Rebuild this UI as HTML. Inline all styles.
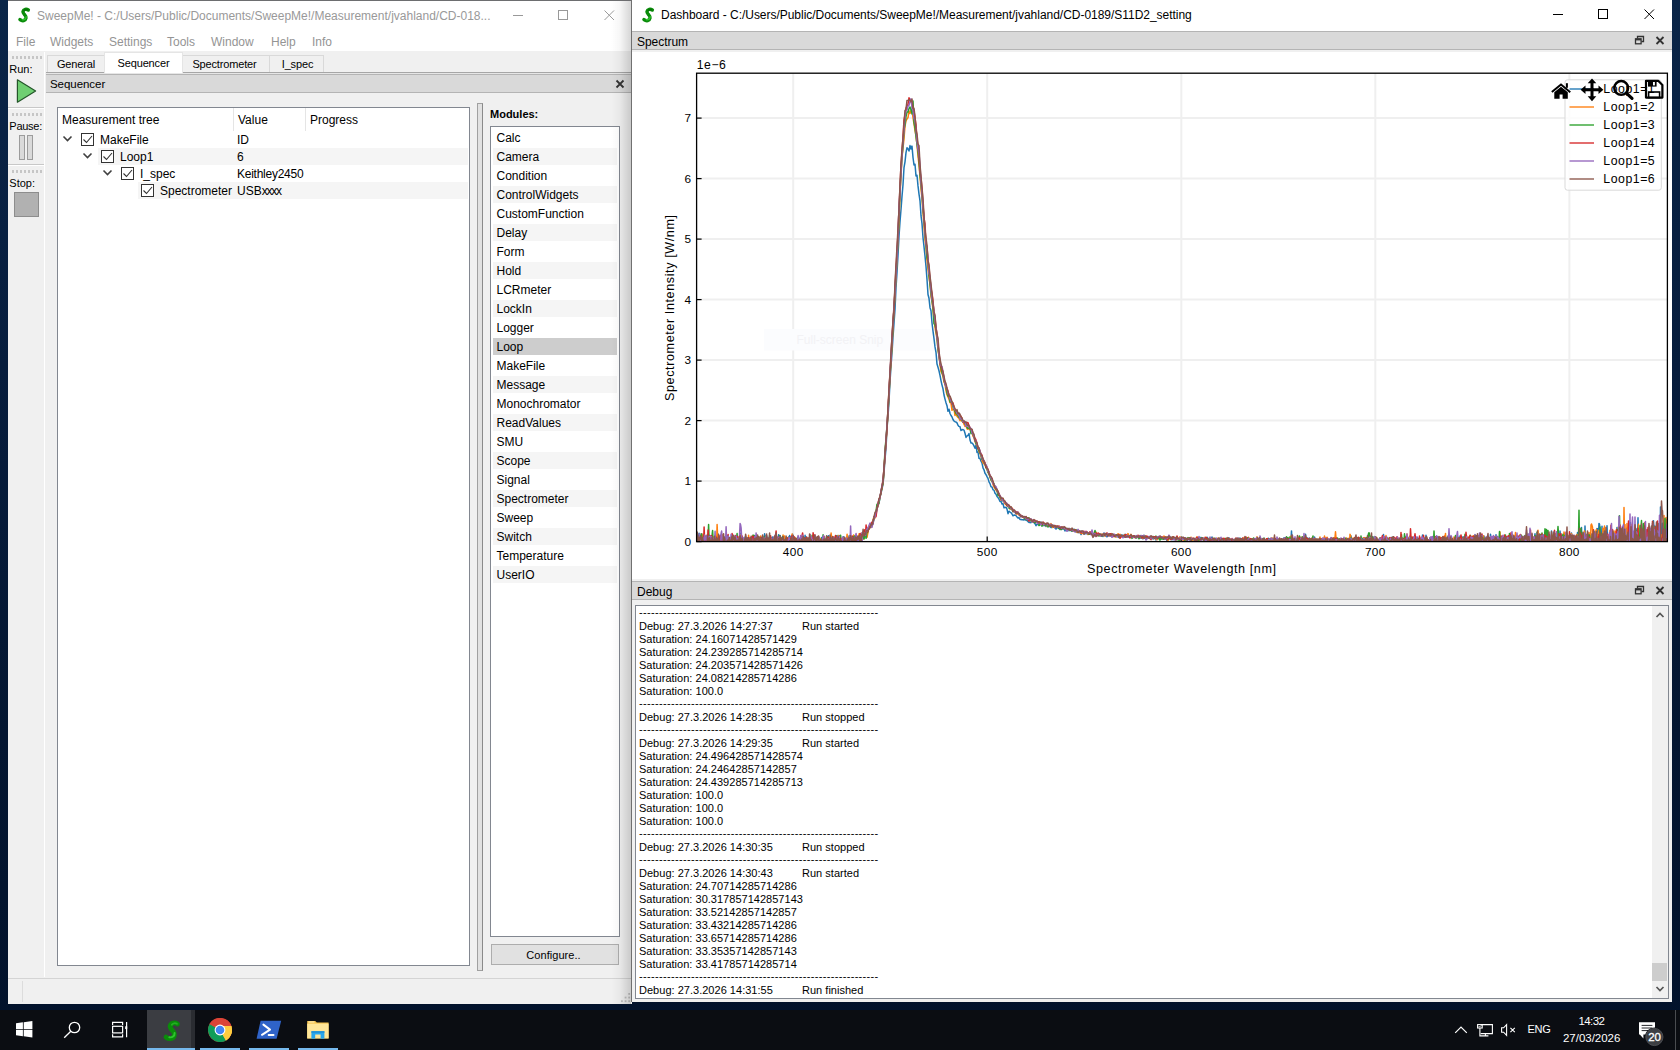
<!DOCTYPE html>
<html><head><meta charset="utf-8"><title>SweepMe!</title>
<style>
*{box-sizing:border-box;margin:0;padding:0}
html,body{width:1680px;height:1050px;overflow:hidden}
body{font-family:"Liberation Sans",sans-serif;font-size:12px;color:#000;position:relative;
 background:linear-gradient(180deg,#0a2548 0%,#071d3d 35%,#041631 70%,#02122b 100%)}
.abs{position:absolute}
.t{position:absolute;white-space:pre;line-height:1}
/* ---------- left window ---------- */
#lw{position:absolute;left:8px;top:0;width:624px;height:1004px;background:#f0f0f0;overflow:hidden}
#lw .title{position:absolute;left:0;top:0;width:100%;height:31px;background:#fff}
#lw .menu{position:absolute;left:0;top:31px;width:100%;height:20px;background:#fff}
#lw .menu span{position:absolute;top:4px;color:#949494;font-size:12px;line-height:14px;white-space:pre}
.dockhdr{position:absolute;background:#d9d9d9;border-top:1px solid #b4b4b4;border-bottom:1px solid #b4b4b4}
.tab{position:absolute;top:55px;height:17px;background:#f0f0f0;border:1px solid #d9d9d9;border-bottom:none;font-size:11px;line-height:14px;text-align:center;padding-top:1px;white-space:pre;letter-spacing:-0.15px}
.tab.sel{top:52px;height:21px;background:#fff;padding-top:3px;border-color:#e5e5e5}
.tb{position:absolute;font-size:11px;line-height:13px;white-space:pre}
.grip{position:absolute;left:4px;width:30px;height:3px;background:repeating-linear-gradient(90deg,#c6c6c6 0 2px,transparent 2px 4px)}
.tree{position:absolute;left:49px;top:107px;width:413px;height:859px;background:#fff;border:1px solid #828790}
.tree .r{position:absolute;left:1px;height:17px;background:#f5f5f5}
.tree .tx{position:absolute;font-size:12px;line-height:14px;white-space:pre}
.cb{position:absolute;width:13px;height:13px;border:1px solid #333;background:#fff}
.mods{position:absolute;left:482px;top:126px;width:130px;height:811px;background:#fff;border:1px solid #828790}
.mods div{position:absolute;left:2px;width:124px;height:17px;font-size:12px;line-height:17.6px;padding-left:3.5px;padding-top:0.9px;white-space:pre}
.mods div.a{background:#f5f5f5}
.mods div.s{background:#cdcdcd}
/* ---------- dashboard ---------- */
#dw{position:absolute;left:632px;top:0;width:1040px;height:1002px;background:#f0f0f0;overflow:hidden;box-shadow:-1px 0 0 #707070}
#dw .title{position:absolute;left:0;top:0;width:100%;height:31px;background:#fff}
.dbg{position:absolute;left:3px;top:605px;width:1034px;height:394px;background:#fff;border:1px solid #828790;overflow:hidden}
.dbg .lines{position:absolute;left:3px;top:0.5px}
.dbg .ln{position:absolute;left:0;font-size:11px;line-height:13px;height:13px;white-space:pre;letter-spacing:0.02px}
/* ---------- taskbar ---------- */
#tbar{position:absolute;left:0;top:1010px;width:1680px;height:40px;background:#0b0d12}
#tbar .ul{position:absolute;top:38px;height:2px;background:#76b9ed}
#tbar .w{color:#fff;position:absolute;white-space:pre;line-height:1}
.dbg .ln.d{letter-spacing:0.33px;margin-top:-1px}
</style></head><body>
<div id="lw">
 <div class="title">
  <svg class="abs" style="left:9px;top:6px" width="16" height="19" viewBox="0 0 16 19"><path d="M11.3 4 C9.5 2.8 6.5 3 6 5.5 C5.6 8 9.6 9.5 9 12 C8.5 14.8 5.5 15.4 3 13.6" fill="none" stroke="#0a8c0a" stroke-width="3.5" stroke-linecap="round"/><path d="M9.2 10.6 C9.3 13 7.5 14 5.4 13.7" fill="none" stroke="#2fc42f" stroke-width="1.4" stroke-linecap="round"/><path d="M10.9 3.9 C9.6 3.2 7.8 3.4 7.2 4.6" fill="none" stroke="#067406" stroke-width="1.4" stroke-linecap="round"/></svg>
  <span class="t" style="left:29px;top:9.5px;font-size:12px;color:#999">SweepMe! - C:/Users/Public/Documents/SweepMe!/Measurement/jvahland/CD-018...</span>
  <svg class="abs" style="left:500px;top:5px" width="115" height="22" viewBox="0 0 115 22" fill="none" stroke="#999" stroke-width="1"><path d="M5 10.5H15"/><rect x="50.5" y="5.5" width="9" height="9"/><path d="M96.5 5.5l9.5 9.5M106 5.5l-9.5 9.5"/></svg>
 </div>
 <div class="menu">
  <span style="left:8px">File</span><span style="left:42px">Widgets</span><span style="left:101px">Settings</span><span style="left:159px">Tools</span><span style="left:203px">Window</span><span style="left:263px">Help</span><span style="left:304px">Info</span>
 </div>
 <!-- toolbar column -->
 <div class="abs" style="left:36px;top:52px;width:1px;height:925px;background:#fff"></div>
 <div class="grip" style="top:56px"></div>
 <span class="tb" style="left:1.3px;top:63px">Run:</span>
 <svg class="abs" style="left:7px;top:77px" width="24" height="28" viewBox="0 0 24 28"><path d="M2.4 2.8 L20.6 14 L2.4 25.2 Z" fill="#6fcf72" stroke="#24562a" stroke-width="1.2" stroke-linejoin="round"/></svg>
 <div class="abs" style="left:0;top:107px;width:36px;height:1px;background:#c8c8c8"></div><div class="abs" style="left:0;top:108px;width:36px;height:1px;background:#fff"></div>
 <div class="grip" style="top:113px"></div>
 <span class="tb" style="left:1.3px;top:120px;letter-spacing:-0.25px">Pause:</span>
 <div class="abs" style="left:11px;top:135px;width:6px;height:25px;background:#dadada;border:1px solid #9c9c9c"></div>
 <div class="abs" style="left:19px;top:135px;width:6px;height:25px;background:#dadada;border:1px solid #9c9c9c"></div>
 <div class="abs" style="left:0;top:164px;width:36px;height:1px;background:#c8c8c8"></div><div class="abs" style="left:0;top:165px;width:36px;height:1px;background:#fff"></div>
 <div class="grip" style="top:170px"></div>
 <span class="tb" style="left:1.3px;top:177px">Stop:</span>
 <div class="abs" style="left:5.5px;top:192px;width:25px;height:25px;background:#b1b1b1;border:1px solid #8d8d8d"></div>
 <!-- tabs -->
 <div class="abs" style="left:38px;top:72px;width:600px;height:1px;background:#a6a6a6"></div><div class="abs" style="left:38px;top:73px;width:600px;height:1px;background:#e6e6e6"></div>
 <div class="tab" style="left:39px;width:58px">General</div>
 <div class="tab" style="left:174px;width:88px;padding-right:3px">Spectrometer</div>
 <div class="tab" style="left:261px;width:55px;padding-left:2px">I_spec</div>
 <div class="tab sel" style="left:96px;width:79px">Sequencer</div>
 <!-- Sequencer dock -->
 <div class="dockhdr" style="left:38px;top:74px;width:600px;height:19px"></div>
 <span class="tb" style="left:42px;top:78.3px;font-size:11.5px;letter-spacing:-0.05px">Sequencer</span>
 <svg class="abs" style="left:607px;top:79px" width="10" height="10" viewBox="0 0 10 10"><path d="M1.5 1.5l7 7M8.5 1.5l-7 7" stroke="#333" stroke-width="1.8"/></svg>
 <!-- tree -->
 <div class="tree">
  <div class="abs" style="left:175px;top:0;width:1px;height:23px;background:#e5e5e5"></div>
  <div class="abs" style="left:247px;top:0;width:1px;height:23px;background:#e5e5e5"></div>
  <span class="tx" style="left:4px;top:5px">Measurement tree</span><span class="tx" style="left:180px;top:5px">Value</span><span class="tx" style="left:252px;top:5px">Progress</span>
  <div class="r" style="left:40px;top:40px;width:370px"></div>
  <div class="r" style="left:80px;top:74px;width:330px"></div>
  <svg class="abs" style="left:4.2px;top:26.2px" width="60" height="50" viewBox="0 0 60 50" fill="none" stroke="#404040" stroke-width="1.6"><path d="M1.5 2.5l4 4l4-4"/><path d="M21.5 19.5l4 4l4-4"/><path d="M41.5 36.5l4 4l4-4"/></svg>
  <div class="cb" style="left:23px;top:25px"></div><div class="cb" style="left:43px;top:42px"></div><div class="cb" style="left:63px;top:59px"></div><div class="cb" style="left:83px;top:76px"></div>
  <svg class="abs" style="left:23px;top:25px" width="80" height="70" viewBox="0 0 80 70" fill="none" stroke="#333" stroke-width="1.1"><path d="M2.5 6.5l3 3l5.5-6.5"/><path d="M22.5 23.5l3 3l5.5-6.5"/><path d="M42.5 40.5l3 3l5.5-6.5"/><path d="M62.5 57.5l3 3l5.5-6.5"/></svg>
  <span class="tx" style="left:42px;top:24.5px">MakeFile</span><span class="tx" style="left:179px;top:24.5px">ID</span>
  <span class="tx" style="left:62px;top:41.5px">Loop1</span><span class="tx" style="left:179px;top:41.5px">6</span>
  <span class="tx" style="left:82px;top:58.5px">I_spec</span><span class="tx" style="left:179px;top:58.5px;letter-spacing:-0.25px">Keithley2450</span>
  <span class="tx" style="left:102px;top:75.5px">Spectrometer</span><span class="tx" style="left:179px;top:75.5px">USB<span style="letter-spacing:-1.2px">xxxx</span></span>
 </div>
 <!-- splitter handle -->
 <div class="abs" style="left:469px;top:103px;width:6px;height:868px;background:#e1e1e1;border:1px solid #a0a0a0;border-right-color:#8a8a8a"></div>
 <!-- modules -->
 <span class="t" style="left:482px;top:108.7px;font-size:11px;font-weight:700">Modules:</span>
 <div class="mods">
  <div class="" style="top:2px">Calc</div>
  <div class="a" style="top:21px">Camera</div>
  <div class="" style="top:40px">Condition</div>
  <div class="a" style="top:59px">ControlWidgets</div>
  <div class="" style="top:78px">CustomFunction</div>
  <div class="a" style="top:97px">Delay</div>
  <div class="" style="top:116px">Form</div>
  <div class="a" style="top:135px">Hold</div>
  <div class="" style="top:154px">LCRmeter</div>
  <div class="a" style="top:173px">LockIn</div>
  <div class="" style="top:192px">Logger</div>
  <div class="s" style="top:211px">Loop</div>
  <div class="" style="top:230px">MakeFile</div>
  <div class="a" style="top:249px">Message</div>
  <div class="" style="top:268px">Monochromator</div>
  <div class="a" style="top:287px">ReadValues</div>
  <div class="" style="top:306px">SMU</div>
  <div class="a" style="top:325px">Scope</div>
  <div class="" style="top:344px">Signal</div>
  <div class="a" style="top:363px">Spectrometer</div>
  <div class="" style="top:382px">Sweep</div>
  <div class="a" style="top:401px">Switch</div>
  <div class="" style="top:420px">Temperature</div>
  <div class="a" style="top:439px">UserIO</div>
 </div>
 <div class="abs" style="left:483px;top:944px;width:128px;height:21px;background:#e1e1e1;border:1px solid #adadad;font-size:11px;line-height:20.6px;text-align:center;padding-right:3px;letter-spacing:0.05px">Configure..</div>
 <!-- status bar -->
 <div class="abs" style="left:0;top:978px;width:638px;height:1px;background:#d4d4d4"></div>
 <div class="abs" style="left:14px;top:981px;width:1px;height:21px;background:#dcdcdc"></div>
 <svg class="abs" style="left:612.5px;top:992.5px" width="10" height="10" viewBox="0 0 11 11" fill="#bfbfbf"><rect x="8" y="0" width="2" height="2"/><rect x="4" y="4" width="2" height="2"/><rect x="8" y="4" width="2" height="2"/><rect x="0" y="8" width="2" height="2"/><rect x="4" y="8" width="2" height="2"/><rect x="8" y="8" width="2" height="2"/></svg>
 <!-- shadow from dashboard window -->
 <div class="abs" style="left:603px;top:0;width:20px;height:1004px;background:linear-gradient(90deg,rgba(0,0,0,0),rgba(0,0,0,0.035) 45%,rgba(0,0,0,0.16))"></div>
 <div class="abs" style="left:0;top:0;width:630px;height:1px;background:#6d6e70"></div>
</div>
<div id="dw">
 <div class="title">
  <svg class="abs" style="left:9px;top:6px" width="16" height="19" viewBox="0 0 16 19"><path d="M11.3 4 C9.5 2.8 6.5 3 6 5.5 C5.6 8 9.6 9.5 9 12 C8.5 14.8 5.5 15.4 3 13.6" fill="none" stroke="#0a8c0a" stroke-width="3.5" stroke-linecap="round"/><path d="M9.2 10.6 C9.3 13 7.5 14 5.4 13.7" fill="none" stroke="#2fc42f" stroke-width="1.4" stroke-linecap="round"/><path d="M10.9 3.9 C9.6 3.2 7.8 3.4 7.2 4.6" fill="none" stroke="#067406" stroke-width="1.4" stroke-linecap="round"/></svg>
  <span class="t" style="left:29px;top:8.8px;font-size:12px;color:#000;letter-spacing:-0.03px">Dashboard - C:/Users/Public/Documents/SweepMe!/Measurement/jvahland/CD-0189/S11D2_setting</span>
  <svg class="abs" style="left:915px;top:5px" width="115" height="22" viewBox="0 0 115 22" fill="none" stroke="#000" stroke-width="1"><path d="M6 9.5H16"/><rect x="51.5" y="4.5" width="9" height="9"/><path d="M97.5 4.5l9.5 9.5M107 4.5l-9.5 9.5"/></svg>
 </div>
 <div class="dockhdr" style="left:0;top:31px;width:1040px;height:19px"></div>
 <span class="tb" style="left:5px;top:35.6px;font-size:12px;letter-spacing:-0.05px">Spectrum</span>
 <svg class="abs" style="left:1002px;top:35px" width="32" height="11" viewBox="0 0 32 11" fill="none" stroke="#333"><path d="M3.5 3.5V1.5H9.5V6.5H7.5" stroke-width="1.3"/><rect x="1.5" y="3.8" width="5.6" height="5" stroke-width="1.3"/><path d="M1.5 4.6H7" stroke-width="1.6"/><path d="M22.5 2l7 7M29.5 2l-7 7" stroke-width="1.8"/></svg>
<svg id="chart" width="1040" height="527" viewBox="632 52 1040 527" style="position:absolute;left:0;top:52px">
<defs><clipPath id="ax"><rect x="696.6" y="73.2" width="970.8" height="468.4"/></clipPath></defs>
<rect x="632" y="52" width="1040" height="527" fill="#fff"/>
<g stroke="#efefef" stroke-width="2"><line x1="793.2" y1="73.2" x2="793.2" y2="541.6"/><line x1="987.2" y1="73.2" x2="987.2" y2="541.6"/><line x1="1181.3" y1="73.2" x2="1181.3" y2="541.6"/><line x1="1375.3" y1="73.2" x2="1375.3" y2="541.6"/><line x1="1569.4" y1="73.2" x2="1569.4" y2="541.6"/><line x1="696.6" y1="481.1" x2="1667.4" y2="481.1"/><line x1="696.6" y1="420.6" x2="1667.4" y2="420.6"/><line x1="696.6" y1="360.1" x2="1667.4" y2="360.1"/><line x1="696.6" y1="299.6" x2="1667.4" y2="299.6"/><line x1="696.6" y1="239.1" x2="1667.4" y2="239.1"/><line x1="696.6" y1="178.6" x2="1667.4" y2="178.6"/><line x1="696.6" y1="118.1" x2="1667.4" y2="118.1"/></g>
<rect x="764" y="329" width="172" height="21.5" fill="#fbfcfe"/><text x="796.5" y="344.3" font-size="12" fill="#f2f2f5" font-family="Liberation Sans, sans-serif">Full-screen Snip</text>
<g stroke="#000" stroke-width="1.2"><line x1="793.2" y1="541.6" x2="793.2" y2="536.6"/><line x1="987.2" y1="541.6" x2="987.2" y2="536.6"/><line x1="1181.3" y1="541.6" x2="1181.3" y2="536.6"/><line x1="1375.3" y1="541.6" x2="1375.3" y2="536.6"/><line x1="1569.4" y1="541.6" x2="1569.4" y2="536.6"/><line x1="696.6" y1="541.6" x2="701.6" y2="541.6"/><line x1="696.6" y1="481.1" x2="701.6" y2="481.1"/><line x1="696.6" y1="420.6" x2="701.6" y2="420.6"/><line x1="696.6" y1="360.1" x2="701.6" y2="360.1"/><line x1="696.6" y1="299.6" x2="701.6" y2="299.6"/><line x1="696.6" y1="239.1" x2="701.6" y2="239.1"/><line x1="696.6" y1="178.6" x2="701.6" y2="178.6"/><line x1="696.6" y1="118.1" x2="701.6" y2="118.1"/></g>
<g clip-path="url(#ax)"><polyline points="696.6,544.5 697.1,539.9 697.6,535.3 698.1,539.1 698.6,543.8 699.1,533.3 699.6,538.6 700.1,538.6 700.6,538.4 701.1,537.3 701.6,533.7 702.1,542.7 702.6,540.6 703.1,535.3 703.6,545.0 704.1,539.8 704.6,542.9 705.1,540.8 705.6,539.3 706.1,546.8 706.6,543.9 707.1,545.1 707.6,541.5 708.1,545.5 708.6,536.1 709.1,542.6 709.6,535.5 710.1,542.0 710.6,539.9 711.1,540.5 711.6,540.7 712.1,544.2 712.6,539.7 713.1,539.6 713.6,539.2 714.1,538.9 714.6,543.3 715.1,541.7 715.6,542.8 716.1,545.9 716.6,539.7 717.1,542.7 717.6,541.0 718.1,534.0 718.6,540.1 719.1,540.4 719.6,537.5 720.1,537.0 720.6,535.3 721.1,542.3 721.6,535.4 722.1,541.1 722.6,544.2 723.1,543.5 723.6,537.5 724.1,538.5 724.6,537.0 725.1,543.5 725.6,541.8 726.1,548.0 726.6,546.6 727.1,540.8 727.6,536.1 728.1,537.5 728.6,543.0 729.1,537.3 729.6,542.4 730.1,539.8 730.6,538.3 731.1,543.3 731.6,543.3 732.1,538.9 732.6,541.3 733.1,542.3 733.6,536.7 734.1,541.4 734.6,539.6 735.1,543.5 735.6,538.7 736.1,546.7 736.6,541.8 737.1,546.1 737.6,537.4 738.1,540.5 738.6,539.4 739.1,545.6 739.6,540.3 740.1,541.8 740.6,533.3 741.1,545.2 741.6,539.7 742.1,537.8 742.6,544.1 743.1,540.4 743.6,543.8 744.1,540.5 744.6,539.8 745.1,537.1 745.6,540.3 746.1,542.6 746.6,539.1 747.1,540.7 747.6,537.7 748.1,542.4 748.6,537.0 749.1,540.3 749.6,540.1 750.1,538.0 750.6,542.2 751.1,542.1 751.6,539.3 752.1,540.9 752.6,540.6 753.1,541.8 753.6,541.5 754.1,538.4 754.6,535.4 755.1,544.4 755.6,536.6 756.1,538.7 756.6,537.5 757.1,540.2 757.6,542.7 758.1,541.2 758.6,543.2 759.1,545.2 759.6,540.9 760.1,540.0 760.6,541.5 761.1,540.2 761.6,544.8 762.1,537.9 762.6,541.1 763.1,540.6 763.6,538.8 764.1,542.2 764.6,533.8 765.1,537.4 765.6,537.4 766.1,540.3 766.6,542.6 767.1,539.4 767.6,542.6 768.1,540.1 768.6,540.1 769.1,537.4 769.6,539.5 770.1,539.8 770.6,537.1 771.1,541.0 771.6,542.1 772.1,542.0 772.6,536.9 773.1,540.6 773.6,542.2 774.1,545.8 774.6,543.4 775.1,539.9 775.6,539.2 776.1,536.4 776.6,542.5 777.1,539.4 777.6,537.3 778.1,546.6 778.6,534.7 779.1,543.6 779.6,543.6 780.1,535.4 780.6,539.6 781.1,537.6 781.6,539.0 782.1,539.9 782.6,541.0 783.1,542.7 783.6,539.2 784.1,545.6 784.6,541.1 785.1,538.7 785.6,543.6 786.1,538.5 786.6,538.2 787.1,540.5 787.6,541.1 788.1,539.3 788.6,537.1 789.1,541.3 789.6,535.5 790.1,536.8 790.6,538.1 791.1,537.1 791.6,537.4 792.1,548.0 792.6,534.3 793.1,544.3 793.6,540.1 794.1,543.4 794.6,539.1 795.1,539.6 795.6,540.0 796.1,547.8 796.6,538.6 797.1,540.0 797.6,545.8 798.1,536.9 798.6,541.0 799.1,542.5 799.6,538.3 800.1,542.0 800.6,539.7 801.1,541.5 801.6,542.9 802.1,543.5 802.6,536.2 803.1,540.4 803.6,542.5 804.1,542.1 804.6,542.8 805.1,535.3 805.6,539.7 806.1,540.2 806.6,536.9 807.1,542.2 807.6,543.3 808.1,541.9 808.6,540.2 809.1,541.1 809.6,541.5 810.1,540.3 810.6,541.7 811.1,543.4 811.6,538.8 812.1,541.3 812.6,541.4 813.1,539.4 813.6,539.7 814.1,543.4 814.6,544.7 815.1,544.1 815.6,543.7 816.1,540.0 816.6,541.9 817.1,543.0 817.6,544.0 818.1,537.6 818.6,541.7 819.1,540.1 819.6,540.9 820.1,543.0 820.6,539.7 821.1,540.4 821.6,537.5 822.1,539.3 822.6,543.8 823.1,541.0 823.6,541.0 824.1,540.9 824.6,543.8 825.1,544.8 825.6,541.1 826.1,539.9 826.6,543.6 827.1,536.2 827.6,539.2 828.1,541.9 828.6,535.8 829.1,544.4 829.6,543.2 830.1,543.3 830.6,537.9 831.1,542.5 831.6,539.0 832.1,540.1 832.6,542.1 833.1,540.4 833.6,543.6 834.1,538.7 834.6,543.1 835.1,542.8 835.6,539.1 836.1,541.9 836.6,536.2 837.1,537.4 837.6,544.6 838.1,540.3 838.6,541.0 839.1,535.6 839.6,542.0 840.1,542.2 840.6,541.1 841.1,541.1 841.6,542.7 842.1,539.9 842.6,543.3 843.1,542.4 843.6,536.7 844.1,539.6 844.6,542.7 845.1,547.5 845.6,540.9 846.1,543.1 846.6,543.1 847.1,537.4 847.6,540.3 848.1,542.9 848.6,539.4 849.1,541.2 849.6,539.6 850.1,535.5 850.6,539.7 851.1,541.1 851.6,545.6 852.1,538.0 852.6,539.9 853.1,538.5 853.6,543.2 854.1,540.2 854.6,539.1 855.1,538.0 855.6,538.4 856.1,539.5 856.6,535.6 857.1,538.5 857.6,543.1 858.1,541.0 858.6,538.0 859.1,537.1 859.6,540.6 860.1,540.1 860.6,535.3 861.1,536.3 861.6,535.8 862.1,534.8 862.6,535.9 863.1,537.4 863.6,532.2 864.1,532.3 864.6,530.2 865.1,532.7 865.6,532.8 866.1,531.9 866.6,531.1 867.1,535.5 867.6,530.9 868.0,530.9 869.0,528.1 870.0,526.7 871.0,526.5 872.0,525.2 873.0,524.0 874.0,518.5 875.0,517.0 876.0,514.0 877.0,508.9 878.0,505.3 879.0,503.1 880.0,497.2 881.0,493.2 882.0,488.9 883.0,484.7 884.0,472.7 885.0,458.9 886.0,448.5 887.0,428.4 888.0,416.5 889.0,401.1 890.0,381.6 891.0,366.1 892.0,352.8 893.0,337.0 894.0,323.2 895.0,309.1 896.0,287.7 897.0,272.5 898.0,255.3 899.0,236.1 900.0,221.7 901.0,209.5 902.0,196.4 903.0,184.7 904.0,167.7 905.0,161.8 906.0,152.7 907.0,147.7 908.0,148.9 909.0,151.0 910.0,145.6 911.0,149.0 912.0,146.1 913.0,157.5 914.0,164.9 915.0,164.2 916.0,175.9 917.0,175.2 918.0,185.9 919.0,194.1 920.0,200.8 921.0,215.7 922.0,223.6 923.0,237.5 924.0,246.7 925.0,256.0 926.0,266.4 927.0,279.5 928.0,294.5 929.0,298.3 930.0,307.7 931.0,310.8 932.0,323.0 933.0,331.2 934.0,338.6 935.0,346.9 936.0,352.3 937.0,364.1 938.0,367.2 939.0,370.8 940.0,375.3 941.0,380.6 942.0,385.1 943.0,388.8 944.0,395.0 945.0,399.1 946.0,402.7 947.0,405.7 948.0,411.3 949.0,409.2 950.0,413.5 951.0,415.5 952.0,416.9 953.0,419.5 954.0,421.0 955.0,421.7 956.0,422.0 957.0,422.9 958.0,425.3 959.0,426.4 960.0,426.8 961.0,430.5 962.0,429.8 963.0,429.6 964.0,430.1 965.0,433.3 966.0,437.4 967.0,436.0 968.0,435.3 969.0,433.5 970.0,440.0 971.0,443.1 972.0,443.0 973.0,444.1 974.0,445.9 975.0,448.3 976.0,445.1 977.0,452.4 978.0,452.0 979.0,458.3 980.0,458.4 981.0,461.2 982.0,463.0 983.0,467.9 984.0,469.8 985.0,473.2 986.0,474.6 987.0,476.6 988.0,478.4 989.0,481.9 990.0,483.6 991.0,486.8 992.0,486.9 993.0,489.8 994.0,490.1 995.0,493.3 996.0,494.2 997.0,496.4 998.0,497.6 999.0,499.2 1000.0,501.4 1001.0,501.3 1002.0,504.0 1003.0,503.6 1004.0,507.8 1005.0,507.6 1006.0,507.2 1007.0,509.2 1008.0,513.7 1009.0,511.2 1010.0,512.0 1011.0,512.7 1012.0,514.0 1013.0,515.8 1014.0,515.0 1015.0,515.3 1016.0,515.6 1017.0,516.9 1018.0,518.0 1019.0,517.5 1020.0,519.5 1021.0,519.5 1022.0,519.8 1023.0,519.7 1024.0,519.9 1025.0,519.0 1026.0,520.3 1027.0,520.4 1028.0,521.6 1029.0,522.4 1030.0,522.3 1031.0,522.7 1032.0,521.2 1033.0,522.0 1034.0,522.7 1035.0,523.6 1036.0,525.7 1037.0,524.2 1038.0,524.6 1039.0,525.0 1040.0,524.3 1041.0,522.1 1042.0,523.6 1043.0,525.4 1044.0,525.4 1045.0,525.5 1046.0,526.4 1047.0,525.2 1048.0,525.5 1049.0,526.5 1050.0,526.4 1051.0,527.4 1052.0,527.4 1053.0,526.6 1054.0,527.0 1055.0,527.8 1056.0,529.1 1057.0,526.5 1058.0,528.2 1059.0,528.0 1060.0,529.5 1061.0,528.6 1062.0,528.1 1063.0,529.1 1064.0,528.7 1065.0,531.0 1066.0,529.0 1067.0,530.3 1068.0,530.6 1069.0,530.4 1070.0,530.2 1071.0,530.6 1072.0,531.2 1073.0,530.6 1074.0,529.2 1075.0,530.9 1076.0,531.9 1077.0,530.9 1078.0,531.3 1079.0,532.7 1080.0,531.4 1081.0,534.6 1082.0,532.2 1083.0,531.3 1084.0,533.8 1085.0,533.4 1086.0,533.8 1087.0,532.3 1088.0,534.0 1089.0,533.7 1090.0,533.5 1091.0,533.2 1092.0,533.5 1093.0,535.0 1094.0,535.9 1095.0,533.8 1096.0,534.7 1097.0,534.4 1098.0,535.5 1099.0,535.1 1100.0,534.0 1101.0,536.3 1102.0,535.4 1103.0,536.5 1104.0,533.0 1105.0,535.2 1106.0,536.2 1107.0,536.8 1108.0,535.5 1109.0,535.5 1110.0,535.8 1111.0,534.6 1112.0,536.5 1113.0,535.2 1114.0,534.6 1115.0,536.4 1116.0,535.2 1117.0,534.8 1118.0,537.1 1119.0,537.2 1120.0,537.2 1121.0,535.8 1122.0,534.7 1123.0,537.5 1124.0,536.3 1125.0,534.2 1126.0,537.0 1127.0,536.0 1128.0,536.1 1129.0,537.0 1130.0,535.9 1131.0,536.4 1132.0,536.9 1133.0,537.1 1134.0,535.8 1135.0,536.8 1136.0,537.6 1137.0,537.5 1138.0,536.8 1139.0,536.8 1140.0,538.3 1141.0,536.4 1142.0,538.3 1143.0,538.8 1144.0,537.6 1145.0,537.1 1146.0,536.6 1147.0,538.4 1148.0,537.8 1149.0,536.6 1150.0,537.6 1151.0,536.6 1152.0,537.1 1153.0,539.0 1154.0,538.4 1155.0,537.0 1156.0,539.9 1157.0,537.1 1158.0,538.0 1159.0,538.7 1160.0,536.0 1161.0,538.8 1162.0,538.6 1163.0,538.4 1164.0,538.8 1165.0,537.1 1166.0,537.9 1167.0,540.4 1168.0,537.3 1169.0,537.4 1170.0,537.6 1171.0,538.0 1172.0,539.8 1173.0,537.8 1174.0,539.0 1175.0,539.6 1176.0,538.6 1177.0,538.1 1178.0,539.6 1179.0,539.7 1180.0,538.3 1181.0,537.9 1182.0,539.4 1183.0,538.7 1184.0,538.9 1185.0,537.7 1186.0,538.7 1187.0,540.7 1188.0,539.8 1189.0,537.9 1190.0,537.8 1191.0,537.9 1192.0,539.3 1193.0,540.0 1194.0,538.5 1195.0,539.3 1196.0,539.5 1197.0,539.9 1198.0,539.0 1199.0,540.2 1200.0,539.7 1201.0,537.4 1202.0,539.5 1203.0,538.2 1204.0,539.2 1205.0,539.0 1206.0,539.3 1207.0,537.2 1208.0,539.2 1209.0,539.3 1210.0,539.4 1211.0,540.1 1212.0,536.9 1213.0,540.5 1214.0,541.3 1215.0,539.4 1216.0,539.2 1217.0,541.0 1218.0,539.5 1219.0,539.8 1220.0,541.6 1221.0,542.1 1222.0,539.5 1223.0,539.9 1224.0,539.0 1225.0,541.4 1226.0,538.7 1227.0,539.9 1228.0,539.5 1229.0,537.9 1230.0,540.1 1231.0,540.3 1232.0,540.6 1233.0,541.7 1234.0,540.2 1235.0,541.8 1235.5,541.3 1236.0,542.2 1236.5,539.2 1237.0,540.3 1237.5,538.7 1238.0,540.8 1238.5,540.6 1239.0,541.0 1239.5,541.2 1240.0,538.1 1240.5,543.4 1241.0,538.7 1241.5,538.8 1242.0,540.7 1242.5,540.0 1243.0,538.3 1243.5,540.2 1244.0,542.6 1244.5,541.0 1245.0,538.7 1245.5,541.3 1246.0,538.7 1246.5,541.3 1247.0,539.3 1247.5,540.8 1248.0,541.0 1248.5,540.6 1249.0,542.7 1249.5,539.5 1250.0,542.8 1250.5,540.4 1251.0,541.6 1251.5,539.8 1252.0,538.7 1252.5,540.2 1253.0,540.6 1253.5,539.9 1254.0,539.7 1254.5,539.2 1255.0,540.8 1255.5,538.8 1256.0,541.5 1256.5,540.4 1257.0,537.5 1257.5,540.0 1258.0,539.3 1258.5,539.7 1259.0,539.9 1259.5,537.8 1260.0,540.2 1260.5,542.2 1261.0,540.5 1261.5,540.0 1262.0,541.0 1262.5,541.0 1263.0,538.7 1263.5,539.6 1264.0,538.3 1264.5,539.9 1265.0,541.7 1265.5,540.6 1266.0,540.7 1266.5,540.7 1267.0,539.3 1267.5,542.5 1268.0,540.7 1268.5,538.3 1269.0,541.7 1269.5,539.4 1270.0,540.3 1270.5,542.4 1271.0,541.5 1271.5,538.6 1272.0,541.2 1272.5,540.2 1273.0,540.4 1273.5,541.8 1274.0,538.8 1274.5,539.1 1275.0,539.8 1275.5,540.5 1276.0,541.4 1276.5,543.1 1277.0,539.1 1277.5,546.3 1278.0,539.1 1278.5,539.9 1279.0,539.7 1279.5,540.4 1280.0,541.7 1280.5,541.5 1281.0,540.6 1281.5,539.8 1282.0,538.7 1282.5,540.0 1283.0,539.7 1283.5,541.4 1284.0,537.8 1284.5,539.7 1285.0,537.9 1285.5,539.1 1286.0,540.3 1286.5,541.9 1287.0,538.2 1287.5,541.6 1288.0,540.0 1288.5,539.0 1289.0,539.3 1289.5,541.9 1290.0,541.7 1290.5,536.8 1291.0,539.4 1291.5,530.9 1292.0,541.5 1292.5,542.7 1293.0,542.1 1293.5,541.7 1294.0,541.0 1294.5,540.0 1295.0,539.5 1295.5,540.8 1296.0,541.5 1296.5,540.0 1297.0,541.2 1297.5,539.1 1298.0,541.0 1298.5,541.3 1299.0,538.7 1299.5,538.7 1300.0,538.1 1300.5,541.8 1301.0,537.3 1301.5,538.4 1302.0,540.1 1302.5,541.8 1303.0,540.7 1303.5,539.6 1304.0,540.3 1304.5,540.3 1305.0,539.0 1305.5,534.2 1306.0,538.2 1306.5,541.8 1307.0,542.9 1307.5,538.0 1308.0,538.4 1308.5,540.6 1309.0,542.9 1309.5,538.3 1310.0,541.2 1310.5,541.7 1311.0,540.8 1311.5,540.4 1312.0,542.9 1312.5,542.4 1313.0,540.6 1313.5,540.4 1314.0,542.8 1314.5,537.0 1315.0,538.7 1315.5,539.7 1316.0,539.6 1316.5,543.7 1317.0,540.4 1317.5,539.7 1318.0,540.4 1318.5,540.0 1319.0,539.6 1319.5,538.2 1320.0,538.8 1320.5,541.4 1321.0,538.8 1321.5,541.3 1322.0,540.2 1322.5,540.0 1323.0,540.6 1323.5,540.8 1324.0,540.1 1324.5,540.0 1325.0,544.4 1325.5,540.7 1326.0,541.8 1326.5,538.1 1327.0,540.0 1327.5,541.8 1328.0,539.8 1328.5,540.3 1329.0,539.7 1329.5,543.9 1330.0,541.1 1330.5,542.2 1331.0,538.2 1331.5,537.9 1332.0,541.0 1332.5,540.7 1333.0,540.7 1333.5,541.4 1334.0,542.2 1334.5,542.7 1335.0,538.7 1335.5,542.3 1336.0,539.9 1336.5,539.2 1337.0,539.7 1337.5,540.8 1338.0,539.6 1338.5,542.8 1339.0,542.3 1339.5,539.1 1340.0,539.5 1340.5,538.7 1341.0,540.6 1341.5,543.9 1342.0,541.4 1342.5,541.8 1343.0,538.9 1343.5,542.0 1344.0,539.0 1344.5,540.2 1345.0,540.1 1345.5,540.1 1346.0,539.5 1346.5,542.4 1347.0,538.5 1347.5,543.4 1348.0,543.3 1348.5,541.9 1349.0,539.3 1349.5,542.0 1350.0,537.5 1350.5,542.3 1351.0,535.9 1351.5,539.4 1352.0,539.0 1352.5,539.9 1353.0,539.0 1353.5,541.8 1354.0,543.0 1354.5,539.0 1355.0,539.4 1355.5,540.9 1356.0,541.0 1356.5,540.8 1357.0,540.3 1357.5,538.9 1358.0,541.2 1358.5,540.0 1359.0,538.4 1359.5,540.9 1360.0,539.5 1360.5,541.6 1361.0,540.4 1361.5,541.0 1362.0,538.4 1362.5,541.2 1363.0,542.7 1363.5,540.1 1364.0,541.5 1364.5,538.1 1365.0,539.8 1365.5,541.4 1366.0,542.6 1366.5,540.5 1367.0,541.0 1367.5,540.8 1368.0,540.1 1368.5,534.3 1369.0,542.0 1369.5,540.2 1370.0,539.0 1370.5,538.3 1371.0,540.8 1371.5,540.0 1372.0,541.0 1372.5,536.7 1373.0,541.7 1373.5,540.0 1374.0,542.0 1374.5,539.2 1375.0,541.9 1375.5,537.6 1376.0,541.7 1376.5,540.8 1377.0,540.7 1377.5,540.0 1378.0,541.8 1378.5,544.1 1379.0,548.0 1379.5,541.1 1380.0,538.5 1380.5,538.5 1381.0,539.7 1381.5,538.7 1382.0,540.6 1382.5,540.9 1383.0,539.6 1383.5,534.6 1384.0,537.8 1384.5,539.7 1385.0,543.3 1385.5,541.8 1386.0,545.4 1386.5,538.5 1387.0,540.7 1387.5,537.9 1388.0,537.9 1388.5,541.0 1389.0,539.3 1389.5,540.7 1390.0,547.1 1390.5,539.7 1391.0,540.2 1391.5,540.2 1392.0,537.3 1392.5,542.5 1393.0,543.8 1393.5,538.7 1394.0,538.1 1394.5,539.3 1395.0,540.4 1395.5,540.0 1396.0,540.1 1396.5,540.3 1397.0,541.8 1397.5,538.0 1398.0,541.8 1398.5,543.4 1399.0,540.6 1399.5,542.1 1400.0,542.6 1400.5,539.4 1401.0,543.1 1401.5,542.7 1402.0,542.0 1402.5,542.6 1403.0,542.6 1403.5,541.4 1404.0,543.4 1404.5,543.6 1405.0,536.2 1405.5,540.2 1406.0,541.6 1406.5,539.6 1407.0,540.2 1407.5,540.4 1408.0,541.5 1408.5,541.3 1409.0,541.7 1409.5,537.0 1410.0,541.3 1410.5,539.7 1411.0,539.5 1411.5,544.8 1412.0,538.2 1412.5,540.2 1413.0,544.6 1413.5,537.4 1414.0,538.5 1414.5,540.0 1415.0,542.1 1415.5,542.7 1416.0,541.1 1416.5,541.7 1417.0,538.4 1417.5,539.3 1418.0,538.2 1418.5,540.2 1419.0,541.0 1419.5,541.2 1420.0,541.3 1420.5,541.1 1421.0,539.9 1421.5,540.2 1422.0,540.8 1422.5,535.1 1423.0,540.4 1423.5,539.9 1424.0,541.2 1424.5,538.4 1425.0,538.7 1425.5,540.5 1426.0,535.3 1426.5,539.2 1427.0,543.7 1427.5,543.7 1428.0,545.7 1428.5,540.1 1429.0,542.5 1429.5,548.0 1430.0,542.2 1430.5,540.8 1431.0,541.0 1431.5,540.4 1432.0,541.2 1432.5,540.3 1433.0,541.3 1433.5,542.7 1434.0,544.0 1434.5,541.2 1435.0,538.1 1435.5,542.3 1436.0,542.2 1436.5,538.8 1437.0,536.6 1437.5,537.3 1438.0,542.2 1438.5,542.6 1439.0,541.5 1439.5,540.4 1440.0,540.0 1440.5,545.4 1441.0,537.7 1441.5,538.7 1442.0,543.4 1442.5,539.5 1443.0,544.5 1443.5,541.0 1444.0,537.1 1444.5,544.1 1445.0,542.2 1445.5,542.0 1446.0,541.6 1446.5,540.1 1447.0,541.1 1447.5,536.2 1448.0,543.1 1448.5,536.6 1449.0,541.7 1449.5,539.8 1450.0,541.1 1450.5,541.6 1451.0,542.3 1451.5,541.5 1452.0,543.5 1452.5,542.4 1453.0,548.0 1453.5,541.6 1454.0,543.1 1454.5,541.6 1455.0,543.0 1455.5,538.0 1456.0,541.3 1456.5,541.2 1457.0,537.5 1457.5,543.5 1458.0,540.4 1458.5,544.3 1459.0,543.0 1459.5,542.8 1460.0,536.0 1460.5,542.6 1461.0,538.7 1461.5,539.2 1462.0,536.8 1462.5,541.3 1463.0,544.2 1463.5,543.8 1464.0,536.7 1464.5,538.9 1465.0,536.5 1465.5,536.3 1466.0,539.6 1466.5,540.6 1467.0,539.0 1467.5,544.1 1468.0,541.5 1468.5,540.6 1469.0,538.5 1469.5,545.3 1470.0,548.0 1470.5,537.3 1471.0,539.0 1471.5,541.8 1472.0,542.1 1472.5,540.7 1473.0,545.1 1473.5,543.0 1474.0,537.9 1474.5,537.8 1475.0,536.0 1475.5,539.3 1476.0,537.2 1476.5,544.8 1477.0,548.0 1477.5,548.0 1478.0,544.9 1478.5,546.1 1479.0,538.9 1479.5,538.6 1480.0,544.8 1480.5,545.5 1481.0,537.9 1481.5,536.9 1482.0,544.3 1482.5,540.0 1483.0,536.5 1483.5,539.9 1484.0,536.1 1484.5,540.4 1485.0,540.0 1485.5,541.8 1486.0,547.2 1486.5,542.3 1487.0,543.8 1487.5,537.5 1488.0,545.0 1488.5,541.1 1489.0,540.6 1489.5,538.9 1490.0,540.5 1490.5,534.3 1491.0,539.1 1491.5,540.0 1492.0,540.0 1492.5,537.6 1493.0,545.5 1493.5,543.0 1494.0,540.6 1494.5,543.1 1495.0,540.3 1495.5,548.0 1496.0,534.7 1496.5,539.7 1497.0,540.4 1497.5,543.9 1498.0,538.1 1498.5,537.7 1499.0,542.3 1499.5,540.9 1500.0,545.3 1500.5,539.9 1501.0,540.5 1501.5,537.3 1502.0,539.0 1502.5,536.7 1503.0,541.1 1503.5,540.0 1504.0,541.2 1504.5,540.6 1505.0,542.8 1505.5,541.0 1506.0,542.6 1506.5,537.1 1507.0,539.4 1507.5,540.1 1508.0,542.0 1508.5,537.2 1509.0,540.3 1509.5,538.9 1510.0,542.2 1510.5,539.6 1511.0,542.9 1511.5,542.8 1512.0,542.6 1512.5,535.1 1513.0,540.3 1513.5,535.8 1514.0,543.8 1514.5,539.5 1515.0,542.6 1515.5,539.6 1516.0,535.2 1516.5,535.6 1517.0,543.5 1517.5,538.1 1518.0,537.8 1518.5,541.2 1519.0,542.1 1519.5,543.7 1520.0,540.1 1520.5,545.5 1521.0,541.6 1521.5,540.4 1522.0,546.4 1522.5,544.9 1523.0,538.1 1523.5,541.4 1524.0,546.2 1524.5,541.6 1525.0,539.7 1525.5,543.0 1526.0,539.4 1526.5,539.5 1527.0,539.6 1527.5,542.1 1528.0,542.7 1528.5,537.2 1529.0,539.9 1529.5,539.3 1530.0,538.6 1530.5,539.5 1531.0,539.4 1531.5,539.6 1532.0,540.6 1532.5,542.9 1533.0,537.9 1533.5,539.7 1534.0,543.2 1534.5,537.6 1535.0,533.8 1535.5,544.1 1536.0,539.9 1536.5,535.9 1537.0,545.7 1537.5,540.6 1538.0,540.9 1538.5,542.8 1539.0,534.6 1539.5,537.6 1540.0,540.9 1540.5,545.7 1541.0,540.1 1541.5,543.8 1542.0,538.7 1542.5,543.1 1543.0,539.5 1543.5,535.1 1544.0,537.7 1544.5,541.5 1545.0,541.0 1545.5,543.8 1546.0,537.7 1546.5,543.9 1547.0,542.7 1547.5,545.9 1548.0,540.2 1548.5,533.3 1549.0,544.1 1549.5,542.2 1550.0,542.5 1550.5,540.1 1551.0,539.0 1551.5,531.1 1552.0,535.8 1552.5,539.6 1553.0,544.4 1553.5,535.3 1554.0,538.6 1554.5,543.3 1555.0,539.3 1555.5,540.1 1556.0,535.9 1556.5,538.6 1557.0,543.4 1557.5,539.0 1558.0,534.1 1558.5,538.8 1559.0,541.9 1559.5,542.5 1560.0,531.0 1560.5,535.3 1561.0,543.9 1561.5,538.1 1562.0,535.2 1562.5,537.0 1563.0,542.3 1563.5,540.9 1564.0,548.0 1564.5,541.4 1565.0,541.2 1565.5,537.1 1566.0,541.6 1566.5,542.8 1567.0,534.1 1567.5,536.6 1568.0,543.0 1568.5,548.0 1569.0,548.0 1569.5,541.3 1570.0,540.8 1570.5,541.3 1571.0,537.1 1571.5,533.0 1572.0,537.4 1572.5,539.5 1573.0,539.6 1573.5,547.0 1574.0,536.4 1574.5,541.6 1575.0,536.3 1575.5,546.0 1576.0,542.0 1576.5,548.0 1577.0,543.9 1577.5,532.6 1578.0,544.2 1578.5,542.8 1579.0,543.1 1579.5,539.2 1580.0,545.7 1580.5,543.3 1581.0,547.4 1581.5,527.4 1582.0,543.9 1582.5,541.9 1583.0,547.0 1583.5,540.6 1584.0,542.4 1584.5,548.0 1585.0,526.1 1585.5,543.1 1586.0,543.0 1586.5,536.9 1587.0,548.0 1587.5,541.9 1588.0,547.8 1588.5,544.8 1589.0,543.5 1589.5,548.0 1590.0,544.0 1590.5,539.6 1591.0,546.4 1591.5,540.1 1592.0,542.5 1592.5,533.4 1593.0,541.8 1593.5,539.2 1594.0,540.5 1594.5,542.4 1595.0,531.5 1595.5,538.4 1596.0,538.8 1596.5,536.5 1597.0,528.4 1597.5,545.2 1598.0,528.7 1598.5,534.5 1599.0,523.4 1599.5,524.1 1600.0,529.5 1600.5,545.1 1601.0,533.3 1601.5,536.5 1602.0,526.3 1602.5,548.0 1603.0,537.3 1603.5,543.4 1604.0,542.8 1604.5,540.6 1605.0,543.9 1605.5,537.5 1606.0,539.9 1606.5,547.0 1607.0,525.7 1607.5,540.3 1608.0,548.0 1608.5,544.1 1609.0,540.2 1609.5,542.5 1610.0,542.4 1610.5,532.2 1611.0,544.4 1611.5,543.7 1612.0,544.2 1612.5,543.3 1613.0,545.2 1613.5,539.8 1614.0,533.0 1614.5,539.7 1615.0,539.5 1615.5,543.9 1616.0,544.2 1616.5,548.0 1617.0,527.5 1617.5,544.5 1618.0,547.4 1618.5,540.3 1619.0,542.2 1619.5,532.3 1620.0,537.8 1620.5,548.0 1621.0,544.5 1621.5,547.2 1622.0,542.1 1622.5,548.0 1623.0,528.1 1623.5,537.9 1624.0,539.3 1624.5,538.6 1625.0,536.0 1625.5,547.0 1626.0,538.5 1626.5,528.2 1627.0,529.6 1627.5,548.0 1628.0,544.3 1628.5,543.0 1629.0,548.0 1629.5,542.6 1630.0,531.6 1630.5,522.7 1631.0,532.5 1631.5,548.0 1632.0,542.2 1632.5,547.0 1633.0,532.9 1633.5,533.6 1634.0,544.6 1634.5,530.0 1635.0,543.3 1635.5,538.0 1636.0,528.6 1636.5,534.8 1637.0,542.2 1637.5,539.0 1638.0,517.8 1638.5,542.1 1639.0,536.9 1639.5,548.0 1640.0,535.4 1640.5,543.9 1641.0,532.8 1641.5,547.4 1642.0,534.4 1642.5,539.6 1643.0,537.1 1643.5,535.6 1644.0,533.2 1644.5,547.7 1645.0,548.0 1645.5,541.2 1646.0,533.7 1646.5,548.0 1647.0,530.6 1647.5,548.0 1648.0,536.3 1648.5,539.8 1649.0,539.3 1649.5,527.3 1650.0,548.0 1650.5,548.0 1651.0,544.6 1651.5,537.9 1652.0,547.8 1652.5,523.4 1653.0,526.3 1653.5,520.7 1654.0,531.0 1654.5,527.0 1655.0,526.1 1655.5,548.0 1656.0,535.1 1656.5,548.0 1657.0,531.0 1657.5,538.5 1658.0,537.3 1658.5,541.5 1659.0,545.0 1659.5,532.2 1660.0,548.0 1660.5,507.1 1661.0,532.7 1661.5,548.0 1662.0,548.0 1662.5,523.2 1663.0,542.7 1663.5,548.0 1664.0,530.5 1664.5,538.6 1665.0,531.0 1665.5,526.7 1666.0,519.3 1666.5,520.1 1667.0,527.0" fill="none" stroke="#1f77b4" stroke-width="1.5" stroke-linejoin="round"/><polyline points="696.6,546.4 697.1,547.3 697.6,538.9 698.1,538.4 698.6,541.8 699.1,539.6 699.6,535.4 700.1,537.4 700.6,538.6 701.1,538.6 701.6,543.5 702.1,534.1 702.6,546.0 703.1,541.9 703.6,542.2 704.1,546.2 704.6,541.2 705.1,535.7 705.6,541.9 706.1,544.6 706.6,541.1 707.1,535.0 707.6,539.5 708.1,540.8 708.6,545.2 709.1,539.2 709.6,539.3 710.1,536.7 710.6,536.2 711.1,538.7 711.6,545.8 712.1,545.2 712.6,544.2 713.1,539.9 713.6,543.2 714.1,536.8 714.6,540.0 715.1,539.7 715.6,538.5 716.1,539.8 716.6,545.1 717.1,524.5 717.6,536.4 718.1,536.2 718.6,543.0 719.1,546.3 719.6,545.3 720.1,543.9 720.6,538.1 721.1,538.1 721.6,536.4 722.1,534.4 722.6,539.2 723.1,539.7 723.6,541.9 724.1,541.8 724.6,544.2 725.1,539.3 725.6,539.8 726.1,543.4 726.6,543.2 727.1,539.4 727.6,536.9 728.1,540.5 728.6,539.9 729.1,542.4 729.6,541.5 730.1,541.7 730.6,541.6 731.1,542.5 731.6,539.6 732.1,537.0 732.6,543.5 733.1,536.7 733.6,541.9 734.1,541.8 734.6,547.0 735.1,547.7 735.6,538.7 736.1,543.9 736.6,538.5 737.1,540.6 737.6,540.0 738.1,537.0 738.6,541.0 739.1,548.0 739.6,545.7 740.1,538.0 740.6,535.1 741.1,541.0 741.6,542.7 742.1,544.7 742.6,539.2 743.1,545.8 743.6,544.2 744.1,539.9 744.6,540.5 745.1,541.5 745.6,537.8 746.1,544.2 746.6,544.0 747.1,541.9 747.6,540.4 748.1,541.7 748.6,535.3 749.1,542.4 749.6,539.0 750.1,542.4 750.6,539.9 751.1,542.0 751.6,541.8 752.1,536.3 752.6,541.7 753.1,536.1 753.6,542.7 754.1,542.0 754.6,537.7 755.1,548.0 755.6,545.3 756.1,540.7 756.6,539.5 757.1,539.2 757.6,541.6 758.1,544.6 758.6,538.5 759.1,539.5 759.6,543.8 760.1,540.2 760.6,535.9 761.1,540.4 761.6,543.9 762.1,541.9 762.6,542.9 763.1,539.8 763.6,538.3 764.1,543.2 764.6,542.5 765.1,538.0 765.6,538.7 766.1,537.1 766.6,544.6 767.1,543.3 767.6,538.0 768.1,543.3 768.6,539.9 769.1,540.9 769.6,542.7 770.1,536.8 770.6,540.8 771.1,542.1 771.6,541.2 772.1,540.1 772.6,544.9 773.1,543.0 773.6,544.1 774.1,546.3 774.6,538.1 775.1,536.9 775.6,537.6 776.1,545.4 776.6,539.7 777.1,538.9 777.6,542.2 778.1,538.6 778.6,543.6 779.1,543.5 779.6,542.9 780.1,542.6 780.6,543.4 781.1,538.2 781.6,543.5 782.1,541.9 782.6,542.4 783.1,535.0 783.6,543.0 784.1,539.5 784.6,536.0 785.1,543.8 785.6,542.9 786.1,541.6 786.6,544.1 787.1,537.6 787.6,541.9 788.1,538.0 788.6,539.3 789.1,540.7 789.6,538.3 790.1,541.5 790.6,538.0 791.1,544.0 791.6,542.6 792.1,534.0 792.6,546.0 793.1,539.5 793.6,541.7 794.1,542.1 794.6,542.5 795.1,537.5 795.6,544.5 796.1,538.6 796.6,539.5 797.1,541.8 797.6,540.9 798.1,538.9 798.6,542.2 799.1,544.5 799.6,540.0 800.1,542.8 800.6,541.7 801.1,540.5 801.6,538.9 802.1,536.2 802.6,538.8 803.1,540.4 803.6,538.6 804.1,540.0 804.6,544.9 805.1,542.2 805.6,543.7 806.1,539.0 806.6,537.5 807.1,539.8 807.6,543.2 808.1,538.7 808.6,543.0 809.1,540.0 809.6,543.6 810.1,544.1 810.6,544.1 811.1,540.6 811.6,542.3 812.1,539.6 812.6,547.7 813.1,539.5 813.6,542.2 814.1,537.6 814.6,538.2 815.1,541.2 815.6,540.4 816.1,540.1 816.6,539.5 817.1,541.3 817.6,538.0 818.1,541.9 818.6,545.3 819.1,540.1 819.6,540.9 820.1,538.6 820.6,539.2 821.1,540.3 821.6,540.4 822.1,540.3 822.6,542.3 823.1,543.6 823.6,542.6 824.1,540.9 824.6,546.1 825.1,541.7 825.6,543.0 826.1,540.9 826.6,542.6 827.1,540.5 827.6,541.2 828.1,537.5 828.6,541.5 829.1,541.2 829.6,540.6 830.1,545.0 830.6,543.2 831.1,533.1 831.6,539.4 832.1,540.2 832.6,538.0 833.1,541.1 833.6,541.2 834.1,541.4 834.6,544.9 835.1,538.4 835.6,541.1 836.1,540.9 836.6,541.4 837.1,542.1 837.6,546.0 838.1,540.3 838.6,535.4 839.1,538.3 839.6,541.3 840.1,542.8 840.6,540.5 841.1,539.6 841.6,540.8 842.1,538.5 842.6,542.7 843.1,537.8 843.6,539.9 844.1,541.6 844.6,540.9 845.1,539.3 845.6,538.3 846.1,539.9 846.6,538.7 847.1,534.3 847.6,543.8 848.1,544.6 848.6,539.6 849.1,542.1 849.6,539.5 850.1,543.5 850.6,539.4 851.1,536.5 851.6,537.0 852.1,542.1 852.6,540.2 853.1,537.4 853.6,535.1 854.1,541.6 854.6,541.3 855.1,536.6 855.6,539.9 856.1,544.1 856.6,536.2 857.1,542.4 857.6,539.9 858.1,535.9 858.6,539.4 859.1,533.8 859.6,540.4 860.1,533.4 860.6,536.1 861.1,533.2 861.6,537.4 862.1,537.4 862.6,536.3 863.1,533.2 863.6,539.0 864.1,535.1 864.6,529.7 865.1,532.0 865.6,531.5 866.1,533.8 866.6,529.9 867.1,537.2 867.6,534.1 868.0,532.3 869.0,525.9 870.0,526.9 871.0,527.4 872.0,524.6 873.0,520.3 874.0,516.4 875.0,518.0 876.0,510.7 877.0,508.1 878.0,506.2 879.0,501.8 880.0,496.9 881.0,492.7 882.0,487.4 883.0,483.4 884.0,471.5 885.0,454.9 886.0,442.9 887.0,428.3 888.0,411.8 889.0,393.9 890.0,376.6 891.0,362.0 892.0,344.8 893.0,328.2 894.0,310.9 895.0,295.8 896.0,276.5 897.0,259.7 898.0,238.6 899.0,223.1 900.0,194.4 901.0,176.1 902.0,157.2 903.0,148.3 904.0,138.5 905.0,126.1 906.0,120.8 907.0,119.0 908.0,117.6 909.0,110.9 910.0,113.4 911.0,110.5 912.0,110.7 913.0,117.6 914.0,123.9 915.0,130.4 916.0,136.1 917.0,144.6 918.0,156.1 919.0,164.7 920.0,176.8 921.0,188.8 922.0,198.1 923.0,212.1 924.0,225.9 925.0,239.6 926.0,247.2 927.0,259.8 928.0,269.2 929.0,276.8 930.0,283.8 931.0,296.4 932.0,301.1 933.0,309.7 934.0,319.8 935.0,327.2 936.0,333.4 937.0,338.3 938.0,350.0 939.0,355.8 940.0,364.2 941.0,371.6 942.0,373.5 943.0,376.3 944.0,382.2 945.0,384.0 946.0,390.6 947.0,394.7 948.0,397.0 949.0,399.2 950.0,402.7 951.0,403.2 952.0,410.3 953.0,409.1 954.0,408.9 955.0,415.4 956.0,413.7 957.0,416.3 958.0,417.4 959.0,418.3 960.0,420.8 961.0,419.5 962.0,421.1 963.0,421.8 964.0,424.2 965.0,426.4 966.0,425.7 967.0,428.9 968.0,429.4 969.0,427.2 970.0,429.3 971.0,431.1 972.0,432.2 973.0,436.3 974.0,437.6 975.0,441.7 976.0,443.8 977.0,446.0 978.0,447.2 979.0,451.9 980.0,452.7 981.0,456.3 982.0,460.4 983.0,462.8 984.0,463.9 985.0,464.6 986.0,467.6 987.0,468.5 988.0,472.3 989.0,473.5 990.0,476.8 991.0,480.1 992.0,480.9 993.0,484.5 994.0,487.0 995.0,488.4 996.0,490.0 997.0,491.4 998.0,492.8 999.0,494.9 1000.0,495.7 1001.0,500.0 1002.0,499.7 1003.0,498.6 1004.0,502.0 1005.0,503.8 1006.0,504.5 1007.0,505.8 1008.0,506.5 1009.0,505.9 1010.0,509.1 1011.0,509.3 1012.0,508.5 1013.0,510.1 1014.0,510.9 1015.0,512.1 1016.0,512.0 1017.0,514.1 1018.0,513.5 1019.0,514.9 1020.0,515.8 1021.0,516.7 1022.0,516.1 1023.0,516.9 1024.0,518.1 1025.0,517.9 1026.0,519.1 1027.0,517.9 1028.0,518.2 1029.0,518.8 1030.0,519.8 1031.0,520.0 1032.0,521.7 1033.0,521.4 1034.0,521.7 1035.0,522.0 1036.0,521.7 1037.0,522.7 1038.0,523.1 1039.0,522.0 1040.0,523.3 1041.0,523.8 1042.0,525.0 1043.0,524.8 1044.0,524.3 1045.0,524.1 1046.0,525.9 1047.0,524.8 1048.0,524.8 1049.0,525.7 1050.0,525.5 1051.0,523.6 1052.0,526.6 1053.0,527.5 1054.0,526.8 1055.0,527.4 1056.0,527.1 1057.0,526.8 1058.0,526.9 1059.0,527.5 1060.0,526.9 1061.0,527.8 1062.0,527.5 1063.0,528.2 1064.0,528.4 1065.0,529.2 1066.0,529.0 1067.0,529.6 1068.0,529.6 1069.0,529.5 1070.0,528.9 1071.0,530.2 1072.0,529.7 1073.0,531.3 1074.0,530.8 1075.0,529.8 1076.0,530.7 1077.0,532.5 1078.0,531.3 1079.0,531.7 1080.0,532.6 1081.0,533.2 1082.0,533.6 1083.0,533.0 1084.0,531.8 1085.0,532.0 1086.0,532.2 1087.0,532.0 1088.0,534.6 1089.0,533.3 1090.0,533.0 1091.0,533.9 1092.0,534.0 1093.0,535.1 1094.0,533.8 1095.0,534.1 1096.0,532.1 1097.0,534.1 1098.0,534.3 1099.0,534.6 1100.0,535.2 1101.0,534.6 1102.0,534.1 1103.0,534.4 1104.0,535.7 1105.0,536.1 1106.0,534.4 1107.0,534.9 1108.0,534.9 1109.0,535.8 1110.0,533.9 1111.0,534.7 1112.0,535.5 1113.0,534.9 1114.0,536.2 1115.0,535.6 1116.0,537.2 1117.0,535.8 1118.0,533.7 1119.0,535.2 1120.0,534.4 1121.0,535.4 1122.0,535.7 1123.0,535.8 1124.0,536.3 1125.0,534.7 1126.0,536.7 1127.0,536.1 1128.0,533.6 1129.0,535.9 1130.0,536.7 1131.0,534.4 1132.0,536.1 1133.0,536.7 1134.0,537.5 1135.0,536.8 1136.0,537.1 1137.0,536.7 1138.0,536.5 1139.0,536.6 1140.0,537.7 1141.0,536.5 1142.0,536.6 1143.0,538.3 1144.0,536.8 1145.0,537.2 1146.0,536.8 1147.0,538.1 1148.0,537.5 1149.0,537.5 1150.0,538.4 1151.0,536.9 1152.0,537.7 1153.0,537.1 1154.0,538.4 1155.0,538.8 1156.0,538.6 1157.0,539.6 1158.0,538.4 1159.0,537.4 1160.0,536.5 1161.0,536.8 1162.0,536.7 1163.0,536.8 1164.0,536.0 1165.0,537.8 1166.0,537.2 1167.0,537.5 1168.0,540.4 1169.0,538.0 1170.0,538.2 1171.0,537.9 1172.0,538.8 1173.0,539.0 1174.0,538.9 1175.0,537.8 1176.0,538.0 1177.0,537.2 1178.0,539.7 1179.0,537.6 1180.0,536.9 1181.0,539.5 1182.0,538.7 1183.0,540.3 1184.0,541.4 1185.0,540.1 1186.0,538.8 1187.0,538.7 1188.0,539.3 1189.0,538.3 1190.0,538.6 1191.0,537.2 1192.0,540.4 1193.0,539.9 1194.0,539.7 1195.0,539.8 1196.0,539.6 1197.0,536.8 1198.0,539.6 1199.0,538.6 1200.0,540.7 1201.0,540.0 1202.0,538.4 1203.0,538.3 1204.0,541.0 1205.0,537.2 1206.0,539.0 1207.0,540.2 1208.0,539.0 1209.0,540.2 1210.0,541.1 1211.0,539.3 1212.0,538.7 1213.0,538.4 1214.0,541.4 1215.0,540.7 1216.0,539.9 1217.0,538.5 1218.0,538.3 1219.0,540.2 1220.0,542.8 1221.0,539.2 1222.0,540.4 1223.0,539.4 1224.0,538.7 1225.0,539.2 1226.0,541.1 1227.0,541.4 1228.0,541.7 1229.0,539.1 1230.0,538.7 1231.0,541.3 1232.0,540.7 1233.0,541.2 1234.0,540.3 1235.0,541.1 1235.5,541.1 1236.0,538.6 1236.5,539.0 1237.0,540.1 1237.5,538.8 1238.0,540.9 1238.5,539.6 1239.0,541.3 1239.5,541.1 1240.0,539.0 1240.5,541.6 1241.0,540.7 1241.5,541.6 1242.0,541.7 1242.5,540.2 1243.0,540.1 1243.5,542.1 1244.0,537.6 1244.5,538.4 1245.0,541.4 1245.5,539.3 1246.0,540.1 1246.5,541.1 1247.0,541.9 1247.5,540.3 1248.0,540.5 1248.5,537.2 1249.0,540.1 1249.5,541.6 1250.0,541.2 1250.5,540.3 1251.0,539.1 1251.5,543.7 1252.0,540.0 1252.5,538.7 1253.0,542.2 1253.5,538.5 1254.0,541.0 1254.5,540.4 1255.0,541.0 1255.5,539.9 1256.0,539.7 1256.5,539.7 1257.0,536.8 1257.5,543.5 1258.0,541.0 1258.5,542.0 1259.0,540.6 1259.5,541.3 1260.0,540.7 1260.5,540.4 1261.0,541.1 1261.5,539.2 1262.0,542.3 1262.5,541.0 1263.0,540.3 1263.5,538.6 1264.0,542.1 1264.5,542.0 1265.0,539.7 1265.5,540.3 1266.0,542.2 1266.5,538.9 1267.0,540.0 1267.5,540.8 1268.0,541.4 1268.5,540.2 1269.0,540.9 1269.5,539.9 1270.0,539.9 1270.5,541.8 1271.0,542.4 1271.5,538.3 1272.0,541.1 1272.5,538.1 1273.0,540.2 1273.5,543.9 1274.0,540.0 1274.5,541.6 1275.0,543.4 1275.5,540.4 1276.0,541.9 1276.5,540.7 1277.0,538.9 1277.5,539.4 1278.0,540.4 1278.5,540.3 1279.0,540.3 1279.5,541.4 1280.0,541.8 1280.5,541.1 1281.0,540.3 1281.5,541.6 1282.0,540.9 1282.5,540.6 1283.0,541.8 1283.5,539.1 1284.0,538.8 1284.5,540.3 1285.0,541.9 1285.5,546.6 1286.0,544.1 1286.5,539.0 1287.0,540.3 1287.5,541.4 1288.0,542.7 1288.5,540.8 1289.0,539.3 1289.5,540.2 1290.0,542.1 1290.5,536.3 1291.0,539.9 1291.5,542.4 1292.0,540.1 1292.5,540.0 1293.0,539.6 1293.5,540.1 1294.0,544.7 1294.5,540.1 1295.0,541.8 1295.5,540.4 1296.0,540.7 1296.5,539.6 1297.0,540.3 1297.5,541.1 1298.0,536.8 1298.5,541.1 1299.0,541.2 1299.5,540.0 1300.0,539.9 1300.5,537.5 1301.0,542.8 1301.5,541.5 1302.0,537.1 1302.5,539.9 1303.0,540.2 1303.5,542.8 1304.0,542.8 1304.5,541.9 1305.0,540.3 1305.5,539.5 1306.0,539.3 1306.5,543.5 1307.0,540.8 1307.5,540.6 1308.0,541.3 1308.5,541.3 1309.0,542.3 1309.5,542.0 1310.0,544.3 1310.5,538.7 1311.0,540.4 1311.5,538.4 1312.0,542.0 1312.5,543.4 1313.0,537.9 1313.5,544.1 1314.0,542.6 1314.5,539.5 1315.0,538.5 1315.5,541.8 1316.0,541.0 1316.5,541.1 1317.0,539.9 1317.5,542.1 1318.0,539.7 1318.5,539.3 1319.0,540.9 1319.5,540.5 1320.0,537.0 1320.5,540.2 1321.0,541.4 1321.5,538.9 1322.0,538.7 1322.5,541.8 1323.0,542.3 1323.5,538.3 1324.0,538.7 1324.5,536.1 1325.0,538.0 1325.5,542.5 1326.0,543.3 1326.5,539.0 1327.0,537.3 1327.5,540.4 1328.0,539.5 1328.5,541.9 1329.0,544.4 1329.5,540.8 1330.0,540.0 1330.5,539.6 1331.0,540.8 1331.5,539.7 1332.0,538.6 1332.5,539.9 1333.0,541.5 1333.5,537.8 1334.0,542.6 1334.5,540.0 1335.0,537.5 1335.5,531.7 1336.0,538.0 1336.5,541.4 1337.0,543.6 1337.5,541.5 1338.0,540.7 1338.5,540.4 1339.0,542.4 1339.5,541.5 1340.0,540.3 1340.5,540.5 1341.0,538.4 1341.5,539.6 1342.0,539.6 1342.5,541.5 1343.0,540.5 1343.5,544.0 1344.0,541.3 1344.5,546.7 1345.0,540.4 1345.5,538.5 1346.0,540.4 1346.5,538.0 1347.0,543.2 1347.5,540.8 1348.0,541.6 1348.5,541.2 1349.0,538.3 1349.5,543.1 1350.0,534.3 1350.5,535.4 1351.0,539.6 1351.5,541.3 1352.0,540.2 1352.5,541.3 1353.0,538.0 1353.5,542.6 1354.0,542.4 1354.5,540.6 1355.0,545.1 1355.5,538.0 1356.0,541.2 1356.5,539.3 1357.0,540.3 1357.5,543.8 1358.0,540.6 1358.5,539.9 1359.0,542.8 1359.5,542.5 1360.0,542.6 1360.5,539.2 1361.0,543.0 1361.5,544.3 1362.0,540.8 1362.5,540.4 1363.0,541.8 1363.5,537.8 1364.0,537.7 1364.5,543.0 1365.0,537.4 1365.5,539.8 1366.0,539.4 1366.5,539.2 1367.0,543.3 1367.5,543.1 1368.0,539.8 1368.5,542.0 1369.0,535.5 1369.5,541.5 1370.0,538.9 1370.5,542.5 1371.0,536.6 1371.5,537.1 1372.0,543.5 1372.5,540.0 1373.0,540.5 1373.5,537.7 1374.0,545.3 1374.5,541.3 1375.0,537.0 1375.5,541.4 1376.0,542.0 1376.5,543.6 1377.0,540.1 1377.5,541.3 1378.0,543.7 1378.5,540.6 1379.0,542.3 1379.5,540.3 1380.0,539.4 1380.5,538.7 1381.0,540.2 1381.5,542.9 1382.0,541.3 1382.5,541.6 1383.0,538.8 1383.5,542.3 1384.0,537.8 1384.5,540.9 1385.0,539.5 1385.5,541.8 1386.0,535.6 1386.5,542.1 1387.0,537.5 1387.5,540.0 1388.0,539.3 1388.5,539.7 1389.0,542.5 1389.5,538.0 1390.0,544.1 1390.5,540.7 1391.0,539.2 1391.5,538.7 1392.0,542.2 1392.5,541.9 1393.0,541.4 1393.5,543.0 1394.0,541.4 1394.5,542.8 1395.0,539.9 1395.5,541.3 1396.0,542.7 1396.5,542.5 1397.0,540.6 1397.5,542.7 1398.0,543.9 1398.5,543.3 1399.0,540.5 1399.5,544.8 1400.0,540.8 1400.5,539.2 1401.0,542.3 1401.5,541.6 1402.0,544.2 1402.5,543.1 1403.0,542.3 1403.5,540.3 1404.0,541.9 1404.5,543.5 1405.0,542.2 1405.5,543.7 1406.0,537.2 1406.5,542.4 1407.0,533.9 1407.5,544.5 1408.0,543.2 1408.5,537.8 1409.0,541.6 1409.5,536.2 1410.0,539.1 1410.5,537.8 1411.0,548.0 1411.5,540.5 1412.0,541.7 1412.5,537.3 1413.0,542.0 1413.5,540.9 1414.0,542.8 1414.5,544.8 1415.0,539.6 1415.5,541.8 1416.0,540.2 1416.5,543.3 1417.0,541.2 1417.5,543.0 1418.0,542.3 1418.5,540.7 1419.0,544.3 1419.5,539.8 1420.0,543.8 1420.5,542.1 1421.0,538.0 1421.5,542.8 1422.0,545.3 1422.5,538.2 1423.0,541.5 1423.5,543.6 1424.0,543.9 1424.5,539.8 1425.0,543.9 1425.5,545.2 1426.0,539.6 1426.5,540.6 1427.0,539.7 1427.5,542.5 1428.0,540.2 1428.5,543.5 1429.0,542.0 1429.5,540.7 1430.0,540.5 1430.5,538.4 1431.0,539.1 1431.5,543.2 1432.0,542.3 1432.5,539.2 1433.0,537.7 1433.5,539.6 1434.0,541.8 1434.5,540.2 1435.0,537.9 1435.5,537.4 1436.0,542.1 1436.5,543.1 1437.0,540.6 1437.5,542.2 1438.0,540.7 1438.5,542.9 1439.0,539.9 1439.5,539.4 1440.0,537.0 1440.5,537.5 1441.0,540.1 1441.5,542.9 1442.0,538.5 1442.5,542.3 1443.0,544.3 1443.5,541.5 1444.0,544.2 1444.5,536.0 1445.0,538.1 1445.5,533.4 1446.0,542.0 1446.5,541.3 1447.0,540.4 1447.5,542.0 1448.0,540.9 1448.5,539.9 1449.0,542.8 1449.5,541.1 1450.0,537.7 1450.5,540.6 1451.0,545.6 1451.5,543.4 1452.0,542.8 1452.5,542.2 1453.0,540.5 1453.5,543.3 1454.0,536.9 1454.5,541.5 1455.0,539.7 1455.5,543.3 1456.0,546.4 1456.5,539.7 1457.0,538.8 1457.5,538.3 1458.0,541.2 1458.5,540.4 1459.0,543.2 1459.5,545.2 1460.0,540.7 1460.5,539.6 1461.0,539.7 1461.5,538.6 1462.0,538.3 1462.5,538.7 1463.0,538.8 1463.5,540.2 1464.0,542.4 1464.5,546.3 1465.0,540.3 1465.5,537.1 1466.0,539.5 1466.5,535.4 1467.0,538.8 1467.5,546.2 1468.0,537.6 1468.5,543.0 1469.0,540.7 1469.5,542.5 1470.0,540.5 1470.5,535.8 1471.0,537.0 1471.5,544.1 1472.0,539.1 1472.5,542.2 1473.0,536.6 1473.5,535.7 1474.0,541.2 1474.5,537.2 1475.0,536.9 1475.5,537.7 1476.0,536.6 1476.5,540.1 1477.0,536.3 1477.5,539.8 1478.0,539.5 1478.5,539.7 1479.0,545.8 1479.5,539.7 1480.0,536.7 1480.5,543.6 1481.0,541.3 1481.5,548.0 1482.0,539.0 1482.5,539.8 1483.0,537.5 1483.5,535.7 1484.0,545.0 1484.5,544.1 1485.0,538.6 1485.5,541.7 1486.0,538.3 1486.5,545.3 1487.0,541.1 1487.5,543.6 1488.0,545.0 1488.5,540.0 1489.0,543.8 1489.5,542.3 1490.0,542.1 1490.5,548.0 1491.0,538.6 1491.5,539.7 1492.0,540.1 1492.5,541.7 1493.0,536.4 1493.5,539.7 1494.0,544.0 1494.5,539.5 1495.0,537.1 1495.5,541.0 1496.0,540.9 1496.5,539.2 1497.0,538.3 1497.5,539.2 1498.0,541.7 1498.5,538.6 1499.0,541.3 1499.5,541.5 1500.0,532.0 1500.5,542.9 1501.0,543.3 1501.5,538.9 1502.0,543.7 1502.5,537.0 1503.0,540.4 1503.5,537.4 1504.0,540.7 1504.5,544.0 1505.0,548.0 1505.5,543.7 1506.0,537.0 1506.5,542.3 1507.0,537.9 1507.5,537.2 1508.0,546.3 1508.5,542.2 1509.0,541.3 1509.5,536.0 1510.0,535.5 1510.5,543.2 1511.0,538.6 1511.5,539.7 1512.0,544.5 1512.5,537.1 1513.0,535.0 1513.5,544.4 1514.0,538.6 1514.5,543.2 1515.0,537.2 1515.5,532.6 1516.0,542.0 1516.5,541.4 1517.0,535.3 1517.5,541.5 1518.0,537.1 1518.5,546.9 1519.0,546.0 1519.5,537.1 1520.0,540.0 1520.5,542.0 1521.0,544.8 1521.5,540.2 1522.0,545.7 1522.5,541.6 1523.0,538.7 1523.5,542.1 1524.0,546.7 1524.5,547.1 1525.0,542.8 1525.5,548.0 1526.0,538.3 1526.5,543.7 1527.0,543.5 1527.5,542.5 1528.0,544.0 1528.5,536.4 1529.0,543.6 1529.5,545.6 1530.0,537.3 1530.5,543.8 1531.0,535.7 1531.5,538.5 1532.0,545.2 1532.5,540.8 1533.0,544.9 1533.5,545.3 1534.0,537.0 1534.5,542.5 1535.0,541.8 1535.5,542.9 1536.0,540.6 1536.5,542.2 1537.0,540.8 1537.5,540.8 1538.0,530.3 1538.5,542.8 1539.0,541.3 1539.5,540.4 1540.0,544.4 1540.5,539.0 1541.0,541.3 1541.5,543.0 1542.0,543.8 1542.5,541.2 1543.0,540.0 1543.5,539.3 1544.0,538.1 1544.5,542.1 1545.0,535.7 1545.5,540.4 1546.0,536.6 1546.5,542.0 1547.0,536.4 1547.5,540.5 1548.0,543.5 1548.5,542.3 1549.0,539.8 1549.5,547.1 1550.0,539.8 1550.5,548.0 1551.0,540.0 1551.5,544.0 1552.0,545.5 1552.5,543.0 1553.0,535.7 1553.5,534.0 1554.0,543.8 1554.5,535.0 1555.0,539.5 1555.5,533.8 1556.0,540.3 1556.5,537.7 1557.0,544.7 1557.5,535.6 1558.0,537.1 1558.5,535.8 1559.0,534.0 1559.5,541.8 1560.0,538.6 1560.5,548.0 1561.0,548.0 1561.5,545.4 1562.0,537.1 1562.5,538.0 1563.0,538.7 1563.5,539.6 1564.0,531.9 1564.5,536.7 1565.0,542.4 1565.5,533.1 1566.0,533.1 1566.5,536.6 1567.0,548.0 1567.5,544.1 1568.0,538.3 1568.5,541.6 1569.0,548.0 1569.5,539.7 1570.0,543.3 1570.5,539.0 1571.0,539.0 1571.5,533.8 1572.0,544.1 1572.5,535.4 1573.0,544.4 1573.5,535.5 1574.0,537.9 1574.5,538.2 1575.0,539.5 1575.5,543.3 1576.0,535.5 1576.5,537.7 1577.0,534.5 1577.5,535.7 1578.0,538.0 1578.5,545.5 1579.0,548.0 1579.5,539.6 1580.0,529.0 1580.5,541.1 1581.0,545.0 1581.5,548.0 1582.0,534.0 1582.5,545.6 1583.0,543.8 1583.5,539.3 1584.0,537.3 1584.5,530.9 1585.0,534.2 1585.5,537.0 1586.0,540.8 1586.5,548.0 1587.0,542.0 1587.5,535.6 1588.0,548.0 1588.5,541.1 1589.0,532.4 1589.5,535.7 1590.0,541.7 1590.5,541.0 1591.0,525.0 1591.5,524.0 1592.0,525.4 1592.5,527.3 1593.0,543.5 1593.5,544.0 1594.0,534.6 1594.5,538.7 1595.0,545.4 1595.5,548.0 1596.0,530.4 1596.5,529.5 1597.0,541.4 1597.5,537.5 1598.0,539.2 1598.5,533.9 1599.0,530.2 1599.5,537.4 1600.0,540.9 1600.5,538.2 1601.0,539.1 1601.5,535.7 1602.0,542.8 1602.5,544.1 1603.0,528.3 1603.5,535.4 1604.0,534.6 1604.5,526.0 1605.0,539.9 1605.5,541.3 1606.0,537.6 1606.5,546.5 1607.0,546.2 1607.5,546.9 1608.0,536.1 1608.5,548.0 1609.0,539.8 1609.5,541.1 1610.0,530.2 1610.5,542.7 1611.0,533.9 1611.5,534.6 1612.0,535.1 1612.5,530.1 1613.0,548.0 1613.5,537.2 1614.0,542.6 1614.5,542.6 1615.0,530.9 1615.5,544.1 1616.0,544.9 1616.5,531.4 1617.0,548.0 1617.5,530.5 1618.0,547.8 1618.5,526.6 1619.0,545.6 1619.5,535.8 1620.0,537.7 1620.5,539.1 1621.0,530.2 1621.5,540.0 1622.0,531.5 1622.5,535.1 1623.0,548.0 1623.5,548.0 1624.0,507.5 1624.5,535.6 1625.0,524.6 1625.5,540.1 1626.0,544.4 1626.5,547.1 1627.0,523.6 1627.5,532.5 1628.0,548.0 1628.5,527.3 1629.0,538.5 1629.5,524.1 1630.0,539.4 1630.5,548.0 1631.0,526.1 1631.5,525.3 1632.0,524.6 1632.5,533.8 1633.0,548.0 1633.5,548.0 1634.0,543.4 1634.5,539.5 1635.0,544.6 1635.5,536.3 1636.0,548.0 1636.5,546.3 1637.0,548.0 1637.5,543.4 1638.0,548.0 1638.5,524.2 1639.0,548.0 1639.5,547.7 1640.0,537.8 1640.5,548.0 1641.0,533.3 1641.5,533.5 1642.0,532.6 1642.5,548.0 1643.0,548.0 1643.5,545.3 1644.0,546.4 1644.5,542.1 1645.0,539.6 1645.5,542.3 1646.0,546.3 1646.5,531.2 1647.0,530.2 1647.5,533.7 1648.0,536.0 1648.5,537.2 1649.0,525.9 1649.5,546.8 1650.0,548.0 1650.5,543.1 1651.0,541.8 1651.5,544.5 1652.0,544.0 1652.5,547.4 1653.0,538.3 1653.5,548.0 1654.0,548.0 1654.5,542.2 1655.0,536.2 1655.5,543.0 1656.0,548.0 1656.5,541.5 1657.0,546.9 1657.5,536.2 1658.0,545.9 1658.5,541.3 1659.0,531.1 1659.5,539.4 1660.0,541.6 1660.5,543.6 1661.0,548.0 1661.5,534.7 1662.0,548.0 1662.5,547.6 1663.0,548.0 1663.5,535.4 1664.0,515.6 1664.5,548.0 1665.0,533.0 1665.5,541.0 1666.0,517.5 1666.5,548.0 1667.0,548.0" fill="none" stroke="#ff7f0e" stroke-width="1.5" stroke-linejoin="round"/><polyline points="696.6,538.8 697.1,533.9 697.6,537.8 698.1,544.2 698.6,542.7 699.1,538.1 699.6,540.9 700.1,537.0 700.6,547.0 701.1,534.1 701.6,534.9 702.1,545.4 702.6,541.7 703.1,542.7 703.6,542.0 704.1,537.7 704.6,542.3 705.1,543.6 705.6,538.4 706.1,536.4 706.6,542.0 707.1,539.7 707.6,545.1 708.1,537.4 708.6,524.5 709.1,538.7 709.6,540.7 710.1,547.0 710.6,541.5 711.1,547.0 711.6,538.1 712.1,534.9 712.6,530.6 713.1,540.0 713.6,539.0 714.1,542.7 714.6,539.8 715.1,539.8 715.6,540.6 716.1,548.0 716.6,538.6 717.1,539.2 717.6,543.0 718.1,539.3 718.6,538.2 719.1,547.4 719.6,537.9 720.1,542.3 720.6,544.4 721.1,540.4 721.6,543.3 722.1,542.4 722.6,544.1 723.1,543.0 723.6,544.7 724.1,542.8 724.6,544.3 725.1,545.1 725.6,537.7 726.1,540.8 726.6,539.6 727.1,535.6 727.6,538.8 728.1,540.8 728.6,544.2 729.1,538.5 729.6,539.4 730.1,537.7 730.6,541.2 731.1,541.9 731.6,547.1 732.1,539.2 732.6,545.5 733.1,542.4 733.6,537.8 734.1,540.7 734.6,541.2 735.1,539.6 735.6,546.2 736.1,540.8 736.6,537.2 737.1,533.6 737.6,545.3 738.1,538.1 738.6,539.6 739.1,543.8 739.6,548.0 740.1,541.4 740.6,536.9 741.1,539.5 741.6,543.7 742.1,540.6 742.6,537.9 743.1,541.2 743.6,542.3 744.1,539.6 744.6,548.0 745.1,539.7 745.6,544.9 746.1,541.2 746.6,539.9 747.1,541.3 747.6,543.1 748.1,542.0 748.6,538.6 749.1,544.8 749.6,543.5 750.1,540.0 750.6,538.7 751.1,541.0 751.6,542.4 752.1,538.9 752.6,542.0 753.1,535.1 753.6,537.2 754.1,535.6 754.6,543.6 755.1,542.2 755.6,541.6 756.1,544.4 756.6,544.3 757.1,538.2 757.6,543.7 758.1,542.8 758.6,536.7 759.1,540.0 759.6,539.5 760.1,540.9 760.6,542.6 761.1,541.9 761.6,540.1 762.1,542.5 762.6,540.7 763.1,542.1 763.6,541.1 764.1,536.5 764.6,539.1 765.1,544.4 765.6,541.4 766.1,535.8 766.6,535.9 767.1,544.0 767.6,539.6 768.1,540.8 768.6,547.7 769.1,540.0 769.6,535.4 770.1,542.8 770.6,541.6 771.1,538.2 771.6,542.0 772.1,542.0 772.6,540.0 773.1,544.7 773.6,539.5 774.1,544.4 774.6,540.7 775.1,538.6 775.6,536.4 776.1,542.9 776.6,540.2 777.1,539.4 777.6,545.6 778.1,541.0 778.6,540.2 779.1,539.3 779.6,535.5 780.1,540.5 780.6,540.9 781.1,541.0 781.6,540.8 782.1,539.5 782.6,536.6 783.1,543.5 783.6,540.7 784.1,547.1 784.6,545.2 785.1,540.4 785.6,546.3 786.1,539.9 786.6,537.4 787.1,543.0 787.6,542.7 788.1,540.8 788.6,542.2 789.1,541.0 789.6,542.6 790.1,538.6 790.6,539.2 791.1,541.0 791.6,546.6 792.1,542.6 792.6,540.7 793.1,539.0 793.6,544.7 794.1,539.3 794.6,538.6 795.1,542.4 795.6,538.9 796.1,541.3 796.6,543.6 797.1,541.2 797.6,537.5 798.1,539.8 798.6,540.8 799.1,538.7 799.6,539.0 800.1,540.3 800.6,545.5 801.1,547.2 801.6,544.9 802.1,536.7 802.6,537.2 803.1,548.0 803.6,538.9 804.1,544.5 804.6,540.4 805.1,538.6 805.6,541.2 806.1,538.9 806.6,538.8 807.1,545.2 807.6,541.2 808.1,539.8 808.6,542.3 809.1,544.4 809.6,537.4 810.1,540.4 810.6,542.5 811.1,543.3 811.6,541.2 812.1,535.2 812.6,542.3 813.1,539.8 813.6,540.3 814.1,541.6 814.6,541.0 815.1,540.9 815.6,543.3 816.1,544.5 816.6,539.3 817.1,537.5 817.6,539.6 818.1,543.0 818.6,540.9 819.1,542.2 819.6,544.3 820.1,546.7 820.6,542.3 821.1,539.6 821.6,543.7 822.1,538.2 822.6,540.8 823.1,534.8 823.6,538.5 824.1,540.4 824.6,540.6 825.1,540.1 825.6,540.1 826.1,539.1 826.6,536.4 827.1,539.3 827.6,537.0 828.1,538.5 828.6,541.6 829.1,539.6 829.6,539.2 830.1,538.7 830.6,541.7 831.1,538.2 831.6,542.2 832.1,541.2 832.6,539.2 833.1,540.4 833.6,542.8 834.1,543.8 834.6,543.7 835.1,542.5 835.6,535.7 836.1,543.3 836.6,544.2 837.1,535.6 837.6,544.8 838.1,544.1 838.6,539.6 839.1,540.8 839.6,539.4 840.1,537.1 840.6,535.2 841.1,540.2 841.6,539.8 842.1,541.3 842.6,541.8 843.1,541.6 843.6,540.0 844.1,541.6 844.6,539.8 845.1,541.5 845.6,543.0 846.1,541.2 846.6,541.0 847.1,541.5 847.6,541.3 848.1,539.0 848.6,543.3 849.1,535.9 849.6,541.5 850.1,540.4 850.6,537.1 851.1,537.8 851.6,548.0 852.1,539.1 852.6,536.7 853.1,542.0 853.6,540.8 854.1,536.6 854.6,542.7 855.1,535.5 855.6,542.5 856.1,540.9 856.6,540.3 857.1,539.8 857.6,536.8 858.1,537.5 858.6,537.8 859.1,537.6 859.6,541.7 860.1,539.2 860.6,535.0 861.1,540.1 861.6,533.9 862.1,537.3 862.6,538.8 863.1,534.1 863.6,532.1 864.1,538.9 864.6,535.9 865.1,536.1 865.6,534.9 866.1,538.3 866.6,533.8 867.1,528.6 867.6,532.1 868.0,529.5 869.0,527.3 870.0,527.1 871.0,526.7 872.0,525.0 873.0,522.1 874.0,517.8 875.0,516.0 876.0,511.5 877.0,504.2 878.0,504.5 879.0,502.8 880.0,496.7 881.0,492.3 882.0,487.4 883.0,482.7 884.0,469.6 885.0,449.9 886.0,439.1 887.0,425.8 888.0,412.4 889.0,394.1 890.0,375.0 891.0,359.5 892.0,341.9 893.0,324.8 894.0,307.7 895.0,292.0 896.0,274.3 897.0,258.1 898.0,239.2 899.0,214.9 900.0,191.8 901.0,172.0 902.0,156.5 903.0,145.4 904.0,129.6 905.0,124.9 906.0,116.6 907.0,112.1 908.0,112.0 909.0,108.6 910.0,107.0 911.0,109.8 912.0,113.9 913.0,100.9 914.0,122.3 915.0,127.9 916.0,136.4 917.0,144.4 918.0,151.1 919.0,161.4 920.0,175.2 921.0,183.4 922.0,195.4 923.0,209.5 924.0,219.4 925.0,233.4 926.0,244.8 927.0,257.5 928.0,261.7 929.0,274.8 930.0,284.4 931.0,292.8 932.0,301.2 933.0,307.2 934.0,323.6 935.0,325.0 936.0,329.6 937.0,337.4 938.0,348.9 939.0,355.4 940.0,363.5 941.0,368.1 942.0,372.6 943.0,374.9 944.0,380.3 945.0,383.8 946.0,386.8 947.0,392.6 948.0,396.1 949.0,395.9 950.0,402.0 951.0,401.6 952.0,401.8 953.0,407.0 954.0,409.5 955.0,411.4 956.0,413.6 957.0,414.0 958.0,415.6 959.0,417.3 960.0,418.4 961.0,418.4 962.0,420.6 963.0,422.1 964.0,421.1 965.0,424.2 966.0,424.6 967.0,427.2 968.0,428.4 969.0,427.8 970.0,428.3 971.0,433.7 972.0,432.0 973.0,434.1 974.0,437.1 975.0,439.2 976.0,443.6 977.0,444.8 978.0,448.8 979.0,450.6 980.0,453.3 981.0,455.4 982.0,459.2 983.0,460.0 984.0,462.2 985.0,463.8 986.0,467.7 987.0,469.0 988.0,472.4 989.0,473.7 990.0,477.0 991.0,479.6 992.0,481.5 993.0,482.0 994.0,484.1 995.0,487.2 996.0,489.1 997.0,490.4 998.0,495.7 999.0,493.4 1000.0,497.7 1001.0,499.0 1002.0,499.5 1003.0,501.0 1004.0,501.1 1005.0,502.0 1006.0,504.1 1007.0,504.6 1008.0,506.3 1009.0,508.2 1010.0,508.7 1011.0,507.1 1012.0,509.4 1013.0,511.4 1014.0,511.6 1015.0,512.2 1016.0,511.9 1017.0,513.1 1018.0,512.9 1019.0,513.4 1020.0,514.5 1021.0,515.7 1022.0,515.7 1023.0,517.2 1024.0,517.5 1025.0,518.9 1026.0,517.6 1027.0,519.9 1028.0,518.8 1029.0,517.7 1030.0,520.7 1031.0,520.5 1032.0,521.3 1033.0,521.8 1034.0,520.9 1035.0,522.8 1036.0,521.8 1037.0,522.2 1038.0,521.7 1039.0,525.5 1040.0,524.9 1041.0,522.5 1042.0,526.3 1043.0,523.6 1044.0,523.2 1045.0,525.3 1046.0,525.2 1047.0,524.1 1048.0,527.0 1049.0,524.6 1050.0,524.6 1051.0,525.7 1052.0,526.0 1053.0,526.3 1054.0,527.0 1055.0,526.2 1056.0,526.5 1057.0,527.2 1058.0,527.2 1059.0,528.6 1060.0,528.5 1061.0,529.6 1062.0,528.6 1063.0,527.8 1064.0,528.4 1065.0,529.2 1066.0,529.3 1067.0,529.5 1068.0,528.6 1069.0,530.4 1070.0,528.9 1071.0,529.6 1072.0,531.2 1073.0,529.9 1074.0,530.0 1075.0,531.0 1076.0,529.6 1077.0,531.7 1078.0,531.6 1079.0,531.3 1080.0,531.3 1081.0,531.9 1082.0,531.3 1083.0,532.6 1084.0,531.9 1085.0,532.6 1086.0,532.6 1087.0,533.5 1088.0,533.0 1089.0,534.2 1090.0,534.3 1091.0,533.5 1092.0,532.9 1093.0,534.5 1094.0,533.5 1095.0,530.4 1096.0,533.8 1097.0,533.9 1098.0,534.8 1099.0,536.1 1100.0,535.0 1101.0,534.6 1102.0,535.6 1103.0,534.7 1104.0,535.4 1105.0,534.3 1106.0,534.9 1107.0,534.8 1108.0,534.8 1109.0,535.3 1110.0,534.0 1111.0,536.1 1112.0,536.0 1113.0,535.4 1114.0,535.3 1115.0,536.6 1116.0,534.8 1117.0,535.8 1118.0,535.2 1119.0,536.2 1120.0,536.2 1121.0,535.6 1122.0,536.3 1123.0,536.5 1124.0,535.8 1125.0,535.5 1126.0,536.3 1127.0,535.9 1128.0,536.9 1129.0,536.0 1130.0,537.1 1131.0,536.2 1132.0,538.4 1133.0,536.4 1134.0,535.8 1135.0,536.6 1136.0,538.1 1137.0,535.6 1138.0,537.4 1139.0,538.7 1140.0,535.4 1141.0,537.5 1142.0,536.5 1143.0,536.9 1144.0,535.5 1145.0,535.8 1146.0,538.7 1147.0,536.9 1148.0,538.2 1149.0,537.4 1150.0,537.6 1151.0,537.6 1152.0,538.5 1153.0,537.0 1154.0,536.9 1155.0,536.9 1156.0,536.1 1157.0,537.9 1158.0,538.6 1159.0,537.7 1160.0,540.1 1161.0,538.2 1162.0,539.0 1163.0,539.0 1164.0,539.2 1165.0,539.2 1166.0,537.9 1167.0,539.7 1168.0,539.2 1169.0,538.3 1170.0,538.6 1171.0,537.3 1172.0,538.4 1173.0,536.8 1174.0,537.8 1175.0,539.6 1176.0,538.8 1177.0,537.3 1178.0,539.9 1179.0,539.7 1180.0,540.5 1181.0,539.0 1182.0,538.1 1183.0,537.9 1184.0,539.1 1185.0,540.2 1186.0,538.8 1187.0,539.2 1188.0,537.6 1189.0,538.9 1190.0,538.0 1191.0,540.5 1192.0,539.1 1193.0,539.3 1194.0,539.6 1195.0,538.4 1196.0,540.9 1197.0,540.7 1198.0,544.8 1199.0,539.3 1200.0,538.6 1201.0,538.6 1202.0,537.8 1203.0,539.3 1204.0,540.3 1205.0,539.1 1206.0,539.3 1207.0,539.3 1208.0,538.4 1209.0,540.4 1210.0,540.4 1211.0,539.6 1212.0,538.4 1213.0,540.4 1214.0,538.3 1215.0,538.3 1216.0,540.1 1217.0,540.4 1218.0,539.8 1219.0,541.4 1220.0,538.2 1221.0,539.6 1222.0,538.7 1223.0,540.5 1224.0,539.7 1225.0,540.1 1226.0,538.2 1227.0,541.1 1228.0,538.7 1229.0,540.0 1230.0,540.1 1231.0,542.0 1232.0,540.2 1233.0,540.6 1234.0,539.5 1235.0,540.7 1235.5,540.8 1236.0,539.1 1236.5,539.9 1237.0,540.6 1237.5,539.9 1238.0,539.5 1238.5,540.3 1239.0,540.2 1239.5,538.4 1240.0,540.2 1240.5,542.6 1241.0,539.2 1241.5,538.7 1242.0,539.0 1242.5,539.1 1243.0,542.5 1243.5,541.2 1244.0,540.1 1244.5,540.0 1245.0,540.3 1245.5,541.7 1246.0,541.0 1246.5,540.7 1247.0,539.2 1247.5,537.8 1248.0,542.1 1248.5,540.2 1249.0,541.4 1249.5,539.2 1250.0,540.0 1250.5,539.8 1251.0,540.2 1251.5,541.1 1252.0,541.1 1252.5,540.7 1253.0,539.2 1253.5,538.0 1254.0,539.1 1254.5,540.6 1255.0,538.4 1255.5,539.9 1256.0,540.3 1256.5,540.2 1257.0,541.5 1257.5,542.1 1258.0,541.2 1258.5,540.6 1259.0,540.1 1259.5,541.9 1260.0,540.6 1260.5,542.5 1261.0,538.8 1261.5,541.1 1262.0,541.6 1262.5,539.5 1263.0,540.3 1263.5,541.6 1264.0,538.2 1264.5,541.4 1265.0,539.8 1265.5,541.1 1266.0,539.4 1266.5,539.4 1267.0,541.2 1267.5,541.3 1268.0,538.9 1268.5,540.1 1269.0,539.2 1269.5,539.9 1270.0,539.0 1270.5,539.6 1271.0,540.9 1271.5,538.4 1272.0,540.4 1272.5,540.2 1273.0,540.0 1273.5,538.8 1274.0,541.3 1274.5,540.3 1275.0,540.5 1275.5,540.6 1276.0,541.7 1276.5,543.8 1277.0,541.3 1277.5,539.1 1278.0,540.5 1278.5,540.9 1279.0,541.0 1279.5,539.3 1280.0,540.6 1280.5,540.8 1281.0,539.8 1281.5,539.1 1282.0,540.0 1282.5,540.2 1283.0,542.6 1283.5,542.6 1284.0,540.4 1284.5,541.2 1285.0,541.2 1285.5,540.2 1286.0,539.6 1286.5,536.8 1287.0,541.7 1287.5,540.3 1288.0,537.4 1288.5,541.5 1289.0,539.7 1289.5,542.0 1290.0,537.0 1290.5,541.5 1291.0,539.7 1291.5,539.4 1292.0,541.1 1292.5,542.5 1293.0,541.7 1293.5,540.2 1294.0,539.8 1294.5,539.5 1295.0,541.8 1295.5,538.7 1296.0,539.9 1296.5,540.6 1297.0,541.4 1297.5,541.9 1298.0,543.6 1298.5,542.4 1299.0,540.7 1299.5,536.0 1300.0,539.5 1300.5,542.3 1301.0,539.7 1301.5,542.1 1302.0,537.6 1302.5,536.8 1303.0,540.0 1303.5,541.3 1304.0,538.6 1304.5,539.9 1305.0,539.7 1305.5,540.1 1306.0,541.5 1306.5,538.4 1307.0,538.7 1307.5,540.2 1308.0,541.0 1308.5,541.0 1309.0,539.4 1309.5,539.0 1310.0,540.9 1310.5,544.4 1311.0,539.9 1311.5,541.0 1312.0,540.2 1312.5,537.6 1313.0,535.9 1313.5,543.4 1314.0,541.9 1314.5,540.5 1315.0,543.1 1315.5,543.5 1316.0,541.2 1316.5,541.3 1317.0,541.1 1317.5,540.2 1318.0,541.7 1318.5,541.0 1319.0,540.9 1319.5,539.2 1320.0,543.8 1320.5,540.1 1321.0,543.7 1321.5,543.1 1322.0,540.3 1322.5,540.2 1323.0,540.3 1323.5,540.9 1324.0,540.7 1324.5,542.0 1325.0,540.5 1325.5,538.7 1326.0,544.1 1326.5,541.2 1327.0,542.0 1327.5,543.3 1328.0,541.3 1328.5,541.0 1329.0,545.3 1329.5,544.4 1330.0,540.9 1330.5,541.2 1331.0,538.5 1331.5,541.4 1332.0,538.8 1332.5,541.4 1333.0,542.6 1333.5,540.3 1334.0,541.3 1334.5,540.9 1335.0,544.8 1335.5,540.1 1336.0,540.9 1336.5,539.9 1337.0,540.0 1337.5,537.9 1338.0,540.8 1338.5,540.9 1339.0,539.1 1339.5,538.8 1340.0,540.1 1340.5,541.1 1341.0,541.5 1341.5,541.7 1342.0,541.9 1342.5,539.2 1343.0,541.5 1343.5,539.6 1344.0,542.0 1344.5,539.1 1345.0,540.8 1345.5,538.3 1346.0,539.7 1346.5,540.0 1347.0,541.7 1347.5,541.5 1348.0,541.3 1348.5,541.0 1349.0,541.9 1349.5,539.7 1350.0,539.6 1350.5,541.1 1351.0,537.8 1351.5,540.6 1352.0,543.2 1352.5,541.0 1353.0,540.5 1353.5,541.2 1354.0,540.2 1354.5,542.3 1355.0,541.3 1355.5,540.9 1356.0,540.1 1356.5,541.6 1357.0,542.0 1357.5,540.9 1358.0,540.2 1358.5,541.3 1359.0,541.1 1359.5,542.9 1360.0,538.2 1360.5,542.6 1361.0,536.0 1361.5,541.1 1362.0,538.3 1362.5,541.5 1363.0,539.8 1363.5,540.4 1364.0,541.3 1364.5,542.9 1365.0,541.5 1365.5,543.3 1366.0,538.0 1366.5,542.4 1367.0,537.4 1367.5,540.6 1368.0,542.4 1368.5,533.6 1369.0,532.7 1369.5,534.4 1370.0,535.8 1370.5,538.3 1371.0,537.3 1371.5,542.8 1372.0,541.6 1372.5,538.8 1373.0,537.0 1373.5,541.9 1374.0,541.6 1374.5,542.1 1375.0,536.9 1375.5,542.2 1376.0,541.1 1376.5,539.8 1377.0,539.5 1377.5,539.2 1378.0,542.2 1378.5,540.4 1379.0,540.0 1379.5,539.1 1380.0,537.9 1380.5,538.9 1381.0,542.1 1381.5,540.2 1382.0,542.8 1382.5,537.9 1383.0,541.0 1383.5,540.9 1384.0,540.0 1384.5,541.7 1385.0,539.2 1385.5,539.2 1386.0,540.2 1386.5,540.6 1387.0,547.2 1387.5,541.5 1388.0,539.6 1388.5,540.1 1389.0,547.8 1389.5,537.9 1390.0,538.8 1390.5,542.2 1391.0,545.1 1391.5,540.7 1392.0,543.0 1392.5,545.9 1393.0,547.3 1393.5,538.4 1394.0,540.9 1394.5,542.3 1395.0,543.4 1395.5,539.8 1396.0,541.9 1396.5,542.9 1397.0,541.3 1397.5,541.8 1398.0,540.2 1398.5,538.8 1399.0,543.8 1399.5,543.1 1400.0,540.1 1400.5,542.9 1401.0,541.1 1401.5,534.5 1402.0,539.8 1402.5,538.6 1403.0,538.4 1403.5,538.5 1404.0,540.2 1404.5,533.7 1405.0,542.1 1405.5,542.1 1406.0,539.4 1406.5,542.6 1407.0,540.5 1407.5,541.8 1408.0,538.4 1408.5,539.5 1409.0,538.3 1409.5,541.8 1410.0,544.6 1410.5,538.1 1411.0,537.1 1411.5,542.5 1412.0,543.2 1412.5,544.8 1413.0,538.1 1413.5,543.6 1414.0,540.2 1414.5,540.3 1415.0,542.1 1415.5,541.3 1416.0,541.9 1416.5,539.1 1417.0,537.7 1417.5,537.8 1418.0,544.2 1418.5,543.8 1419.0,542.0 1419.5,540.0 1420.0,539.2 1420.5,545.8 1421.0,540.6 1421.5,538.9 1422.0,540.9 1422.5,541.2 1423.0,545.2 1423.5,537.5 1424.0,538.5 1424.5,541.8 1425.0,542.1 1425.5,538.9 1426.0,537.9 1426.5,541.4 1427.0,544.1 1427.5,539.7 1428.0,542.6 1428.5,541.2 1429.0,541.6 1429.5,543.5 1430.0,537.8 1430.5,543.8 1431.0,537.5 1431.5,542.9 1432.0,541.4 1432.5,541.0 1433.0,539.8 1433.5,543.2 1434.0,531.1 1434.5,541.1 1435.0,536.7 1435.5,538.5 1436.0,540.7 1436.5,542.4 1437.0,539.5 1437.5,539.5 1438.0,542.5 1438.5,541.0 1439.0,538.9 1439.5,537.9 1440.0,540.8 1440.5,541.0 1441.0,542.6 1441.5,543.7 1442.0,538.2 1442.5,540.0 1443.0,541.3 1443.5,537.5 1444.0,538.4 1444.5,544.9 1445.0,546.5 1445.5,540.2 1446.0,542.1 1446.5,538.4 1447.0,543.8 1447.5,539.1 1448.0,539.3 1448.5,543.6 1449.0,535.3 1449.5,542.7 1450.0,540.5 1450.5,541.9 1451.0,541.8 1451.5,543.2 1452.0,542.7 1452.5,539.7 1453.0,545.1 1453.5,541.1 1454.0,540.8 1454.5,540.6 1455.0,540.7 1455.5,535.6 1456.0,540.7 1456.5,541.0 1457.0,542.6 1457.5,537.2 1458.0,537.3 1458.5,546.4 1459.0,543.5 1459.5,543.5 1460.0,538.1 1460.5,540.1 1461.0,538.8 1461.5,543.3 1462.0,540.9 1462.5,540.7 1463.0,537.8 1463.5,543.0 1464.0,547.9 1464.5,541.5 1465.0,534.3 1465.5,535.9 1466.0,548.0 1466.5,539.3 1467.0,538.5 1467.5,540.1 1468.0,541.9 1468.5,539.4 1469.0,540.8 1469.5,536.4 1470.0,542.4 1470.5,535.6 1471.0,540.7 1471.5,542.3 1472.0,537.7 1472.5,540.6 1473.0,538.2 1473.5,539.1 1474.0,541.9 1474.5,541.3 1475.0,535.0 1475.5,543.8 1476.0,539.5 1476.5,537.2 1477.0,538.7 1477.5,537.0 1478.0,543.1 1478.5,538.3 1479.0,537.4 1479.5,545.4 1480.0,539.3 1480.5,541.9 1481.0,542.5 1481.5,538.3 1482.0,539.6 1482.5,536.7 1483.0,539.4 1483.5,545.9 1484.0,542.4 1484.5,539.6 1485.0,538.4 1485.5,542.4 1486.0,539.0 1486.5,542.7 1487.0,537.0 1487.5,538.9 1488.0,539.5 1488.5,548.0 1489.0,540.5 1489.5,540.2 1490.0,543.1 1490.5,542.5 1491.0,538.6 1491.5,542.8 1492.0,540.2 1492.5,547.1 1493.0,539.0 1493.5,548.0 1494.0,546.9 1494.5,540.9 1495.0,543.4 1495.5,545.0 1496.0,539.9 1496.5,542.0 1497.0,536.6 1497.5,540.7 1498.0,537.2 1498.5,543.8 1499.0,540.2 1499.5,531.6 1500.0,539.3 1500.5,543.4 1501.0,542.3 1501.5,542.0 1502.0,539.1 1502.5,548.0 1503.0,538.1 1503.5,538.3 1504.0,541.8 1504.5,538.1 1505.0,548.0 1505.5,535.1 1506.0,540.3 1506.5,537.6 1507.0,543.8 1507.5,539.4 1508.0,540.7 1508.5,537.4 1509.0,544.9 1509.5,533.4 1510.0,539.6 1510.5,535.1 1511.0,539.9 1511.5,540.3 1512.0,540.3 1512.5,537.1 1513.0,538.2 1513.5,546.9 1514.0,544.6 1514.5,538.8 1515.0,544.4 1515.5,538.9 1516.0,542.8 1516.5,537.3 1517.0,538.9 1517.5,538.7 1518.0,542.1 1518.5,536.7 1519.0,541.5 1519.5,535.4 1520.0,544.6 1520.5,539.4 1521.0,542.1 1521.5,535.2 1522.0,537.7 1522.5,537.6 1523.0,542.6 1523.5,540.6 1524.0,544.1 1524.5,543.3 1525.0,535.6 1525.5,544.5 1526.0,539.2 1526.5,532.8 1527.0,538.0 1527.5,534.6 1528.0,546.5 1528.5,536.7 1529.0,534.3 1529.5,544.2 1530.0,540.7 1530.5,541.5 1531.0,543.2 1531.5,537.9 1532.0,543.5 1532.5,539.6 1533.0,538.8 1533.5,546.4 1534.0,543.7 1534.5,541.6 1535.0,535.6 1535.5,540.8 1536.0,539.8 1536.5,547.1 1537.0,532.2 1537.5,539.7 1538.0,537.8 1538.5,535.4 1539.0,538.4 1539.5,542.9 1540.0,543.7 1540.5,534.6 1541.0,546.2 1541.5,536.3 1542.0,533.0 1542.5,542.0 1543.0,541.8 1543.5,537.5 1544.0,537.8 1544.5,537.0 1545.0,528.7 1545.5,541.4 1546.0,534.7 1546.5,529.5 1547.0,538.9 1547.5,542.6 1548.0,530.6 1548.5,541.1 1549.0,534.7 1549.5,545.5 1550.0,538.8 1550.5,548.0 1551.0,546.2 1551.5,545.8 1552.0,541.0 1552.5,537.4 1553.0,535.9 1553.5,542.3 1554.0,548.0 1554.5,548.0 1555.0,539.6 1555.5,542.1 1556.0,545.6 1556.5,536.8 1557.0,537.2 1557.5,533.9 1558.0,526.6 1558.5,534.0 1559.0,539.5 1559.5,546.7 1560.0,544.3 1560.5,541.4 1561.0,539.2 1561.5,548.0 1562.0,541.6 1562.5,539.1 1563.0,534.2 1563.5,542.0 1564.0,542.0 1564.5,542.3 1565.0,535.2 1565.5,548.0 1566.0,537.5 1566.5,546.2 1567.0,541.7 1567.5,536.0 1568.0,542.0 1568.5,540.5 1569.0,544.5 1569.5,547.4 1570.0,534.2 1570.5,541.5 1571.0,539.4 1571.5,542.2 1572.0,540.7 1572.5,540.0 1573.0,538.3 1573.5,544.9 1574.0,542.6 1574.5,536.5 1575.0,541.3 1575.5,539.9 1576.0,542.6 1576.5,538.8 1577.0,541.7 1577.5,548.0 1578.0,544.9 1578.5,537.6 1579.0,510.3 1579.5,543.7 1580.0,548.0 1580.5,536.8 1581.0,528.2 1581.5,543.6 1582.0,541.1 1582.5,541.2 1583.0,533.0 1583.5,548.0 1584.0,535.6 1584.5,539.6 1585.0,540.1 1585.5,540.9 1586.0,536.2 1586.5,534.4 1587.0,547.4 1587.5,541.4 1588.0,535.5 1588.5,547.1 1589.0,534.7 1589.5,535.2 1590.0,540.0 1590.5,548.0 1591.0,545.5 1591.5,542.9 1592.0,537.6 1592.5,540.0 1593.0,540.2 1593.5,535.7 1594.0,540.4 1594.5,542.1 1595.0,540.2 1595.5,539.1 1596.0,543.1 1596.5,545.6 1597.0,542.5 1597.5,539.7 1598.0,548.0 1598.5,542.9 1599.0,544.4 1599.5,548.0 1600.0,526.9 1600.5,543.3 1601.0,548.0 1601.5,533.3 1602.0,538.4 1602.5,548.0 1603.0,537.2 1603.5,538.2 1604.0,541.0 1604.5,535.5 1605.0,548.0 1605.5,534.4 1606.0,545.6 1606.5,540.2 1607.0,542.8 1607.5,540.7 1608.0,542.6 1608.5,548.0 1609.0,539.8 1609.5,543.7 1610.0,539.7 1610.5,548.0 1611.0,536.1 1611.5,548.0 1612.0,548.0 1612.5,546.1 1613.0,534.2 1613.5,541.1 1614.0,544.3 1614.5,539.1 1615.0,546.4 1615.5,541.4 1616.0,536.8 1616.5,542.0 1617.0,548.0 1617.5,529.4 1618.0,540.5 1618.5,548.0 1619.0,547.1 1619.5,515.8 1620.0,539.0 1620.5,548.0 1621.0,548.0 1621.5,548.0 1622.0,541.2 1622.5,533.6 1623.0,528.8 1623.5,538.9 1624.0,537.7 1624.5,538.8 1625.0,540.7 1625.5,534.2 1626.0,542.8 1626.5,535.5 1627.0,548.0 1627.5,548.0 1628.0,536.4 1628.5,542.3 1629.0,548.0 1629.5,527.3 1630.0,523.9 1630.5,541.8 1631.0,537.9 1631.5,548.0 1632.0,548.0 1632.5,543.5 1633.0,548.0 1633.5,542.5 1634.0,544.3 1634.5,546.1 1635.0,541.9 1635.5,529.5 1636.0,548.0 1636.5,542.6 1637.0,531.2 1637.5,537.8 1638.0,540.9 1638.5,544.0 1639.0,548.0 1639.5,548.0 1640.0,525.8 1640.5,545.0 1641.0,528.1 1641.5,520.6 1642.0,536.2 1642.5,531.2 1643.0,541.6 1643.5,523.5 1644.0,544.0 1644.5,533.4 1645.0,538.5 1645.5,537.2 1646.0,546.0 1646.5,537.8 1647.0,546.8 1647.5,529.8 1648.0,538.9 1648.5,533.3 1649.0,543.0 1649.5,540.2 1650.0,538.7 1650.5,546.0 1651.0,541.0 1651.5,548.0 1652.0,548.0 1652.5,528.4 1653.0,548.0 1653.5,548.0 1654.0,540.0 1654.5,526.4 1655.0,546.9 1655.5,543.4 1656.0,543.6 1656.5,532.3 1657.0,548.0 1657.5,542.3 1658.0,542.5 1658.5,523.8 1659.0,540.0 1659.5,546.3 1660.0,548.0 1660.5,548.0 1661.0,548.0 1661.5,548.0 1662.0,548.0 1662.5,542.4 1663.0,548.0 1663.5,535.7 1664.0,544.0 1664.5,540.7 1665.0,518.6 1665.5,547.7 1666.0,537.8 1666.5,529.5 1667.0,548.0" fill="none" stroke="#2ca02c" stroke-width="1.5" stroke-linejoin="round"/><polyline points="696.6,537.3 697.1,544.9 697.6,538.7 698.1,544.6 698.6,537.4 699.1,545.7 699.6,543.0 700.1,542.7 700.6,547.5 701.1,538.1 701.6,545.7 702.1,548.0 702.6,542.6 703.1,538.4 703.6,543.3 704.1,527.1 704.6,540.9 705.1,541.7 705.6,539.4 706.1,541.2 706.6,544.1 707.1,542.5 707.6,540.3 708.1,530.0 708.6,540.0 709.1,539.3 709.6,547.7 710.1,541.6 710.6,540.9 711.1,535.4 711.6,535.9 712.1,540.4 712.6,539.2 713.1,541.0 713.6,543.0 714.1,540.7 714.6,541.9 715.1,539.8 715.6,536.2 716.1,541.4 716.6,537.4 717.1,544.2 717.6,540.7 718.1,540.2 718.6,546.3 719.1,538.9 719.6,538.6 720.1,535.6 720.6,540.9 721.1,538.9 721.6,538.8 722.1,545.6 722.6,539.9 723.1,545.0 723.6,539.9 724.1,538.6 724.6,539.9 725.1,546.8 725.6,536.4 726.1,539.9 726.6,537.8 727.1,542.8 727.6,541.9 728.1,534.6 728.6,541.3 729.1,542.0 729.6,541.8 730.1,537.8 730.6,548.0 731.1,541.7 731.6,543.3 732.1,533.5 732.6,537.6 733.1,540.4 733.6,540.1 734.1,541.4 734.6,542.0 735.1,541.2 735.6,535.6 736.1,541.6 736.6,541.5 737.1,538.8 737.6,536.5 738.1,539.4 738.6,547.4 739.1,540.5 739.6,540.7 740.1,544.5 740.6,542.8 741.1,539.7 741.6,541.9 742.1,536.0 742.6,539.7 743.1,542.0 743.6,540.9 744.1,543.3 744.6,542.6 745.1,538.5 745.6,540.9 746.1,548.0 746.6,544.4 747.1,539.1 747.6,543.9 748.1,542.5 748.6,537.7 749.1,542.0 749.6,542.3 750.1,541.8 750.6,537.7 751.1,542.6 751.6,544.0 752.1,540.4 752.6,536.2 753.1,539.6 753.6,536.4 754.1,537.3 754.6,543.6 755.1,540.4 755.6,540.9 756.1,540.6 756.6,537.3 757.1,536.8 757.6,538.6 758.1,537.3 758.6,542.2 759.1,538.3 759.6,543.4 760.1,541.5 760.6,543.9 761.1,537.2 761.6,541.7 762.1,538.5 762.6,544.0 763.1,539.9 763.6,538.3 764.1,540.2 764.6,539.9 765.1,540.0 765.6,540.6 766.1,541.4 766.6,542.7 767.1,537.7 767.6,540.0 768.1,540.2 768.6,539.6 769.1,547.4 769.6,544.0 770.1,544.0 770.6,535.7 771.1,541.1 771.6,538.5 772.1,545.2 772.6,541.4 773.1,540.2 773.6,541.9 774.1,537.5 774.6,541.3 775.1,540.6 775.6,537.5 776.1,530.9 776.6,539.5 777.1,541.6 777.6,541.1 778.1,537.3 778.6,543.2 779.1,543.0 779.6,542.9 780.1,537.8 780.6,539.4 781.1,542.8 781.6,542.4 782.1,540.5 782.6,541.9 783.1,543.2 783.6,542.7 784.1,541.1 784.6,543.9 785.1,540.7 785.6,541.5 786.1,542.4 786.6,539.5 787.1,537.9 787.6,545.6 788.1,539.9 788.6,541.8 789.1,543.2 789.6,538.7 790.1,539.1 790.6,539.2 791.1,542.0 791.6,536.1 792.1,539.4 792.6,542.2 793.1,535.8 793.6,542.7 794.1,536.8 794.6,541.4 795.1,542.2 795.6,542.5 796.1,543.2 796.6,543.0 797.1,538.7 797.6,540.9 798.1,544.8 798.6,540.2 799.1,544.4 799.6,539.4 800.1,541.8 800.6,541.2 801.1,537.7 801.6,545.8 802.1,535.1 802.6,532.9 803.1,537.9 803.6,539.2 804.1,542.4 804.6,537.9 805.1,541.1 805.6,541.4 806.1,542.6 806.6,537.2 807.1,538.5 807.6,544.2 808.1,541.2 808.6,543.9 809.1,538.3 809.6,542.9 810.1,540.8 810.6,539.2 811.1,541.1 811.6,547.4 812.1,541.8 812.6,544.0 813.1,532.8 813.6,535.6 814.1,545.0 814.6,547.0 815.1,535.1 815.6,539.0 816.1,541.4 816.6,538.3 817.1,539.8 817.6,538.7 818.1,541.6 818.6,536.6 819.1,540.0 819.6,543.6 820.1,540.7 820.6,541.4 821.1,539.7 821.6,539.9 822.1,540.3 822.6,542.7 823.1,540.1 823.6,542.0 824.1,536.6 824.6,543.4 825.1,541.3 825.6,541.9 826.1,543.1 826.6,539.6 827.1,539.9 827.6,539.6 828.1,536.9 828.6,542.0 829.1,539.5 829.6,540.4 830.1,539.9 830.6,543.7 831.1,543.6 831.6,538.6 832.1,543.5 832.6,537.9 833.1,536.9 833.6,542.0 834.1,539.8 834.6,540.1 835.1,536.9 835.6,535.4 836.1,538.6 836.6,538.5 837.1,537.6 837.6,542.9 838.1,540.7 838.6,538.4 839.1,541.7 839.6,536.5 840.1,542.8 840.6,541.0 841.1,540.2 841.6,538.8 842.1,542.6 842.6,541.3 843.1,539.5 843.6,540.1 844.1,538.9 844.6,542.2 845.1,542.9 845.6,547.0 846.1,543.4 846.6,541.4 847.1,543.8 847.6,541.2 848.1,538.2 848.6,541.3 849.1,537.9 849.6,538.3 850.1,539.9 850.6,538.2 851.1,537.7 851.6,543.1 852.1,535.9 852.6,543.9 853.1,539.0 853.6,541.0 854.1,540.8 854.6,539.0 855.1,540.3 855.6,539.7 856.1,539.1 856.6,540.9 857.1,538.0 857.6,540.9 858.1,536.8 858.6,540.7 859.1,537.1 859.6,538.7 860.1,533.8 860.6,539.3 861.1,534.0 861.6,537.5 862.1,540.1 862.6,532.5 863.1,533.0 863.6,530.8 864.1,535.3 864.6,531.7 865.1,529.7 865.6,532.2 866.1,525.1 866.6,531.7 867.1,528.1 867.6,531.8 868.0,530.9 869.0,528.7 870.0,526.4 871.0,524.1 872.0,522.0 873.0,523.7 874.0,517.0 875.0,515.2 876.0,516.6 877.0,509.1 878.0,503.2 879.0,499.4 880.0,497.5 881.0,491.5 882.0,486.3 883.0,479.6 884.0,468.2 885.0,455.5 886.0,440.3 887.0,428.1 888.0,408.7 889.0,390.2 890.0,372.1 891.0,358.1 892.0,335.4 893.0,321.4 894.0,305.9 895.0,288.2 896.0,268.4 897.0,252.5 898.0,233.1 899.0,207.8 900.0,187.2 901.0,165.0 902.0,152.0 903.0,136.4 904.0,119.9 905.0,115.0 906.0,108.1 907.0,106.1 908.0,104.3 909.0,97.8 910.0,99.7 911.0,102.2 912.0,103.8 913.0,108.1 914.0,111.1 915.0,117.9 916.0,124.6 917.0,139.4 918.0,145.5 919.0,156.1 920.0,171.4 921.0,178.0 922.0,188.9 923.0,204.4 924.0,217.9 925.0,223.9 926.0,243.4 927.0,247.5 928.0,259.0 929.0,268.2 930.0,278.8 931.0,288.3 932.0,293.1 933.0,300.9 934.0,313.0 935.0,317.6 936.0,327.3 937.0,334.3 938.0,344.5 939.0,353.2 940.0,362.7 941.0,367.0 942.0,369.0 943.0,373.3 944.0,378.7 945.0,383.3 946.0,386.1 947.0,388.3 948.0,391.4 949.0,394.9 950.0,398.3 951.0,399.7 952.0,404.1 953.0,402.9 954.0,406.8 955.0,410.0 956.0,411.6 957.0,413.1 958.0,413.6 959.0,413.6 960.0,416.7 961.0,416.2 962.0,418.4 963.0,421.8 964.0,422.4 965.0,423.3 966.0,423.8 967.0,422.4 968.0,422.8 969.0,426.2 970.0,427.2 971.0,429.5 972.0,429.7 973.0,434.0 974.0,436.0 975.0,438.1 976.0,439.9 977.0,443.2 978.0,448.5 979.0,448.4 980.0,451.8 981.0,453.7 982.0,455.2 983.0,460.3 984.0,461.0 985.0,462.7 986.0,467.3 987.0,467.0 988.0,470.0 989.0,472.7 990.0,475.9 991.0,477.2 992.0,478.7 993.0,483.0 994.0,484.8 995.0,487.0 996.0,488.1 997.0,490.0 998.0,491.5 999.0,493.9 1000.0,496.5 1001.0,497.3 1002.0,500.0 1003.0,498.8 1004.0,501.4 1005.0,502.5 1006.0,502.9 1007.0,505.5 1008.0,504.9 1009.0,505.3 1010.0,506.7 1011.0,507.4 1012.0,508.3 1013.0,509.5 1014.0,510.4 1015.0,511.9 1016.0,511.6 1017.0,512.0 1018.0,512.1 1019.0,514.5 1020.0,514.7 1021.0,515.3 1022.0,516.3 1023.0,516.8 1024.0,517.2 1025.0,517.5 1026.0,516.6 1027.0,519.3 1028.0,519.4 1029.0,521.1 1030.0,518.9 1031.0,519.4 1032.0,520.9 1033.0,520.0 1034.0,521.7 1035.0,520.3 1036.0,521.5 1037.0,521.2 1038.0,523.1 1039.0,521.7 1040.0,522.5 1041.0,523.3 1042.0,524.2 1043.0,522.1 1044.0,523.1 1045.0,524.1 1046.0,523.4 1047.0,523.7 1048.0,523.8 1049.0,525.6 1050.0,524.6 1051.0,525.2 1052.0,526.1 1053.0,525.8 1054.0,526.5 1055.0,525.6 1056.0,526.7 1057.0,526.6 1058.0,526.4 1059.0,525.9 1060.0,527.0 1061.0,528.5 1062.0,526.8 1063.0,527.9 1064.0,527.4 1065.0,528.3 1066.0,528.9 1067.0,529.8 1068.0,528.9 1069.0,528.6 1070.0,529.8 1071.0,530.0 1072.0,530.3 1073.0,530.1 1074.0,530.1 1075.0,529.8 1076.0,530.9 1077.0,530.7 1078.0,531.8 1079.0,530.5 1080.0,531.4 1081.0,532.6 1082.0,532.4 1083.0,532.0 1084.0,531.2 1085.0,532.2 1086.0,531.2 1087.0,532.2 1088.0,533.3 1089.0,533.4 1090.0,531.7 1091.0,533.7 1092.0,533.9 1093.0,534.2 1094.0,535.8 1095.0,533.2 1096.0,533.3 1097.0,535.9 1098.0,533.0 1099.0,533.6 1100.0,534.7 1101.0,535.6 1102.0,534.8 1103.0,534.9 1104.0,534.1 1105.0,535.0 1106.0,534.0 1107.0,532.9 1108.0,535.5 1109.0,535.4 1110.0,534.0 1111.0,533.6 1112.0,536.6 1113.0,535.7 1114.0,536.6 1115.0,535.0 1116.0,535.3 1117.0,536.1 1118.0,535.3 1119.0,534.6 1120.0,538.2 1121.0,537.0 1122.0,536.4 1123.0,535.9 1124.0,535.5 1125.0,535.8 1126.0,534.5 1127.0,536.0 1128.0,536.7 1129.0,536.8 1130.0,538.0 1131.0,536.4 1132.0,535.9 1133.0,537.4 1134.0,535.7 1135.0,537.6 1136.0,536.0 1137.0,536.8 1138.0,535.2 1139.0,536.5 1140.0,536.6 1141.0,537.1 1142.0,537.8 1143.0,537.4 1144.0,537.8 1145.0,538.3 1146.0,536.0 1147.0,536.2 1148.0,536.7 1149.0,536.7 1150.0,538.4 1151.0,539.6 1152.0,536.8 1153.0,536.9 1154.0,536.9 1155.0,536.7 1156.0,536.9 1157.0,538.1 1158.0,537.0 1159.0,537.1 1160.0,536.2 1161.0,537.1 1162.0,537.5 1163.0,537.6 1164.0,538.5 1165.0,538.2 1166.0,537.1 1167.0,539.7 1168.0,538.8 1169.0,537.4 1170.0,538.7 1171.0,539.6 1172.0,537.8 1173.0,536.9 1174.0,537.9 1175.0,538.1 1176.0,539.7 1177.0,536.0 1178.0,539.2 1179.0,539.1 1180.0,537.9 1181.0,538.0 1182.0,538.5 1183.0,538.4 1184.0,538.0 1185.0,538.3 1186.0,539.4 1187.0,538.6 1188.0,538.4 1189.0,538.4 1190.0,538.8 1191.0,539.8 1192.0,538.4 1193.0,538.2 1194.0,538.5 1195.0,540.5 1196.0,538.6 1197.0,537.4 1198.0,538.5 1199.0,539.5 1200.0,538.7 1201.0,539.2 1202.0,539.4 1203.0,538.6 1204.0,538.8 1205.0,539.9 1206.0,537.4 1207.0,538.2 1208.0,541.0 1209.0,539.4 1210.0,539.4 1211.0,545.1 1212.0,540.7 1213.0,538.3 1214.0,539.4 1215.0,539.0 1216.0,539.2 1217.0,539.4 1218.0,540.0 1219.0,540.9 1220.0,541.5 1221.0,540.5 1222.0,538.7 1223.0,538.6 1224.0,538.2 1225.0,539.9 1226.0,540.7 1227.0,538.1 1228.0,538.6 1229.0,539.2 1230.0,539.3 1231.0,540.4 1232.0,538.5 1233.0,541.9 1234.0,540.3 1235.0,539.2 1235.5,539.8 1236.0,538.1 1236.5,538.6 1237.0,540.7 1237.5,540.8 1238.0,542.4 1238.5,538.5 1239.0,539.7 1239.5,539.1 1240.0,541.3 1240.5,541.1 1241.0,539.3 1241.5,540.5 1242.0,540.0 1242.5,538.1 1243.0,539.4 1243.5,539.4 1244.0,539.6 1244.5,540.4 1245.0,537.6 1245.5,539.6 1246.0,537.0 1246.5,539.0 1247.0,541.8 1247.5,540.2 1248.0,540.9 1248.5,538.1 1249.0,540.0 1249.5,541.3 1250.0,540.3 1250.5,538.6 1251.0,538.9 1251.5,539.7 1252.0,539.7 1252.5,541.4 1253.0,540.4 1253.5,540.1 1254.0,541.0 1254.5,539.7 1255.0,541.3 1255.5,538.8 1256.0,540.9 1256.5,541.2 1257.0,541.4 1257.5,540.5 1258.0,539.7 1258.5,539.8 1259.0,541.0 1259.5,540.0 1260.0,541.5 1260.5,540.3 1261.0,539.6 1261.5,540.1 1262.0,540.9 1262.5,542.6 1263.0,540.0 1263.5,540.4 1264.0,542.6 1264.5,541.6 1265.0,540.7 1265.5,540.2 1266.0,540.5 1266.5,538.7 1267.0,541.8 1267.5,538.6 1268.0,540.9 1268.5,540.0 1269.0,540.8 1269.5,540.1 1270.0,542.2 1270.5,538.5 1271.0,541.0 1271.5,540.4 1272.0,546.6 1272.5,540.4 1273.0,541.1 1273.5,539.3 1274.0,539.8 1274.5,540.9 1275.0,542.1 1275.5,538.5 1276.0,541.1 1276.5,538.9 1277.0,538.9 1277.5,538.3 1278.0,541.9 1278.5,541.7 1279.0,540.8 1279.5,541.1 1280.0,539.3 1280.5,539.8 1281.0,539.3 1281.5,539.9 1282.0,539.6 1282.5,539.5 1283.0,540.0 1283.5,540.9 1284.0,538.5 1284.5,540.6 1285.0,542.3 1285.5,542.7 1286.0,539.5 1286.5,540.7 1287.0,540.8 1287.5,542.0 1288.0,539.9 1288.5,538.8 1289.0,539.7 1289.5,541.6 1290.0,540.4 1290.5,540.0 1291.0,542.8 1291.5,541.9 1292.0,541.9 1292.5,537.7 1293.0,538.3 1293.5,540.4 1294.0,540.0 1294.5,538.7 1295.0,538.8 1295.5,539.2 1296.0,541.5 1296.5,541.6 1297.0,540.4 1297.5,537.6 1298.0,539.4 1298.5,540.5 1299.0,541.4 1299.5,538.0 1300.0,541.6 1300.5,540.1 1301.0,540.0 1301.5,539.6 1302.0,538.3 1302.5,543.1 1303.0,544.3 1303.5,539.7 1304.0,538.9 1304.5,539.0 1305.0,539.3 1305.5,540.4 1306.0,540.7 1306.5,537.5 1307.0,541.5 1307.5,538.8 1308.0,540.7 1308.5,540.4 1309.0,541.9 1309.5,541.5 1310.0,541.6 1310.5,543.1 1311.0,542.3 1311.5,543.5 1312.0,539.5 1312.5,542.4 1313.0,541.5 1313.5,538.4 1314.0,539.9 1314.5,541.6 1315.0,539.5 1315.5,540.5 1316.0,540.0 1316.5,542.2 1317.0,539.6 1317.5,540.6 1318.0,541.6 1318.5,542.4 1319.0,541.4 1319.5,542.3 1320.0,540.8 1320.5,540.7 1321.0,542.2 1321.5,538.9 1322.0,539.6 1322.5,543.0 1323.0,538.5 1323.5,541.9 1324.0,543.1 1324.5,540.7 1325.0,538.9 1325.5,538.3 1326.0,541.5 1326.5,540.1 1327.0,540.2 1327.5,538.2 1328.0,538.9 1328.5,539.5 1329.0,539.7 1329.5,539.9 1330.0,539.9 1330.5,540.7 1331.0,541.4 1331.5,538.1 1332.0,540.1 1332.5,539.3 1333.0,540.8 1333.5,539.8 1334.0,541.3 1334.5,539.8 1335.0,540.7 1335.5,538.4 1336.0,543.5 1336.5,538.1 1337.0,540.0 1337.5,542.1 1338.0,539.5 1338.5,541.0 1339.0,539.8 1339.5,540.8 1340.0,540.2 1340.5,540.5 1341.0,541.0 1341.5,541.4 1342.0,539.4 1342.5,539.1 1343.0,539.1 1343.5,541.0 1344.0,540.2 1344.5,540.0 1345.0,540.0 1345.5,540.4 1346.0,539.5 1346.5,541.8 1347.0,539.4 1347.5,544.0 1348.0,540.8 1348.5,541.2 1349.0,541.1 1349.5,538.8 1350.0,542.7 1350.5,541.0 1351.0,540.7 1351.5,539.6 1352.0,542.2 1352.5,544.9 1353.0,543.0 1353.5,540.7 1354.0,540.0 1354.5,537.7 1355.0,537.6 1355.5,539.2 1356.0,540.0 1356.5,539.0 1357.0,539.6 1357.5,540.7 1358.0,541.0 1358.5,537.3 1359.0,539.5 1359.5,542.9 1360.0,538.4 1360.5,541.9 1361.0,541.4 1361.5,540.0 1362.0,540.6 1362.5,541.0 1363.0,541.4 1363.5,541.7 1364.0,542.5 1364.5,539.9 1365.0,538.4 1365.5,541.9 1366.0,539.4 1366.5,539.0 1367.0,542.5 1367.5,538.7 1368.0,538.9 1368.5,540.5 1369.0,541.6 1369.5,539.3 1370.0,539.7 1370.5,541.6 1371.0,544.8 1371.5,538.1 1372.0,548.0 1372.5,540.6 1373.0,545.2 1373.5,541.4 1374.0,541.6 1374.5,540.6 1375.0,539.9 1375.5,539.5 1376.0,542.5 1376.5,537.2 1377.0,539.5 1377.5,542.3 1378.0,539.9 1378.5,542.1 1379.0,540.3 1379.5,542.9 1380.0,540.2 1380.5,538.1 1381.0,541.5 1381.5,540.2 1382.0,537.0 1382.5,535.5 1383.0,542.7 1383.5,541.3 1384.0,544.9 1384.5,543.6 1385.0,537.1 1385.5,541.3 1386.0,541.4 1386.5,541.4 1387.0,538.4 1387.5,543.1 1388.0,542.1 1388.5,541.1 1389.0,542.0 1389.5,540.1 1390.0,537.5 1390.5,541.7 1391.0,540.3 1391.5,537.7 1392.0,540.4 1392.5,542.7 1393.0,539.2 1393.5,539.0 1394.0,537.3 1394.5,540.7 1395.0,538.4 1395.5,538.0 1396.0,544.7 1396.5,540.9 1397.0,536.7 1397.5,542.4 1398.0,537.9 1398.5,541.2 1399.0,543.7 1399.5,546.0 1400.0,542.3 1400.5,543.6 1401.0,532.6 1401.5,545.7 1402.0,538.8 1402.5,541.4 1403.0,538.7 1403.5,544.0 1404.0,540.2 1404.5,542.8 1405.0,539.3 1405.5,537.6 1406.0,539.7 1406.5,540.8 1407.0,539.0 1407.5,539.5 1408.0,542.3 1408.5,545.6 1409.0,541.8 1409.5,545.8 1410.0,542.7 1410.5,528.8 1411.0,537.4 1411.5,542.1 1412.0,540.0 1412.5,537.2 1413.0,540.9 1413.5,544.9 1414.0,544.7 1414.5,537.7 1415.0,533.8 1415.5,537.9 1416.0,539.5 1416.5,540.0 1417.0,540.0 1417.5,541.4 1418.0,539.9 1418.5,539.5 1419.0,543.0 1419.5,536.0 1420.0,539.2 1420.5,538.4 1421.0,542.2 1421.5,540.6 1422.0,541.4 1422.5,543.2 1423.0,542.1 1423.5,535.2 1424.0,539.7 1424.5,538.8 1425.0,540.1 1425.5,540.1 1426.0,542.1 1426.5,539.3 1427.0,542.4 1427.5,539.4 1428.0,543.7 1428.5,542.3 1429.0,541.4 1429.5,539.3 1430.0,543.1 1430.5,540.0 1431.0,539.5 1431.5,538.6 1432.0,540.1 1432.5,540.1 1433.0,540.7 1433.5,543.5 1434.0,539.4 1434.5,541.8 1435.0,540.1 1435.5,536.7 1436.0,538.6 1436.5,539.9 1437.0,541.1 1437.5,541.9 1438.0,543.6 1438.5,540.3 1439.0,536.9 1439.5,539.5 1440.0,545.1 1440.5,538.0 1441.0,542.8 1441.5,542.6 1442.0,538.1 1442.5,538.9 1443.0,536.4 1443.5,546.3 1444.0,539.6 1444.5,539.9 1445.0,540.7 1445.5,540.5 1446.0,545.2 1446.5,540.5 1447.0,543.0 1447.5,540.2 1448.0,543.0 1448.5,538.5 1449.0,539.8 1449.5,540.8 1450.0,540.5 1450.5,544.2 1451.0,537.8 1451.5,539.4 1452.0,540.4 1452.5,540.7 1453.0,540.7 1453.5,540.2 1454.0,541.7 1454.5,544.2 1455.0,545.8 1455.5,544.4 1456.0,538.3 1456.5,542.7 1457.0,539.1 1457.5,536.9 1458.0,540.1 1458.5,541.2 1459.0,540.8 1459.5,538.0 1460.0,542.5 1460.5,538.9 1461.0,534.9 1461.5,538.5 1462.0,538.9 1462.5,539.3 1463.0,540.9 1463.5,544.0 1464.0,538.2 1464.5,538.1 1465.0,544.4 1465.5,540.0 1466.0,532.3 1466.5,538.0 1467.0,538.3 1467.5,542.4 1468.0,545.2 1468.5,540.1 1469.0,537.0 1469.5,541.8 1470.0,535.3 1470.5,543.3 1471.0,541.8 1471.5,537.0 1472.0,544.2 1472.5,538.3 1473.0,536.2 1473.5,538.7 1474.0,540.3 1474.5,540.7 1475.0,543.8 1475.5,541.0 1476.0,541.8 1476.5,548.0 1477.0,544.0 1477.5,538.3 1478.0,541.8 1478.5,542.8 1479.0,540.8 1479.5,545.6 1480.0,538.8 1480.5,537.9 1481.0,534.8 1481.5,541.0 1482.0,534.1 1482.5,542.0 1483.0,542.6 1483.5,542.2 1484.0,539.9 1484.5,541.8 1485.0,540.1 1485.5,542.9 1486.0,543.5 1486.5,538.3 1487.0,544.5 1487.5,541.7 1488.0,536.8 1488.5,540.1 1489.0,539.8 1489.5,542.0 1490.0,543.1 1490.5,538.0 1491.0,541.4 1491.5,540.7 1492.0,539.0 1492.5,543.6 1493.0,540.7 1493.5,548.0 1494.0,536.6 1494.5,537.8 1495.0,545.6 1495.5,540.2 1496.0,540.7 1496.5,545.5 1497.0,542.4 1497.5,543.7 1498.0,543.8 1498.5,542.6 1499.0,539.8 1499.5,543.8 1500.0,543.4 1500.5,543.8 1501.0,546.3 1501.5,541.3 1502.0,535.8 1502.5,538.1 1503.0,545.3 1503.5,540.4 1504.0,544.0 1504.5,535.1 1505.0,547.2 1505.5,537.1 1506.0,546.3 1506.5,539.3 1507.0,536.7 1507.5,540.7 1508.0,536.1 1508.5,541.7 1509.0,535.6 1509.5,542.6 1510.0,540.9 1510.5,538.9 1511.0,532.7 1511.5,543.0 1512.0,543.5 1512.5,536.4 1513.0,540.2 1513.5,543.0 1514.0,541.3 1514.5,537.6 1515.0,543.2 1515.5,543.6 1516.0,539.0 1516.5,538.4 1517.0,542.4 1517.5,541.0 1518.0,536.3 1518.5,544.7 1519.0,543.9 1519.5,535.6 1520.0,537.3 1520.5,534.4 1521.0,539.0 1521.5,539.6 1522.0,538.4 1522.5,545.5 1523.0,543.9 1523.5,538.1 1524.0,538.0 1524.5,537.2 1525.0,538.0 1525.5,539.6 1526.0,544.2 1526.5,538.4 1527.0,539.3 1527.5,545.8 1528.0,537.4 1528.5,539.2 1529.0,537.9 1529.5,543.4 1530.0,542.1 1530.5,530.0 1531.0,542.0 1531.5,542.0 1532.0,537.0 1532.5,548.0 1533.0,539.7 1533.5,538.0 1534.0,537.2 1534.5,537.9 1535.0,545.8 1535.5,539.4 1536.0,538.5 1536.5,548.0 1537.0,538.6 1537.5,542.0 1538.0,539.6 1538.5,540.0 1539.0,540.7 1539.5,538.3 1540.0,538.8 1540.5,536.5 1541.0,538.7 1541.5,543.3 1542.0,534.1 1542.5,539.5 1543.0,546.1 1543.5,538.2 1544.0,538.9 1544.5,537.0 1545.0,535.0 1545.5,539.3 1546.0,543.2 1546.5,536.4 1547.0,542.1 1547.5,540.9 1548.0,538.1 1548.5,542.1 1549.0,542.3 1549.5,534.8 1550.0,539.8 1550.5,538.4 1551.0,541.3 1551.5,540.6 1552.0,542.4 1552.5,539.6 1553.0,541.2 1553.5,540.8 1554.0,542.6 1554.5,530.2 1555.0,536.2 1555.5,543.2 1556.0,548.0 1556.5,537.2 1557.0,540.5 1557.5,542.9 1558.0,538.4 1558.5,546.6 1559.0,533.8 1559.5,540.6 1560.0,545.0 1560.5,547.1 1561.0,533.7 1561.5,542.7 1562.0,541.9 1562.5,539.5 1563.0,544.0 1563.5,545.8 1564.0,543.6 1564.5,539.5 1565.0,540.6 1565.5,544.1 1566.0,542.1 1566.5,534.3 1567.0,536.2 1567.5,542.1 1568.0,539.4 1568.5,540.8 1569.0,538.6 1569.5,531.7 1570.0,544.8 1570.5,538.4 1571.0,539.9 1571.5,539.1 1572.0,540.6 1572.5,544.4 1573.0,543.2 1573.5,548.0 1574.0,545.4 1574.5,542.3 1575.0,536.9 1575.5,536.7 1576.0,540.6 1576.5,543.3 1577.0,545.8 1577.5,547.9 1578.0,540.1 1578.5,537.7 1579.0,540.8 1579.5,545.5 1580.0,545.4 1580.5,533.0 1581.0,538.6 1581.5,542.5 1582.0,535.8 1582.5,539.8 1583.0,548.0 1583.5,539.2 1584.0,539.1 1584.5,533.9 1585.0,544.3 1585.5,536.7 1586.0,536.8 1586.5,538.7 1587.0,540.3 1587.5,540.3 1588.0,541.7 1588.5,539.7 1589.0,536.9 1589.5,541.0 1590.0,544.1 1590.5,542.7 1591.0,542.3 1591.5,542.1 1592.0,540.3 1592.5,548.0 1593.0,538.7 1593.5,529.7 1594.0,535.6 1594.5,543.8 1595.0,548.0 1595.5,541.9 1596.0,542.3 1596.5,540.5 1597.0,546.0 1597.5,546.0 1598.0,537.1 1598.5,542.4 1599.0,534.4 1599.5,547.1 1600.0,548.0 1600.5,538.0 1601.0,548.0 1601.5,545.5 1602.0,536.5 1602.5,543.3 1603.0,536.2 1603.5,544.7 1604.0,540.2 1604.5,538.1 1605.0,534.8 1605.5,536.2 1606.0,543.2 1606.5,542.9 1607.0,535.0 1607.5,534.2 1608.0,534.6 1608.5,548.0 1609.0,548.0 1609.5,539.7 1610.0,544.5 1610.5,533.6 1611.0,525.3 1611.5,532.6 1612.0,536.6 1612.5,529.5 1613.0,548.0 1613.5,540.1 1614.0,545.5 1614.5,543.4 1615.0,548.0 1615.5,538.0 1616.0,543.2 1616.5,529.4 1617.0,534.0 1617.5,548.0 1618.0,536.5 1618.5,542.7 1619.0,542.7 1619.5,532.6 1620.0,524.9 1620.5,548.0 1621.0,547.9 1621.5,546.9 1622.0,536.9 1622.5,545.3 1623.0,534.4 1623.5,548.0 1624.0,548.0 1624.5,534.6 1625.0,531.9 1625.5,548.0 1626.0,548.0 1626.5,544.3 1627.0,544.4 1627.5,544.4 1628.0,546.7 1628.5,520.9 1629.0,533.3 1629.5,546.8 1630.0,546.1 1630.5,540.7 1631.0,536.7 1631.5,527.5 1632.0,530.7 1632.5,538.4 1633.0,544.4 1633.5,532.1 1634.0,533.5 1634.5,548.0 1635.0,548.0 1635.5,542.8 1636.0,538.3 1636.5,542.3 1637.0,545.5 1637.5,548.0 1638.0,528.2 1638.5,543.8 1639.0,548.0 1639.5,548.0 1640.0,537.6 1640.5,548.0 1641.0,528.6 1641.5,548.0 1642.0,548.0 1642.5,548.0 1643.0,536.9 1643.5,548.0 1644.0,548.0 1644.5,536.7 1645.0,522.5 1645.5,547.3 1646.0,529.4 1646.5,533.4 1647.0,548.0 1647.5,535.5 1648.0,527.5 1648.5,539.8 1649.0,548.0 1649.5,543.4 1650.0,548.0 1650.5,538.4 1651.0,530.4 1651.5,537.6 1652.0,536.9 1652.5,521.3 1653.0,539.1 1653.5,527.2 1654.0,548.0 1654.5,546.0 1655.0,532.1 1655.5,526.7 1656.0,528.7 1656.5,530.5 1657.0,536.8 1657.5,521.0 1658.0,528.9 1658.5,540.8 1659.0,548.0 1659.5,548.0 1660.0,519.2 1660.5,540.4 1661.0,542.8 1661.5,548.0 1662.0,538.1 1662.5,546.2 1663.0,529.9 1663.5,535.1 1664.0,548.0 1664.5,548.0 1665.0,541.7 1665.5,547.1 1666.0,542.9 1666.5,536.9 1667.0,548.0" fill="none" stroke="#d62728" stroke-width="1.5" stroke-linejoin="round"/><polyline points="696.6,539.0 697.1,539.0 697.6,545.2 698.1,540.8 698.6,540.8 699.1,540.6 699.6,533.9 700.1,541.7 700.6,541.7 701.1,544.0 701.6,537.5 702.1,542.1 702.6,541.1 703.1,538.0 703.6,538.4 704.1,543.8 704.6,535.1 705.1,539.9 705.6,537.8 706.1,539.8 706.6,535.4 707.1,541.9 707.6,542.7 708.1,539.5 708.6,536.5 709.1,540.8 709.6,538.0 710.1,535.9 710.6,545.1 711.1,536.5 711.6,537.2 712.1,542.2 712.6,540.9 713.1,542.2 713.6,538.2 714.1,542.6 714.6,538.7 715.1,531.3 715.6,546.0 716.1,539.4 716.6,540.9 717.1,542.2 717.6,539.4 718.1,541.1 718.6,548.0 719.1,542.5 719.6,540.8 720.1,543.0 720.6,544.8 721.1,533.3 721.6,531.1 722.1,536.8 722.6,540.4 723.1,546.9 723.6,541.6 724.1,539.1 724.6,542.1 725.1,542.5 725.6,539.7 726.1,526.8 726.6,539.8 727.1,540.3 727.6,545.2 728.1,536.1 728.6,539.6 729.1,540.6 729.6,541.3 730.1,542.1 730.6,539.7 731.1,534.3 731.6,540.1 732.1,536.2 732.6,542.4 733.1,539.3 733.6,544.4 734.1,536.0 734.6,541.7 735.1,538.7 735.6,539.8 736.1,536.0 736.6,538.4 737.1,538.3 737.6,544.7 738.1,543.0 738.6,542.1 739.1,539.1 739.6,533.8 740.1,523.6 740.6,524.8 741.1,527.8 741.6,536.3 742.1,540.5 742.6,543.7 743.1,537.5 743.6,540.3 744.1,538.7 744.6,540.0 745.1,543.2 745.6,540.9 746.1,546.7 746.6,538.7 747.1,540.6 747.6,540.1 748.1,540.4 748.6,539.0 749.1,541.4 749.6,540.6 750.1,542.6 750.6,542.2 751.1,539.8 751.6,538.2 752.1,541.7 752.6,544.6 753.1,545.8 753.6,541.5 754.1,542.7 754.6,537.2 755.1,536.3 755.6,542.9 756.1,532.9 756.6,537.4 757.1,543.3 757.6,541.9 758.1,538.8 758.6,542.9 759.1,543.4 759.6,538.6 760.1,542.3 760.6,542.4 761.1,538.9 761.6,540.3 762.1,539.9 762.6,536.7 763.1,537.0 763.6,545.0 764.1,538.0 764.6,540.4 765.1,539.5 765.6,538.2 766.1,535.6 766.6,535.3 767.1,540.7 767.6,537.4 768.1,544.4 768.6,539.0 769.1,539.8 769.6,543.6 770.1,544.2 770.6,544.0 771.1,542.7 771.6,539.0 772.1,541.0 772.6,542.3 773.1,541.3 773.6,537.3 774.1,541.3 774.6,542.7 775.1,534.9 775.6,542.7 776.1,539.3 776.6,538.3 777.1,540.2 777.6,541.1 778.1,537.3 778.6,540.2 779.1,538.9 779.6,540.7 780.1,536.3 780.6,542.8 781.1,543.7 781.6,542.7 782.1,540.9 782.6,541.2 783.1,540.2 783.6,542.2 784.1,539.4 784.6,544.1 785.1,543.7 785.6,541.2 786.1,542.3 786.6,542.6 787.1,542.0 787.6,542.4 788.1,539.9 788.6,538.8 789.1,537.5 789.6,540.2 790.1,542.3 790.6,543.3 791.1,543.3 791.6,544.5 792.1,539.1 792.6,536.3 793.1,540.8 793.6,540.0 794.1,546.0 794.6,540.8 795.1,542.2 795.6,540.4 796.1,542.6 796.6,542.4 797.1,542.7 797.6,542.2 798.1,535.6 798.6,538.9 799.1,544.1 799.6,541.1 800.1,541.5 800.6,535.5 801.1,545.0 801.6,539.0 802.1,538.6 802.6,535.3 803.1,536.4 803.6,541.0 804.1,544.5 804.6,545.9 805.1,542.2 805.6,541.1 806.1,542.2 806.6,543.9 807.1,539.0 807.6,540.2 808.1,541.5 808.6,541.8 809.1,542.1 809.6,543.1 810.1,534.4 810.6,541.4 811.1,543.7 811.6,536.9 812.1,541.4 812.6,539.8 813.1,543.0 813.6,541.5 814.1,545.0 814.6,539.4 815.1,535.5 815.6,539.9 816.1,539.6 816.6,537.7 817.1,537.7 817.6,542.6 818.1,542.4 818.6,541.3 819.1,537.4 819.6,546.6 820.1,541.9 820.6,541.1 821.1,540.5 821.6,540.0 822.1,541.4 822.6,537.6 823.1,542.3 823.6,535.5 824.1,540.0 824.6,538.9 825.1,543.5 825.6,539.7 826.1,543.5 826.6,544.1 827.1,538.7 827.6,540.6 828.1,543.3 828.6,545.5 829.1,538.8 829.6,540.5 830.1,538.7 830.6,538.3 831.1,537.8 831.6,546.0 832.1,548.0 832.6,539.0 833.1,545.2 833.6,538.0 834.1,539.7 834.6,540.7 835.1,540.8 835.6,544.5 836.1,540.9 836.6,541.1 837.1,539.8 837.6,536.0 838.1,543.6 838.6,539.1 839.1,536.4 839.6,542.4 840.1,542.7 840.6,542.5 841.1,543.4 841.6,544.6 842.1,539.0 842.6,536.9 843.1,539.0 843.6,541.7 844.1,541.8 844.6,539.7 845.1,542.0 845.6,540.5 846.1,541.4 846.6,537.9 847.1,538.5 847.6,539.6 848.1,542.5 848.6,541.0 849.1,538.0 849.6,535.5 850.1,540.9 850.6,526.1 851.1,540.5 851.6,540.5 852.1,537.7 852.6,541.0 853.1,539.3 853.6,539.0 854.1,540.3 854.6,539.9 855.1,537.8 855.6,536.0 856.1,533.5 856.6,538.1 857.1,541.8 857.6,539.3 858.1,541.8 858.6,537.6 859.1,539.2 859.6,536.7 860.1,537.9 860.6,537.1 861.1,537.8 861.6,533.0 862.1,540.8 862.6,533.4 863.1,532.8 863.6,533.6 864.1,533.9 864.6,533.1 865.1,534.6 865.6,535.5 866.1,530.4 866.6,529.9 867.1,528.9 867.6,530.7 868.0,527.5 869.0,525.5 870.0,523.0 871.0,525.2 872.0,527.4 873.0,522.5 874.0,517.1 875.0,517.1 876.0,511.0 877.0,509.7 878.0,504.4 879.0,500.2 880.0,497.4 881.0,491.0 882.0,485.3 883.0,481.8 884.0,468.7 885.0,456.1 886.0,440.4 887.0,425.2 888.0,410.5 889.0,393.1 890.0,373.4 891.0,356.8 892.0,337.9 893.0,324.0 894.0,308.5 895.0,291.9 896.0,273.0 897.0,257.6 898.0,234.6 899.0,208.1 900.0,190.9 901.0,172.5 902.0,155.4 903.0,140.8 904.0,130.6 905.0,117.4 906.0,110.7 907.0,110.1 908.0,106.2 909.0,105.4 910.0,100.9 911.0,98.9 912.0,108.1 913.0,110.6 914.0,118.6 915.0,121.2 916.0,129.9 917.0,141.5 918.0,148.9 919.0,153.6 920.0,165.0 921.0,182.3 922.0,192.6 923.0,206.8 924.0,216.8 925.0,232.7 926.0,241.9 927.0,250.3 928.0,259.3 929.0,273.4 930.0,276.4 931.0,289.9 932.0,299.4 933.0,303.6 934.0,311.8 935.0,321.0 936.0,327.3 937.0,335.8 938.0,344.6 939.0,354.9 940.0,362.2 941.0,365.8 942.0,366.3 943.0,372.0 944.0,378.3 945.0,383.0 946.0,387.1 947.0,388.6 948.0,394.1 949.0,394.4 950.0,399.0 951.0,401.2 952.0,402.7 953.0,405.6 954.0,408.7 955.0,409.7 956.0,410.8 957.0,413.2 958.0,414.2 959.0,415.3 960.0,418.7 961.0,418.8 962.0,419.4 963.0,421.8 964.0,421.3 965.0,421.4 966.0,426.3 967.0,425.6 968.0,425.5 969.0,427.4 970.0,427.5 971.0,428.6 972.0,433.1 973.0,433.4 974.0,436.9 975.0,441.1 976.0,440.8 977.0,444.8 978.0,446.8 979.0,448.6 980.0,450.9 981.0,454.7 982.0,457.8 983.0,459.9 984.0,460.6 985.0,464.2 986.0,464.6 987.0,467.2 988.0,471.5 989.0,471.6 990.0,476.1 991.0,478.0 992.0,480.3 993.0,483.4 994.0,484.5 995.0,486.0 996.0,486.6 997.0,489.4 998.0,492.9 999.0,494.2 1000.0,495.5 1001.0,497.6 1002.0,499.9 1003.0,499.8 1004.0,501.7 1005.0,501.9 1006.0,503.5 1007.0,503.3 1008.0,505.5 1009.0,507.4 1010.0,506.8 1011.0,508.3 1012.0,509.6 1013.0,509.5 1014.0,511.0 1015.0,512.5 1016.0,512.9 1017.0,512.0 1018.0,512.6 1019.0,514.7 1020.0,515.0 1021.0,517.1 1022.0,515.7 1023.0,516.8 1024.0,516.7 1025.0,517.7 1026.0,518.0 1027.0,519.5 1028.0,518.5 1029.0,519.6 1030.0,519.4 1031.0,518.8 1032.0,522.2 1033.0,520.1 1034.0,521.0 1035.0,521.3 1036.0,521.2 1037.0,522.8 1038.0,523.7 1039.0,523.0 1040.0,523.1 1041.0,524.8 1042.0,523.0 1043.0,523.0 1044.0,524.7 1045.0,524.1 1046.0,524.4 1047.0,524.6 1048.0,524.9 1049.0,524.4 1050.0,525.3 1051.0,524.2 1052.0,525.7 1053.0,525.2 1054.0,525.4 1055.0,527.8 1056.0,526.7 1057.0,526.8 1058.0,526.9 1059.0,527.2 1060.0,526.8 1061.0,527.2 1062.0,528.3 1063.0,527.4 1064.0,528.6 1065.0,528.4 1066.0,529.3 1067.0,531.3 1068.0,530.1 1069.0,528.3 1070.0,529.1 1071.0,530.3 1072.0,529.5 1073.0,530.9 1074.0,531.0 1075.0,531.9 1076.0,531.1 1077.0,530.6 1078.0,529.4 1079.0,531.6 1080.0,531.4 1081.0,531.5 1082.0,531.2 1083.0,532.6 1084.0,533.1 1085.0,531.7 1086.0,533.5 1087.0,531.9 1088.0,533.3 1089.0,533.0 1090.0,532.8 1091.0,534.7 1092.0,529.9 1093.0,534.7 1094.0,534.7 1095.0,533.5 1096.0,536.6 1097.0,535.0 1098.0,534.3 1099.0,534.8 1100.0,534.9 1101.0,534.9 1102.0,535.0 1103.0,535.1 1104.0,533.3 1105.0,534.4 1106.0,535.8 1107.0,535.3 1108.0,533.7 1109.0,534.1 1110.0,536.3 1111.0,535.4 1112.0,537.3 1113.0,536.0 1114.0,534.1 1115.0,535.0 1116.0,535.9 1117.0,536.6 1118.0,535.8 1119.0,535.8 1120.0,535.7 1121.0,535.4 1122.0,535.9 1123.0,537.6 1124.0,536.7 1125.0,537.3 1126.0,537.2 1127.0,535.2 1128.0,537.3 1129.0,536.1 1130.0,536.2 1131.0,536.4 1132.0,536.6 1133.0,537.4 1134.0,536.6 1135.0,536.0 1136.0,537.7 1137.0,535.7 1138.0,537.5 1139.0,536.2 1140.0,537.2 1141.0,535.6 1142.0,535.7 1143.0,535.7 1144.0,535.3 1145.0,537.4 1146.0,540.0 1147.0,538.7 1148.0,538.4 1149.0,536.6 1150.0,536.6 1151.0,538.4 1152.0,537.0 1153.0,538.1 1154.0,538.2 1155.0,537.6 1156.0,539.0 1157.0,537.1 1158.0,537.3 1159.0,536.3 1160.0,537.1 1161.0,537.6 1162.0,536.9 1163.0,538.1 1164.0,537.9 1165.0,539.2 1166.0,538.8 1167.0,538.2 1168.0,537.3 1169.0,535.1 1170.0,536.8 1171.0,538.7 1172.0,538.4 1173.0,539.2 1174.0,540.0 1175.0,537.6 1176.0,539.9 1177.0,537.9 1178.0,539.2 1179.0,538.9 1180.0,537.7 1181.0,539.6 1182.0,538.3 1183.0,539.7 1184.0,538.9 1185.0,539.0 1186.0,538.8 1187.0,540.2 1188.0,539.3 1189.0,538.7 1190.0,540.8 1191.0,538.0 1192.0,538.6 1193.0,539.2 1194.0,539.6 1195.0,539.0 1196.0,540.0 1197.0,538.8 1198.0,539.2 1199.0,536.5 1200.0,539.4 1201.0,540.4 1202.0,539.1 1203.0,539.8 1204.0,537.9 1205.0,540.5 1206.0,540.2 1207.0,539.8 1208.0,539.9 1209.0,539.5 1210.0,537.0 1211.0,539.8 1212.0,538.2 1213.0,540.3 1214.0,540.3 1215.0,539.8 1216.0,538.0 1217.0,539.5 1218.0,539.3 1219.0,540.4 1220.0,540.0 1221.0,537.3 1222.0,541.2 1223.0,542.3 1224.0,540.2 1225.0,541.2 1226.0,541.6 1227.0,542.5 1228.0,539.7 1229.0,540.2 1230.0,540.6 1231.0,539.3 1232.0,539.0 1233.0,540.1 1234.0,539.2 1235.0,541.9 1235.5,539.8 1236.0,541.5 1236.5,540.4 1237.0,538.5 1237.5,540.3 1238.0,538.0 1238.5,538.8 1239.0,539.3 1239.5,541.7 1240.0,540.2 1240.5,539.7 1241.0,539.2 1241.5,540.3 1242.0,542.0 1242.5,539.2 1243.0,542.2 1243.5,541.2 1244.0,542.8 1244.5,540.3 1245.0,539.3 1245.5,539.2 1246.0,541.6 1246.5,539.7 1247.0,540.0 1247.5,539.7 1248.0,539.2 1248.5,539.8 1249.0,538.2 1249.5,541.7 1250.0,539.7 1250.5,539.9 1251.0,541.8 1251.5,540.0 1252.0,540.5 1252.5,541.5 1253.0,539.6 1253.5,540.4 1254.0,539.0 1254.5,540.7 1255.0,538.5 1255.5,539.7 1256.0,539.8 1256.5,538.9 1257.0,537.6 1257.5,540.2 1258.0,540.0 1258.5,540.2 1259.0,539.8 1259.5,545.4 1260.0,535.9 1260.5,538.0 1261.0,538.4 1261.5,540.1 1262.0,542.3 1262.5,541.6 1263.0,540.1 1263.5,540.8 1264.0,542.3 1264.5,541.0 1265.0,542.4 1265.5,542.1 1266.0,540.1 1266.5,541.4 1267.0,542.0 1267.5,541.5 1268.0,541.3 1268.5,539.8 1269.0,539.2 1269.5,539.4 1270.0,541.0 1270.5,541.0 1271.0,538.0 1271.5,540.1 1272.0,542.0 1272.5,539.2 1273.0,543.6 1273.5,538.4 1274.0,538.1 1274.5,539.4 1275.0,544.4 1275.5,540.0 1276.0,539.4 1276.5,539.9 1277.0,536.9 1277.5,541.3 1278.0,541.0 1278.5,538.9 1279.0,540.3 1279.5,538.8 1280.0,540.3 1280.5,541.1 1281.0,541.8 1281.5,540.6 1282.0,540.9 1282.5,539.2 1283.0,539.8 1283.5,542.9 1284.0,539.0 1284.5,540.9 1285.0,544.0 1285.5,537.5 1286.0,540.5 1286.5,539.9 1287.0,539.6 1287.5,542.0 1288.0,540.2 1288.5,540.0 1289.0,541.2 1289.5,539.9 1290.0,539.3 1290.5,540.0 1291.0,543.3 1291.5,540.9 1292.0,539.9 1292.5,535.3 1293.0,539.4 1293.5,539.7 1294.0,542.0 1294.5,539.4 1295.0,536.8 1295.5,540.3 1296.0,541.0 1296.5,540.2 1297.0,539.5 1297.5,541.0 1298.0,540.2 1298.5,542.0 1299.0,540.8 1299.5,540.5 1300.0,541.2 1300.5,541.9 1301.0,537.9 1301.5,540.3 1302.0,537.7 1302.5,542.6 1303.0,540.7 1303.5,541.0 1304.0,533.6 1304.5,539.2 1305.0,540.6 1305.5,539.6 1306.0,540.2 1306.5,539.8 1307.0,542.9 1307.5,543.9 1308.0,540.6 1308.5,540.5 1309.0,540.4 1309.5,538.3 1310.0,540.8 1310.5,540.4 1311.0,541.3 1311.5,543.3 1312.0,542.3 1312.5,541.6 1313.0,540.8 1313.5,538.1 1314.0,540.0 1314.5,540.8 1315.0,543.4 1315.5,539.5 1316.0,541.3 1316.5,544.4 1317.0,540.2 1317.5,540.2 1318.0,539.8 1318.5,540.1 1319.0,541.8 1319.5,541.2 1320.0,542.1 1320.5,540.8 1321.0,540.0 1321.5,539.8 1322.0,541.9 1322.5,538.1 1323.0,540.8 1323.5,544.1 1324.0,538.3 1324.5,539.0 1325.0,538.3 1325.5,540.6 1326.0,541.0 1326.5,541.7 1327.0,539.4 1327.5,539.1 1328.0,539.2 1328.5,539.1 1329.0,541.6 1329.5,539.5 1330.0,539.4 1330.5,540.6 1331.0,537.5 1331.5,544.0 1332.0,539.7 1332.5,541.0 1333.0,540.4 1333.5,540.4 1334.0,540.8 1334.5,540.3 1335.0,540.7 1335.5,542.9 1336.0,539.4 1336.5,539.5 1337.0,542.5 1337.5,539.7 1338.0,540.5 1338.5,539.8 1339.0,540.5 1339.5,542.0 1340.0,539.0 1340.5,543.6 1341.0,537.9 1341.5,543.7 1342.0,541.9 1342.5,539.4 1343.0,540.6 1343.5,539.2 1344.0,537.2 1344.5,539.3 1345.0,540.8 1345.5,542.4 1346.0,540.7 1346.5,542.4 1347.0,540.2 1347.5,545.7 1348.0,541.9 1348.5,541.6 1349.0,542.4 1349.5,539.4 1350.0,539.2 1350.5,544.2 1351.0,538.3 1351.5,541.3 1352.0,540.2 1352.5,539.7 1353.0,541.3 1353.5,540.5 1354.0,539.5 1354.5,541.7 1355.0,540.2 1355.5,538.9 1356.0,540.8 1356.5,541.0 1357.0,541.4 1357.5,541.6 1358.0,541.1 1358.5,543.1 1359.0,540.7 1359.5,541.9 1360.0,540.0 1360.5,537.4 1361.0,538.9 1361.5,541.4 1362.0,539.6 1362.5,540.6 1363.0,542.1 1363.5,539.5 1364.0,538.4 1364.5,539.4 1365.0,540.5 1365.5,542.4 1366.0,541.1 1366.5,539.4 1367.0,539.3 1367.5,539.1 1368.0,541.6 1368.5,545.6 1369.0,538.8 1369.5,537.4 1370.0,537.7 1370.5,537.8 1371.0,538.9 1371.5,541.5 1372.0,543.4 1372.5,543.4 1373.0,542.4 1373.5,543.4 1374.0,541.5 1374.5,536.4 1375.0,541.9 1375.5,540.5 1376.0,537.8 1376.5,542.4 1377.0,541.4 1377.5,542.0 1378.0,547.5 1378.5,539.6 1379.0,539.1 1379.5,539.1 1380.0,540.6 1380.5,542.5 1381.0,538.1 1381.5,544.6 1382.0,540.2 1382.5,541.3 1383.0,543.3 1383.5,536.2 1384.0,537.6 1384.5,541.5 1385.0,541.7 1385.5,540.4 1386.0,541.3 1386.5,536.7 1387.0,542.9 1387.5,542.5 1388.0,540.0 1388.5,542.0 1389.0,542.1 1389.5,541.8 1390.0,541.2 1390.5,538.5 1391.0,545.8 1391.5,539.0 1392.0,545.4 1392.5,543.0 1393.0,538.9 1393.5,539.8 1394.0,539.0 1394.5,538.8 1395.0,541.9 1395.5,542.7 1396.0,540.2 1396.5,542.7 1397.0,541.0 1397.5,537.0 1398.0,543.6 1398.5,546.1 1399.0,539.0 1399.5,538.7 1400.0,541.2 1400.5,540.2 1401.0,541.6 1401.5,541.9 1402.0,540.5 1402.5,539.1 1403.0,543.9 1403.5,544.4 1404.0,540.3 1404.5,542.1 1405.0,539.2 1405.5,540.6 1406.0,541.5 1406.5,540.7 1407.0,533.9 1407.5,540.8 1408.0,542.2 1408.5,544.3 1409.0,539.3 1409.5,537.2 1410.0,540.3 1410.5,540.4 1411.0,540.9 1411.5,540.0 1412.0,541.3 1412.5,539.8 1413.0,539.9 1413.5,540.3 1414.0,536.6 1414.5,541.9 1415.0,541.4 1415.5,542.6 1416.0,541.1 1416.5,540.4 1417.0,536.7 1417.5,541.2 1418.0,541.2 1418.5,540.4 1419.0,542.8 1419.5,541.0 1420.0,545.4 1420.5,539.2 1421.0,539.1 1421.5,538.9 1422.0,536.8 1422.5,539.0 1423.0,537.7 1423.5,538.9 1424.0,540.2 1424.5,539.7 1425.0,538.9 1425.5,539.0 1426.0,543.9 1426.5,543.3 1427.0,542.4 1427.5,543.8 1428.0,542.4 1428.5,542.9 1429.0,546.9 1429.5,541.0 1430.0,537.9 1430.5,537.4 1431.0,536.9 1431.5,537.4 1432.0,546.9 1432.5,536.4 1433.0,540.1 1433.5,544.4 1434.0,542.8 1434.5,542.0 1435.0,542.8 1435.5,538.2 1436.0,541.4 1436.5,535.8 1437.0,536.5 1437.5,545.1 1438.0,542.0 1438.5,538.5 1439.0,539.6 1439.5,540.8 1440.0,541.0 1440.5,541.8 1441.0,542.2 1441.5,539.1 1442.0,540.5 1442.5,542.8 1443.0,545.5 1443.5,539.9 1444.0,541.2 1444.5,547.4 1445.0,540.4 1445.5,543.9 1446.0,540.0 1446.5,541.8 1447.0,537.9 1447.5,543.8 1448.0,536.6 1448.5,540.4 1449.0,528.8 1449.5,539.5 1450.0,540.3 1450.5,545.4 1451.0,535.6 1451.5,536.7 1452.0,539.8 1452.5,541.3 1453.0,541.6 1453.5,541.2 1454.0,540.0 1454.5,542.8 1455.0,543.5 1455.5,539.6 1456.0,541.6 1456.5,541.9 1457.0,534.1 1457.5,531.5 1458.0,539.2 1458.5,539.5 1459.0,539.7 1459.5,540.6 1460.0,540.1 1460.5,539.2 1461.0,542.9 1461.5,544.1 1462.0,542.5 1462.5,542.5 1463.0,539.1 1463.5,538.2 1464.0,540.5 1464.5,543.7 1465.0,544.1 1465.5,545.5 1466.0,540.8 1466.5,536.4 1467.0,542.5 1467.5,541.7 1468.0,540.2 1468.5,540.8 1469.0,539.1 1469.5,541.7 1470.0,541.4 1470.5,541.1 1471.0,536.9 1471.5,540.5 1472.0,537.8 1472.5,541.1 1473.0,537.8 1473.5,540.4 1474.0,543.6 1474.5,544.9 1475.0,534.4 1475.5,543.0 1476.0,540.8 1476.5,544.7 1477.0,539.8 1477.5,542.8 1478.0,535.7 1478.5,542.5 1479.0,538.5 1479.5,533.1 1480.0,536.2 1480.5,538.2 1481.0,543.8 1481.5,536.4 1482.0,535.4 1482.5,541.5 1483.0,540.3 1483.5,542.0 1484.0,545.7 1484.5,540.3 1485.0,539.1 1485.5,539.3 1486.0,537.0 1486.5,538.6 1487.0,539.7 1487.5,536.2 1488.0,543.1 1488.5,540.1 1489.0,539.0 1489.5,537.6 1490.0,543.7 1490.5,536.6 1491.0,544.5 1491.5,542.6 1492.0,536.4 1492.5,546.6 1493.0,541.3 1493.5,535.6 1494.0,537.6 1494.5,539.9 1495.0,540.8 1495.5,538.8 1496.0,545.7 1496.5,535.5 1497.0,543.1 1497.5,542.5 1498.0,537.0 1498.5,538.1 1499.0,539.3 1499.5,538.9 1500.0,540.1 1500.5,545.0 1501.0,546.6 1501.5,537.3 1502.0,538.2 1502.5,540.0 1503.0,535.2 1503.5,542.1 1504.0,542.4 1504.5,537.8 1505.0,543.2 1505.5,543.4 1506.0,540.6 1506.5,542.6 1507.0,539.5 1507.5,537.2 1508.0,542.6 1508.5,539.7 1509.0,537.4 1509.5,541.4 1510.0,539.4 1510.5,536.2 1511.0,542.8 1511.5,538.1 1512.0,531.8 1512.5,541.1 1513.0,545.5 1513.5,543.2 1514.0,541.9 1514.5,536.3 1515.0,538.2 1515.5,541.3 1516.0,547.5 1516.5,541.3 1517.0,533.0 1517.5,548.0 1518.0,539.2 1518.5,538.3 1519.0,537.1 1519.5,537.4 1520.0,536.2 1520.5,535.1 1521.0,538.0 1521.5,537.8 1522.0,541.0 1522.5,540.8 1523.0,543.5 1523.5,536.6 1524.0,548.0 1524.5,537.2 1525.0,546.7 1525.5,539.3 1526.0,542.5 1526.5,530.1 1527.0,539.2 1527.5,542.1 1528.0,535.4 1528.5,533.9 1529.0,543.5 1529.5,540.6 1530.0,528.3 1530.5,548.0 1531.0,548.0 1531.5,541.1 1532.0,534.4 1532.5,545.7 1533.0,541.8 1533.5,542.4 1534.0,536.7 1534.5,539.1 1535.0,540.8 1535.5,544.4 1536.0,547.7 1536.5,538.2 1537.0,534.1 1537.5,541.8 1538.0,544.0 1538.5,535.9 1539.0,546.7 1539.5,548.0 1540.0,537.9 1540.5,538.3 1541.0,535.6 1541.5,542.8 1542.0,540.4 1542.5,542.5 1543.0,535.1 1543.5,540.4 1544.0,540.1 1544.5,539.6 1545.0,540.4 1545.5,543.8 1546.0,538.0 1546.5,538.6 1547.0,539.0 1547.5,543.8 1548.0,541.3 1548.5,540.3 1549.0,548.0 1549.5,538.1 1550.0,546.7 1550.5,547.6 1551.0,536.4 1551.5,545.2 1552.0,541.1 1552.5,542.5 1553.0,547.6 1553.5,544.0 1554.0,532.1 1554.5,534.3 1555.0,544.3 1555.5,537.6 1556.0,541.9 1556.5,531.7 1557.0,546.5 1557.5,545.4 1558.0,540.2 1558.5,541.7 1559.0,537.3 1559.5,537.0 1560.0,539.1 1560.5,542.4 1561.0,539.8 1561.5,542.3 1562.0,548.0 1562.5,536.8 1563.0,547.5 1563.5,545.9 1564.0,539.8 1564.5,537.1 1565.0,539.7 1565.5,544.5 1566.0,532.1 1566.5,545.7 1567.0,534.3 1567.5,545.6 1568.0,540.2 1568.5,538.7 1569.0,539.7 1569.5,542.5 1570.0,538.9 1570.5,539.7 1571.0,545.6 1571.5,534.9 1572.0,540.6 1572.5,540.0 1573.0,548.0 1573.5,539.0 1574.0,535.1 1574.5,539.1 1575.0,540.2 1575.5,538.5 1576.0,542.9 1576.5,539.0 1577.0,544.6 1577.5,536.5 1578.0,536.8 1578.5,538.3 1579.0,538.2 1579.5,539.2 1580.0,545.2 1580.5,544.5 1581.0,539.4 1581.5,544.2 1582.0,544.5 1582.5,545.2 1583.0,538.3 1583.5,539.9 1584.0,537.5 1584.5,533.1 1585.0,539.3 1585.5,543.6 1586.0,539.5 1586.5,536.9 1587.0,534.4 1587.5,541.1 1588.0,537.4 1588.5,548.0 1589.0,544.7 1589.5,547.4 1590.0,538.5 1590.5,546.8 1591.0,542.1 1591.5,540.1 1592.0,546.9 1592.5,548.0 1593.0,535.5 1593.5,537.6 1594.0,535.4 1594.5,539.5 1595.0,533.3 1595.5,538.0 1596.0,547.9 1596.5,537.6 1597.0,539.4 1597.5,547.3 1598.0,545.0 1598.5,539.0 1599.0,548.0 1599.5,541.1 1600.0,548.0 1600.5,537.4 1601.0,536.9 1601.5,548.0 1602.0,548.0 1602.5,544.8 1603.0,543.4 1603.5,547.3 1604.0,532.2 1604.5,542.0 1605.0,548.0 1605.5,540.5 1606.0,546.6 1606.5,541.8 1607.0,535.1 1607.5,547.7 1608.0,541.0 1608.5,544.4 1609.0,541.9 1609.5,532.7 1610.0,532.6 1610.5,548.0 1611.0,530.7 1611.5,523.6 1612.0,545.9 1612.5,535.0 1613.0,543.9 1613.5,537.8 1614.0,548.0 1614.5,533.5 1615.0,548.0 1615.5,548.0 1616.0,539.8 1616.5,533.9 1617.0,542.1 1617.5,535.0 1618.0,531.6 1618.5,538.6 1619.0,516.3 1619.5,531.9 1620.0,544.2 1620.5,548.0 1621.0,545.0 1621.5,541.4 1622.0,528.2 1622.5,526.2 1623.0,548.0 1623.5,524.2 1624.0,548.0 1624.5,548.0 1625.0,548.0 1625.5,529.2 1626.0,548.0 1626.5,535.6 1627.0,538.4 1627.5,543.9 1628.0,537.8 1628.5,545.6 1629.0,538.3 1629.5,542.3 1630.0,514.0 1630.5,548.0 1631.0,536.0 1631.5,544.5 1632.0,525.8 1632.5,517.1 1633.0,538.9 1633.5,531.2 1634.0,548.0 1634.5,543.0 1635.0,517.1 1635.5,548.0 1636.0,532.4 1636.5,531.7 1637.0,533.2 1637.5,537.7 1638.0,538.1 1638.5,548.0 1639.0,538.7 1639.5,548.0 1640.0,548.0 1640.5,539.4 1641.0,534.3 1641.5,548.0 1642.0,533.0 1642.5,543.7 1643.0,548.0 1643.5,538.1 1644.0,536.6 1644.5,543.8 1645.0,541.0 1645.5,521.6 1646.0,547.2 1646.5,548.0 1647.0,544.4 1647.5,537.2 1648.0,541.8 1648.5,532.0 1649.0,537.7 1649.5,537.3 1650.0,548.0 1650.5,528.4 1651.0,548.0 1651.5,526.5 1652.0,548.0 1652.5,548.0 1653.0,544.3 1653.5,524.0 1654.0,548.0 1654.5,530.1 1655.0,541.6 1655.5,548.0 1656.0,532.7 1656.5,543.8 1657.0,546.6 1657.5,530.8 1658.0,536.7 1658.5,537.3 1659.0,539.6 1659.5,515.3 1660.0,548.0 1660.5,544.3 1661.0,547.7 1661.5,546.7 1662.0,548.0 1662.5,544.5 1663.0,538.8 1663.5,542.4 1664.0,548.0 1664.5,548.0 1665.0,539.9 1665.5,548.0 1666.0,538.0 1666.5,541.0 1667.0,523.5" fill="none" stroke="#9467bd" stroke-width="1.5" stroke-linejoin="round"/><polyline points="696.6,541.0 697.1,532.0 697.6,534.4 698.1,541.0 698.6,541.5 699.1,537.4 699.6,540.6 700.1,538.2 700.6,535.7 701.1,539.0 701.6,537.3 702.1,548.0 702.6,537.5 703.1,541.3 703.6,543.7 704.1,541.2 704.6,544.5 705.1,544.4 705.6,547.1 706.1,542.8 706.6,545.0 707.1,543.3 707.6,535.2 708.1,540.6 708.6,544.8 709.1,539.4 709.6,537.7 710.1,540.7 710.6,540.7 711.1,541.1 711.6,543.9 712.1,537.6 712.6,539.4 713.1,541.1 713.6,541.0 714.1,541.3 714.6,536.3 715.1,541.7 715.6,546.0 716.1,540.4 716.6,538.1 717.1,538.8 717.6,543.6 718.1,545.8 718.6,534.6 719.1,543.9 719.6,540.5 720.1,541.4 720.6,542.9 721.1,542.2 721.6,544.3 722.1,543.7 722.6,542.5 723.1,541.4 723.6,533.7 724.1,547.9 724.6,537.7 725.1,540.9 725.6,542.2 726.1,545.3 726.6,541.3 727.1,544.2 727.6,540.3 728.1,540.1 728.6,544.7 729.1,537.7 729.6,541.6 730.1,540.9 730.6,540.2 731.1,542.1 731.6,537.9 732.1,536.2 732.6,540.3 733.1,538.1 733.6,535.3 734.1,538.7 734.6,541.3 735.1,537.2 735.6,540.2 736.1,541.2 736.6,544.8 737.1,540.2 737.6,543.1 738.1,540.0 738.6,546.7 739.1,544.1 739.6,536.6 740.1,535.8 740.6,539.7 741.1,540.0 741.6,547.4 742.1,538.1 742.6,542.8 743.1,547.1 743.6,543.8 744.1,544.0 744.6,539.1 745.1,540.5 745.6,534.2 746.1,536.8 746.6,540.7 747.1,539.4 747.6,544.3 748.1,538.5 748.6,541.8 749.1,540.3 749.6,539.8 750.1,540.6 750.6,541.9 751.1,536.2 751.6,538.6 752.1,547.7 752.6,542.4 753.1,541.2 753.6,542.3 754.1,540.3 754.6,538.4 755.1,540.3 755.6,541.1 756.1,537.8 756.6,539.6 757.1,539.8 757.6,534.9 758.1,537.6 758.6,543.3 759.1,536.9 759.6,542.5 760.1,539.9 760.6,545.6 761.1,537.8 761.6,545.3 762.1,539.4 762.6,534.9 763.1,539.0 763.6,540.6 764.1,543.4 764.6,541.6 765.1,538.4 765.6,547.1 766.1,543.8 766.6,533.9 767.1,542.2 767.6,538.0 768.1,539.3 768.6,543.4 769.1,541.4 769.6,533.1 770.1,541.9 770.6,541.1 771.1,539.5 771.6,542.5 772.1,541.7 772.6,539.6 773.1,541.5 773.6,541.3 774.1,539.2 774.6,536.1 775.1,541.0 775.6,542.4 776.1,532.9 776.6,538.1 777.1,545.7 777.6,542.0 778.1,545.0 778.6,538.6 779.1,543.7 779.6,541.9 780.1,536.2 780.6,542.3 781.1,540.6 781.6,539.6 782.1,537.9 782.6,537.8 783.1,536.6 783.6,542.3 784.1,539.4 784.6,545.1 785.1,540.6 785.6,541.2 786.1,536.1 786.6,539.8 787.1,541.6 787.6,541.7 788.1,543.1 788.6,542.0 789.1,542.5 789.6,540.8 790.1,542.3 790.6,540.7 791.1,538.1 791.6,547.4 792.1,542.8 792.6,544.1 793.1,535.5 793.6,536.5 794.1,539.5 794.6,540.6 795.1,543.2 795.6,538.2 796.1,540.5 796.6,539.7 797.1,540.5 797.6,548.0 798.1,545.0 798.6,542.1 799.1,539.4 799.6,543.3 800.1,540.3 800.6,541.6 801.1,543.6 801.6,539.1 802.1,543.6 802.6,544.0 803.1,536.5 803.6,537.0 804.1,540.1 804.6,537.7 805.1,542.4 805.6,541.3 806.1,539.6 806.6,538.4 807.1,539.1 807.6,543.9 808.1,538.1 808.6,543.3 809.1,540.7 809.6,533.9 810.1,538.0 810.6,541.8 811.1,539.6 811.6,542.3 812.1,542.2 812.6,542.6 813.1,541.3 813.6,540.5 814.1,538.8 814.6,534.9 815.1,537.5 815.6,539.7 816.1,543.3 816.6,537.2 817.1,540.0 817.6,536.4 818.1,540.1 818.6,536.1 819.1,541.8 819.6,541.3 820.1,540.9 820.6,541.0 821.1,539.6 821.6,539.9 822.1,545.4 822.6,543.4 823.1,542.6 823.6,539.2 824.1,541.5 824.6,539.0 825.1,539.1 825.6,540.1 826.1,545.6 826.6,535.8 827.1,539.3 827.6,543.0 828.1,539.5 828.6,541.5 829.1,540.1 829.6,542.2 830.1,535.0 830.6,540.8 831.1,539.1 831.6,541.7 832.1,538.0 832.6,536.5 833.1,539.4 833.6,541.9 834.1,539.3 834.6,540.3 835.1,537.8 835.6,539.2 836.1,539.0 836.6,540.3 837.1,540.4 837.6,539.9 838.1,536.8 838.6,540.0 839.1,538.6 839.6,541.2 840.1,540.9 840.6,543.0 841.1,540.6 841.6,541.8 842.1,545.5 842.6,542.4 843.1,543.9 843.6,541.0 844.1,541.2 844.6,537.2 845.1,539.9 845.6,541.6 846.1,541.2 846.6,541.1 847.1,541.2 847.6,538.9 848.1,541.3 848.6,539.2 849.1,537.4 849.6,541.0 850.1,539.7 850.6,535.7 851.1,538.3 851.6,540.3 852.1,538.0 852.6,540.0 853.1,541.3 853.6,537.3 854.1,541.5 854.6,540.9 855.1,540.1 855.6,537.1 856.1,537.4 856.6,540.2 857.1,538.6 857.6,539.2 858.1,536.2 858.6,537.2 859.1,539.4 859.6,535.6 860.1,540.4 860.6,538.0 861.1,541.4 861.6,534.6 862.1,536.9 862.6,534.7 863.1,529.3 863.6,534.5 864.1,534.1 864.6,535.5 865.1,533.1 865.6,534.1 866.1,531.1 866.6,530.6 867.1,530.5 867.6,531.0 868.0,530.4 869.0,528.8 870.0,528.0 871.0,524.3 872.0,524.9 873.0,521.2 874.0,517.2 875.0,512.3 876.0,511.5 877.0,508.8 878.0,504.7 879.0,498.6 880.0,496.8 881.0,491.6 882.0,486.1 883.0,481.5 884.0,468.1 885.0,454.4 886.0,440.4 887.0,427.3 888.0,408.1 889.0,390.1 890.0,373.6 891.0,352.6 892.0,338.1 893.0,321.3 894.0,309.8 895.0,283.4 896.0,265.5 897.0,246.4 898.0,228.7 899.0,209.5 900.0,185.1 901.0,164.7 902.0,148.7 903.0,138.8 904.0,123.7 905.0,110.6 906.0,109.4 907.0,100.4 908.0,100.3 909.0,100.1 910.0,100.1 911.0,101.6 912.0,99.0 913.0,108.4 914.0,108.3 915.0,116.6 916.0,129.8 917.0,134.1 918.0,144.1 919.0,145.6 920.0,164.6 921.0,176.9 922.0,187.8 923.0,198.9 924.0,215.9 925.0,230.2 926.0,238.2 927.0,245.4 928.0,260.9 929.0,265.2 930.0,276.0 931.0,284.3 932.0,293.5 933.0,303.5 934.0,311.7 935.0,315.2 936.0,328.4 937.0,334.5 938.0,338.1 939.0,351.6 940.0,358.8 941.0,363.9 942.0,369.1 943.0,371.6 944.0,376.4 945.0,381.4 946.0,383.6 947.0,388.5 948.0,391.5 949.0,396.1 950.0,396.0 951.0,398.8 952.0,401.7 953.0,404.4 954.0,406.6 955.0,408.7 956.0,411.0 957.0,409.6 958.0,413.6 959.0,413.0 960.0,414.3 961.0,417.0 962.0,418.1 963.0,420.8 964.0,420.9 965.0,422.4 966.0,421.8 967.0,424.6 968.0,425.6 969.0,425.3 970.0,428.9 971.0,428.9 972.0,429.2 973.0,432.9 974.0,434.2 975.0,440.8 976.0,441.2 977.0,443.3 978.0,447.2 979.0,447.6 980.0,452.5 981.0,454.3 982.0,455.9 983.0,458.5 984.0,461.2 985.0,464.2 986.0,465.6 987.0,468.8 988.0,469.1 989.0,473.0 990.0,476.0 991.0,476.5 992.0,478.3 993.0,481.5 994.0,484.6 995.0,487.4 996.0,488.7 997.0,489.4 998.0,491.6 999.0,495.5 1000.0,495.9 1001.0,498.5 1002.0,497.9 1003.0,498.2 1004.0,500.8 1005.0,501.0 1006.0,503.3 1007.0,504.2 1008.0,504.5 1009.0,505.6 1010.0,507.4 1011.0,506.9 1012.0,508.7 1013.0,511.7 1014.0,509.9 1015.0,510.6 1016.0,513.9 1017.0,512.7 1018.0,512.9 1019.0,513.9 1020.0,515.5 1021.0,516.3 1022.0,516.0 1023.0,516.7 1024.0,516.4 1025.0,517.0 1026.0,516.6 1027.0,518.4 1028.0,517.7 1029.0,518.5 1030.0,519.3 1031.0,519.2 1032.0,521.2 1033.0,520.8 1034.0,519.6 1035.0,520.8 1036.0,521.5 1037.0,521.0 1038.0,522.1 1039.0,523.0 1040.0,522.4 1041.0,522.2 1042.0,523.3 1043.0,522.2 1044.0,523.4 1045.0,523.9 1046.0,524.5 1047.0,522.9 1048.0,522.9 1049.0,525.7 1050.0,525.1 1051.0,525.9 1052.0,524.8 1053.0,525.9 1054.0,525.4 1055.0,526.4 1056.0,527.3 1057.0,525.7 1058.0,526.9 1059.0,527.4 1060.0,528.1 1061.0,527.4 1062.0,527.0 1063.0,528.2 1064.0,526.6 1065.0,527.2 1066.0,528.5 1067.0,528.3 1068.0,529.2 1069.0,528.8 1070.0,530.2 1071.0,530.3 1072.0,528.0 1073.0,529.8 1074.0,529.5 1075.0,530.9 1076.0,530.2 1077.0,530.8 1078.0,532.5 1079.0,531.6 1080.0,531.4 1081.0,531.6 1082.0,530.9 1083.0,531.4 1084.0,534.3 1085.0,532.7 1086.0,532.5 1087.0,532.5 1088.0,532.7 1089.0,533.9 1090.0,532.9 1091.0,533.4 1092.0,535.0 1093.0,537.4 1094.0,534.9 1095.0,534.5 1096.0,536.4 1097.0,535.0 1098.0,535.4 1099.0,534.8 1100.0,534.1 1101.0,534.2 1102.0,535.9 1103.0,534.0 1104.0,533.6 1105.0,535.3 1106.0,533.4 1107.0,534.8 1108.0,535.8 1109.0,533.8 1110.0,535.2 1111.0,535.5 1112.0,533.7 1113.0,534.1 1114.0,535.5 1115.0,535.9 1116.0,535.4 1117.0,535.3 1118.0,534.8 1119.0,537.6 1120.0,535.4 1121.0,535.5 1122.0,536.0 1123.0,535.7 1124.0,535.3 1125.0,537.2 1126.0,537.1 1127.0,536.2 1128.0,536.4 1129.0,536.3 1130.0,536.0 1131.0,534.6 1132.0,536.8 1133.0,536.3 1134.0,535.8 1135.0,536.9 1136.0,537.0 1137.0,536.5 1138.0,536.4 1139.0,537.5 1140.0,536.4 1141.0,536.6 1142.0,536.7 1143.0,536.2 1144.0,538.2 1145.0,536.4 1146.0,537.6 1147.0,537.3 1148.0,537.5 1149.0,538.2 1150.0,537.0 1151.0,535.7 1152.0,537.2 1153.0,536.4 1154.0,538.2 1155.0,538.2 1156.0,537.6 1157.0,538.1 1158.0,538.3 1159.0,537.1 1160.0,537.3 1161.0,537.1 1162.0,537.8 1163.0,538.1 1164.0,538.3 1165.0,537.1 1166.0,538.1 1167.0,537.0 1168.0,537.2 1169.0,536.2 1170.0,538.5 1171.0,537.0 1172.0,539.2 1173.0,537.1 1174.0,537.6 1175.0,537.2 1176.0,540.0 1177.0,537.0 1178.0,538.6 1179.0,538.7 1180.0,540.0 1181.0,539.3 1182.0,537.6 1183.0,537.1 1184.0,538.2 1185.0,539.4 1186.0,538.2 1187.0,540.2 1188.0,539.1 1189.0,539.5 1190.0,537.9 1191.0,540.4 1192.0,539.4 1193.0,538.6 1194.0,538.4 1195.0,540.3 1196.0,539.6 1197.0,541.2 1198.0,538.3 1199.0,539.6 1200.0,539.6 1201.0,539.8 1202.0,537.7 1203.0,539.4 1204.0,540.2 1205.0,538.3 1206.0,538.8 1207.0,539.5 1208.0,540.4 1209.0,539.4 1210.0,538.9 1211.0,539.9 1212.0,539.6 1213.0,538.6 1214.0,540.4 1215.0,538.8 1216.0,540.0 1217.0,540.9 1218.0,538.8 1219.0,537.9 1220.0,540.5 1221.0,540.5 1222.0,538.5 1223.0,539.6 1224.0,541.7 1225.0,540.7 1226.0,539.4 1227.0,540.4 1228.0,537.6 1229.0,540.3 1230.0,539.3 1231.0,539.9 1232.0,539.5 1233.0,539.8 1234.0,539.9 1235.0,541.3 1235.5,538.6 1236.0,540.5 1236.5,541.2 1237.0,538.2 1237.5,540.6 1238.0,538.3 1238.5,542.4 1239.0,539.6 1239.5,539.8 1240.0,540.8 1240.5,538.7 1241.0,541.2 1241.5,539.9 1242.0,540.6 1242.5,539.0 1243.0,541.2 1243.5,539.8 1244.0,539.9 1244.5,542.4 1245.0,536.4 1245.5,539.8 1246.0,539.5 1246.5,539.1 1247.0,540.5 1247.5,540.6 1248.0,542.7 1248.5,540.7 1249.0,540.2 1249.5,539.4 1250.0,540.0 1250.5,539.8 1251.0,539.9 1251.5,539.1 1252.0,539.7 1252.5,539.9 1253.0,539.1 1253.5,542.0 1254.0,540.6 1254.5,539.3 1255.0,540.3 1255.5,541.2 1256.0,540.5 1256.5,540.3 1257.0,540.0 1257.5,537.7 1258.0,538.4 1258.5,540.7 1259.0,539.9 1259.5,537.7 1260.0,540.7 1260.5,539.2 1261.0,540.5 1261.5,541.3 1262.0,540.4 1262.5,540.1 1263.0,538.6 1263.5,541.1 1264.0,538.5 1264.5,540.4 1265.0,540.4 1265.5,541.4 1266.0,542.8 1266.5,540.1 1267.0,541.2 1267.5,540.1 1268.0,540.6 1268.5,542.9 1269.0,541.0 1269.5,540.4 1270.0,540.4 1270.5,540.2 1271.0,540.4 1271.5,541.4 1272.0,540.5 1272.5,541.1 1273.0,540.4 1273.5,540.3 1274.0,540.4 1274.5,535.0 1275.0,541.8 1275.5,545.5 1276.0,539.8 1276.5,541.1 1277.0,540.1 1277.5,540.6 1278.0,540.0 1278.5,541.0 1279.0,541.9 1279.5,537.9 1280.0,538.8 1280.5,541.8 1281.0,540.9 1281.5,538.8 1282.0,540.2 1282.5,541.9 1283.0,539.8 1283.5,539.3 1284.0,540.8 1284.5,540.0 1285.0,541.1 1285.5,538.6 1286.0,537.7 1286.5,540.2 1287.0,541.1 1287.5,539.3 1288.0,540.1 1288.5,540.2 1289.0,541.6 1289.5,541.3 1290.0,541.7 1290.5,541.4 1291.0,540.6 1291.5,541.2 1292.0,534.9 1292.5,540.6 1293.0,541.0 1293.5,540.3 1294.0,539.0 1294.5,538.8 1295.0,541.9 1295.5,541.8 1296.0,541.8 1296.5,540.7 1297.0,540.4 1297.5,535.4 1298.0,538.4 1298.5,541.6 1299.0,547.9 1299.5,542.6 1300.0,541.7 1300.5,540.7 1301.0,539.7 1301.5,542.3 1302.0,537.9 1302.5,537.8 1303.0,544.0 1303.5,542.6 1304.0,538.1 1304.5,541.0 1305.0,540.6 1305.5,535.2 1306.0,540.2 1306.5,540.8 1307.0,543.9 1307.5,540.8 1308.0,540.0 1308.5,541.8 1309.0,538.4 1309.5,542.0 1310.0,538.6 1310.5,540.0 1311.0,541.4 1311.5,539.7 1312.0,538.3 1312.5,539.5 1313.0,542.7 1313.5,539.3 1314.0,541.1 1314.5,539.4 1315.0,539.3 1315.5,540.8 1316.0,539.1 1316.5,541.6 1317.0,538.8 1317.5,541.3 1318.0,539.5 1318.5,540.2 1319.0,541.5 1319.5,538.5 1320.0,542.9 1320.5,539.1 1321.0,541.1 1321.5,540.6 1322.0,540.5 1322.5,541.7 1323.0,539.9 1323.5,542.4 1324.0,545.0 1324.5,540.7 1325.0,542.9 1325.5,538.9 1326.0,540.8 1326.5,540.6 1327.0,542.5 1327.5,539.2 1328.0,541.8 1328.5,542.5 1329.0,542.9 1329.5,541.9 1330.0,538.8 1330.5,539.6 1331.0,540.6 1331.5,541.5 1332.0,540.9 1332.5,538.3 1333.0,540.0 1333.5,540.3 1334.0,538.1 1334.5,540.9 1335.0,540.4 1335.5,543.2 1336.0,541.7 1336.5,541.5 1337.0,541.1 1337.5,540.0 1338.0,541.8 1338.5,540.1 1339.0,539.2 1339.5,541.6 1340.0,540.6 1340.5,540.0 1341.0,543.1 1341.5,538.7 1342.0,541.5 1342.5,540.5 1343.0,543.5 1343.5,538.9 1344.0,539.8 1344.5,540.9 1345.0,542.1 1345.5,539.9 1346.0,546.4 1346.5,539.4 1347.0,539.4 1347.5,539.4 1348.0,538.5 1348.5,541.0 1349.0,540.1 1349.5,539.4 1350.0,539.7 1350.5,542.2 1351.0,540.9 1351.5,541.5 1352.0,540.2 1352.5,540.3 1353.0,538.8 1353.5,539.2 1354.0,538.5 1354.5,541.3 1355.0,538.0 1355.5,537.2 1356.0,535.0 1356.5,539.6 1357.0,548.0 1357.5,537.5 1358.0,544.8 1358.5,540.5 1359.0,541.0 1359.5,540.9 1360.0,537.6 1360.5,539.1 1361.0,539.7 1361.5,541.9 1362.0,541.0 1362.5,540.2 1363.0,539.8 1363.5,540.7 1364.0,543.8 1364.5,539.9 1365.0,540.5 1365.5,542.0 1366.0,539.5 1366.5,539.1 1367.0,541.0 1367.5,535.8 1368.0,542.2 1368.5,540.7 1369.0,540.1 1369.5,540.2 1370.0,538.4 1370.5,541.8 1371.0,542.4 1371.5,532.9 1372.0,540.7 1372.5,539.7 1373.0,539.2 1373.5,538.7 1374.0,539.5 1374.5,542.4 1375.0,541.1 1375.5,540.5 1376.0,539.4 1376.5,537.7 1377.0,542.4 1377.5,539.9 1378.0,540.3 1378.5,540.1 1379.0,544.5 1379.5,543.0 1380.0,541.2 1380.5,542.3 1381.0,541.6 1381.5,541.4 1382.0,539.7 1382.5,546.7 1383.0,543.4 1383.5,542.8 1384.0,539.3 1384.5,545.4 1385.0,538.7 1385.5,539.5 1386.0,540.5 1386.5,543.2 1387.0,540.8 1387.5,541.0 1388.0,541.7 1388.5,547.1 1389.0,542.3 1389.5,542.7 1390.0,544.0 1390.5,540.5 1391.0,542.3 1391.5,543.0 1392.0,537.5 1392.5,539.7 1393.0,536.7 1393.5,536.8 1394.0,541.9 1394.5,539.8 1395.0,540.4 1395.5,540.1 1396.0,539.7 1396.5,540.9 1397.0,539.0 1397.5,538.9 1398.0,545.0 1398.5,540.0 1399.0,539.8 1399.5,541.8 1400.0,537.7 1400.5,540.0 1401.0,537.9 1401.5,537.5 1402.0,538.0 1402.5,541.7 1403.0,540.7 1403.5,540.9 1404.0,543.2 1404.5,541.3 1405.0,539.4 1405.5,544.1 1406.0,539.7 1406.5,543.4 1407.0,543.7 1407.5,540.2 1408.0,543.3 1408.5,538.8 1409.0,539.1 1409.5,540.0 1410.0,542.2 1410.5,540.9 1411.0,538.2 1411.5,537.3 1412.0,542.5 1412.5,545.4 1413.0,541.5 1413.5,540.6 1414.0,540.2 1414.5,539.2 1415.0,543.1 1415.5,543.2 1416.0,543.4 1416.5,539.6 1417.0,541.3 1417.5,539.3 1418.0,539.7 1418.5,539.4 1419.0,541.1 1419.5,540.0 1420.0,541.9 1420.5,539.9 1421.0,540.4 1421.5,540.2 1422.0,540.0 1422.5,540.0 1423.0,541.0 1423.5,541.2 1424.0,541.7 1424.5,544.6 1425.0,538.9 1425.5,537.5 1426.0,544.5 1426.5,536.4 1427.0,537.8 1427.5,539.6 1428.0,540.7 1428.5,540.5 1429.0,542.2 1429.5,542.0 1430.0,541.2 1430.5,539.7 1431.0,544.9 1431.5,543.5 1432.0,543.0 1432.5,542.3 1433.0,543.6 1433.5,542.0 1434.0,540.6 1434.5,542.9 1435.0,538.9 1435.5,539.8 1436.0,541.4 1436.5,538.0 1437.0,542.5 1437.5,541.3 1438.0,543.6 1438.5,544.6 1439.0,536.4 1439.5,541.6 1440.0,546.6 1440.5,540.6 1441.0,539.9 1441.5,543.4 1442.0,541.3 1442.5,537.1 1443.0,538.6 1443.5,541.2 1444.0,544.1 1444.5,537.0 1445.0,537.4 1445.5,541.5 1446.0,541.2 1446.5,538.6 1447.0,537.7 1447.5,537.6 1448.0,539.8 1448.5,541.1 1449.0,540.6 1449.5,541.6 1450.0,539.6 1450.5,537.0 1451.0,541.8 1451.5,543.1 1452.0,541.0 1452.5,538.6 1453.0,543.5 1453.5,540.8 1454.0,542.7 1454.5,543.6 1455.0,537.3 1455.5,540.4 1456.0,542.1 1456.5,540.6 1457.0,541.1 1457.5,539.8 1458.0,537.9 1458.5,542.3 1459.0,538.1 1459.5,541.6 1460.0,540.0 1460.5,543.6 1461.0,543.6 1461.5,540.0 1462.0,540.5 1462.5,541.5 1463.0,540.2 1463.5,543.4 1464.0,537.9 1464.5,536.2 1465.0,540.6 1465.5,539.3 1466.0,541.6 1466.5,538.7 1467.0,541.0 1467.5,541.8 1468.0,540.6 1468.5,542.5 1469.0,541.1 1469.5,539.4 1470.0,546.0 1470.5,539.1 1471.0,541.7 1471.5,539.5 1472.0,543.5 1472.5,543.9 1473.0,539.3 1473.5,541.9 1474.0,539.7 1474.5,536.2 1475.0,538.1 1475.5,541.6 1476.0,535.6 1476.5,542.9 1477.0,548.0 1477.5,533.8 1478.0,541.9 1478.5,538.0 1479.0,542.4 1479.5,538.1 1480.0,540.0 1480.5,532.9 1481.0,541.5 1481.5,536.4 1482.0,539.6 1482.5,537.8 1483.0,539.7 1483.5,540.2 1484.0,544.7 1484.5,538.9 1485.0,545.6 1485.5,540.5 1486.0,538.1 1486.5,540.7 1487.0,538.5 1487.5,536.7 1488.0,533.6 1488.5,540.2 1489.0,540.4 1489.5,537.7 1490.0,539.9 1490.5,541.0 1491.0,542.8 1491.5,540.9 1492.0,540.7 1492.5,542.8 1493.0,539.5 1493.5,539.8 1494.0,544.8 1494.5,544.3 1495.0,538.6 1495.5,538.0 1496.0,537.4 1496.5,539.8 1497.0,540.6 1497.5,543.1 1498.0,539.5 1498.5,544.9 1499.0,546.8 1499.5,540.6 1500.0,541.1 1500.5,536.3 1501.0,546.8 1501.5,543.0 1502.0,543.0 1502.5,543.7 1503.0,538.3 1503.5,539.2 1504.0,537.6 1504.5,542.3 1505.0,540.1 1505.5,537.1 1506.0,542.2 1506.5,544.3 1507.0,548.0 1507.5,539.7 1508.0,541.5 1508.5,547.1 1509.0,540.8 1509.5,537.1 1510.0,535.2 1510.5,543.4 1511.0,535.7 1511.5,539.9 1512.0,538.4 1512.5,540.3 1513.0,548.0 1513.5,535.9 1514.0,536.0 1514.5,541.3 1515.0,540.9 1515.5,540.7 1516.0,538.9 1516.5,538.8 1517.0,547.1 1517.5,542.0 1518.0,542.7 1518.5,539.7 1519.0,542.8 1519.5,541.6 1520.0,547.4 1520.5,543.2 1521.0,543.8 1521.5,538.2 1522.0,538.4 1522.5,536.7 1523.0,548.0 1523.5,541.2 1524.0,540.0 1524.5,536.1 1525.0,538.8 1525.5,537.3 1526.0,539.0 1526.5,526.8 1527.0,539.0 1527.5,540.4 1528.0,538.7 1528.5,536.5 1529.0,536.7 1529.5,544.4 1530.0,541.9 1530.5,543.5 1531.0,542.0 1531.5,545.2 1532.0,533.3 1532.5,540.6 1533.0,543.3 1533.5,543.0 1534.0,539.4 1534.5,544.0 1535.0,541.7 1535.5,539.2 1536.0,536.0 1536.5,540.8 1537.0,542.9 1537.5,531.0 1538.0,542.7 1538.5,541.2 1539.0,542.9 1539.5,534.0 1540.0,544.2 1540.5,540.7 1541.0,548.0 1541.5,543.2 1542.0,537.2 1542.5,542.6 1543.0,545.6 1543.5,544.5 1544.0,538.9 1544.5,537.1 1545.0,540.6 1545.5,544.8 1546.0,540.4 1546.5,541.3 1547.0,540.6 1547.5,536.4 1548.0,542.9 1548.5,545.4 1549.0,531.9 1549.5,546.6 1550.0,541.0 1550.5,539.5 1551.0,548.0 1551.5,531.8 1552.0,535.4 1552.5,542.1 1553.0,544.0 1553.5,537.9 1554.0,531.9 1554.5,534.8 1555.0,541.2 1555.5,536.9 1556.0,539.0 1556.5,539.6 1557.0,537.4 1557.5,540.5 1558.0,541.3 1558.5,536.1 1559.0,540.6 1559.5,539.4 1560.0,539.4 1560.5,542.3 1561.0,535.7 1561.5,539.9 1562.0,544.9 1562.5,540.3 1563.0,547.5 1563.5,536.9 1564.0,547.8 1564.5,540.3 1565.0,543.2 1565.5,538.8 1566.0,539.8 1566.5,539.6 1567.0,527.1 1567.5,545.2 1568.0,540.5 1568.5,546.4 1569.0,535.5 1569.5,536.1 1570.0,534.2 1570.5,536.3 1571.0,535.4 1571.5,543.7 1572.0,545.2 1572.5,535.2 1573.0,538.1 1573.5,546.2 1574.0,535.8 1574.5,543.0 1575.0,541.3 1575.5,538.3 1576.0,544.4 1576.5,535.2 1577.0,535.8 1577.5,542.5 1578.0,545.7 1578.5,538.6 1579.0,537.3 1579.5,528.5 1580.0,544.0 1580.5,535.8 1581.0,540.4 1581.5,539.0 1582.0,545.8 1582.5,540.0 1583.0,532.3 1583.5,540.1 1584.0,548.0 1584.5,539.7 1585.0,545.4 1585.5,542.1 1586.0,539.0 1586.5,545.5 1587.0,541.8 1587.5,531.0 1588.0,534.8 1588.5,543.6 1589.0,548.0 1589.5,542.4 1590.0,543.0 1590.5,543.6 1591.0,541.7 1591.5,545.6 1592.0,534.0 1592.5,543.2 1593.0,540.2 1593.5,530.7 1594.0,542.1 1594.5,546.4 1595.0,548.0 1595.5,538.3 1596.0,540.8 1596.5,531.6 1597.0,548.0 1597.5,544.3 1598.0,542.3 1598.5,538.6 1599.0,545.2 1599.5,548.0 1600.0,532.0 1600.5,548.0 1601.0,545.7 1601.5,548.0 1602.0,533.8 1602.5,548.0 1603.0,535.8 1603.5,533.9 1604.0,548.0 1604.5,530.9 1605.0,538.8 1605.5,547.0 1606.0,527.4 1606.5,537.9 1607.0,536.1 1607.5,537.0 1608.0,541.8 1608.5,539.5 1609.0,539.9 1609.5,544.9 1610.0,548.0 1610.5,536.5 1611.0,542.7 1611.5,547.8 1612.0,543.2 1612.5,544.6 1613.0,531.1 1613.5,537.9 1614.0,548.0 1614.5,540.2 1615.0,543.2 1615.5,544.8 1616.0,535.7 1616.5,542.8 1617.0,548.0 1617.5,539.7 1618.0,546.7 1618.5,539.1 1619.0,546.7 1619.5,527.2 1620.0,529.1 1620.5,541.8 1621.0,528.8 1621.5,543.8 1622.0,541.0 1622.5,527.7 1623.0,543.6 1623.5,534.6 1624.0,539.9 1624.5,529.3 1625.0,540.0 1625.5,548.0 1626.0,535.8 1626.5,539.7 1627.0,538.9 1627.5,536.3 1628.0,532.3 1628.5,545.6 1629.0,548.0 1629.5,545.8 1630.0,548.0 1630.5,547.6 1631.0,526.7 1631.5,544.2 1632.0,543.1 1632.5,538.5 1633.0,542.7 1633.5,548.0 1634.0,539.1 1634.5,543.6 1635.0,524.7 1635.5,530.7 1636.0,545.2 1636.5,534.5 1637.0,546.5 1637.5,535.2 1638.0,548.0 1638.5,547.7 1639.0,537.0 1639.5,537.9 1640.0,538.2 1640.5,537.4 1641.0,530.1 1641.5,524.0 1642.0,544.5 1642.5,529.3 1643.0,534.4 1643.5,543.7 1644.0,540.0 1644.5,525.9 1645.0,537.2 1645.5,543.3 1646.0,542.6 1646.5,544.6 1647.0,548.0 1647.5,548.0 1648.0,542.9 1648.5,539.7 1649.0,523.5 1649.5,539.4 1650.0,531.7 1650.5,544.2 1651.0,541.8 1651.5,526.1 1652.0,548.0 1652.5,540.6 1653.0,521.7 1653.5,548.0 1654.0,548.0 1654.5,545.5 1655.0,536.0 1655.5,537.6 1656.0,532.6 1656.5,522.0 1657.0,542.0 1657.5,533.4 1658.0,548.0 1658.5,547.7 1659.0,537.2 1659.5,541.6 1660.0,539.8 1660.5,548.0 1661.0,520.5 1661.5,500.9 1662.0,509.8 1662.5,510.8 1663.0,521.3 1663.5,548.0 1664.0,536.3 1664.5,529.1 1665.0,529.4 1665.5,547.3 1666.0,548.0 1666.5,548.0 1667.0,538.1" fill="none" stroke="#8c564b" stroke-width="1.5" stroke-linejoin="round"/></g>
<rect x="696.6" y="73.2" width="970.8" height="468.4" fill="none" stroke="#000" stroke-width="1.3"/>
<g font-family="Liberation Sans, sans-serif" font-size="11.8" fill="#000" letter-spacing="0.35"><text x="793.2" y="556" text-anchor="middle">400</text><text x="987.2" y="556" text-anchor="middle">500</text><text x="1181.3" y="556" text-anchor="middle">600</text><text x="1375.3" y="556" text-anchor="middle">700</text><text x="1569.4" y="556" text-anchor="middle">800</text><text x="691.5" y="545.9" text-anchor="end">0</text><text x="691.5" y="485.4" text-anchor="end">1</text><text x="691.5" y="424.9" text-anchor="end">2</text><text x="691.5" y="364.4" text-anchor="end">3</text><text x="691.5" y="303.9" text-anchor="end">4</text><text x="691.5" y="243.4" text-anchor="end">5</text><text x="691.5" y="182.9" text-anchor="end">6</text><text x="691.5" y="122.4" text-anchor="end">7</text><text x="696.8" y="69.3" font-size="12.2" letter-spacing="0.55">1e−6</text></g>
<text x="1181.5" y="573" text-anchor="middle" font-family="Liberation Sans, sans-serif" font-size="12.6" textLength="189" lengthAdjust="spacing">Spectrometer Wavelength [nm]</text>
<text transform="translate(674,308) rotate(-90)" text-anchor="middle" font-family="Liberation Sans, sans-serif" font-size="12.6" textLength="186" lengthAdjust="spacing">Spectrometer Intensity [W/nm]</text>
<rect x="1565" y="79.8" width="96.3" height="110.4" rx="2.5" fill="#fff" fill-opacity="0.8" stroke="#d9d9d9" stroke-width="1"/>
<g font-family="Liberation Sans, sans-serif" font-size="12.3" fill="#000"><line x1="1569.5" y1="89" x2="1594" y2="89" stroke="#1f77b4" stroke-width="1.35"/><text x="1603.3" y="93.2" textLength="51.4" lengthAdjust="spacing">Loop1=1</text><line x1="1569.5" y1="107" x2="1594" y2="107" stroke="#ff7f0e" stroke-width="1.35"/><text x="1603.3" y="111.2" textLength="51.4" lengthAdjust="spacing">Loop1=2</text><line x1="1569.5" y1="125" x2="1594" y2="125" stroke="#2ca02c" stroke-width="1.35"/><text x="1603.3" y="129.2" textLength="51.4" lengthAdjust="spacing">Loop1=3</text><line x1="1569.5" y1="143" x2="1594" y2="143" stroke="#d62728" stroke-width="1.35"/><text x="1603.3" y="147.2" textLength="51.4" lengthAdjust="spacing">Loop1=4</text><line x1="1569.5" y1="161" x2="1594" y2="161" stroke="#9467bd" stroke-width="1.35"/><text x="1603.3" y="165.2" textLength="51.4" lengthAdjust="spacing">Loop1=5</text><line x1="1569.5" y1="179" x2="1594" y2="179" stroke="#8c564b" stroke-width="1.35"/><text x="1603.3" y="183.2" textLength="51.4" lengthAdjust="spacing">Loop1=6</text></g>
<g fill="#000" stroke="none"><path d="M1551.2 91.2L1561 83.2L1570.9 91.6L1569.6 93L1561 85.8L1552.5 92.8Z"/><rect x="1565.9" y="83.2" width="2" height="4.6"/><path d="M1554.3 92.2L1561 86.7L1567.8 92.2V98.7H1562.6V94.4H1559.6V98.7H1554.3Z"/></g><g fill="#000"><path d="M1592 78.4l4.3 4.9h-2.8v5h5v-2.8l4.9 4.3l-4.9 4.3v-2.8h-5v5h2.8l-4.3 4.9l-4.3-4.9h2.8v-5h-5v2.8l-4.9-4.3l4.9-4.3v2.8h5v-5h-2.8z"/></g><g fill="none" stroke="#000"><circle cx="1621.2" cy="87.9" r="6.9" stroke-width="2.5"/><path d="M1626.4 93.2L1632 98.4" stroke-width="3.2" stroke-linecap="round"/></g><g><path d="M1646 80.8H1658.2L1662.4 85V97.6H1646Z" fill="none" stroke="#000" stroke-width="2.2" stroke-linejoin="round"/><rect x="1648" y="81" width="8.6" height="5.6" fill="#000"/><rect x="1653" y="82" width="1.9" height="3.4" fill="#fff"/><rect x="1648.6" y="92" width="11" height="5.6" fill="none" stroke="#000" stroke-width="1.6"/></g>
</svg>
 <div class="dockhdr" style="left:0;top:581px;width:1040px;height:19px"></div>
 <span class="tb" style="left:5px;top:585.6px;font-size:12px">Debug</span>
 <svg class="abs" style="left:1002px;top:585px" width="32" height="11" viewBox="0 0 32 11" fill="none" stroke="#333"><path d="M3.5 3.5V1.5H9.5V6.5H7.5" stroke-width="1.3"/><rect x="1.5" y="3.8" width="5.6" height="5" stroke-width="1.3"/><path d="M1.5 4.6H7" stroke-width="1.6"/><path d="M22.5 2l7 7M29.5 2l-7 7" stroke-width="1.8"/></svg>
 <div class="dbg">
  <div class="lines"><div class="ln d" style="top:0px">------------------------------------------------------------</div><div class="ln" style="top:13px">Debug: 27.3.2026 14:27:37<span style="position:absolute;left:163px">Run started</span></div><div class="ln" style="top:26px">Saturation: 24.16071428571429</div><div class="ln" style="top:39px">Saturation: 24.239285714285714</div><div class="ln" style="top:52px">Saturation: 24.203571428571426</div><div class="ln" style="top:65px">Saturation: 24.08214285714286</div><div class="ln" style="top:78px">Saturation: 100.0</div><div class="ln d" style="top:91px">------------------------------------------------------------</div><div class="ln" style="top:104px">Debug: 27.3.2026 14:28:35<span style="position:absolute;left:163px">Run stopped</span></div><div class="ln d" style="top:117px">------------------------------------------------------------</div><div class="ln" style="top:130px">Debug: 27.3.2026 14:29:35<span style="position:absolute;left:163px">Run started</span></div><div class="ln" style="top:143px">Saturation: 24.496428571428574</div><div class="ln" style="top:156px">Saturation: 24.24642857142857</div><div class="ln" style="top:169px">Saturation: 24.439285714285713</div><div class="ln" style="top:182px">Saturation: 100.0</div><div class="ln" style="top:195px">Saturation: 100.0</div><div class="ln" style="top:208px">Saturation: 100.0</div><div class="ln d" style="top:221px">------------------------------------------------------------</div><div class="ln" style="top:234px">Debug: 27.3.2026 14:30:35<span style="position:absolute;left:163px">Run stopped</span></div><div class="ln d" style="top:247px">------------------------------------------------------------</div><div class="ln" style="top:260px">Debug: 27.3.2026 14:30:43<span style="position:absolute;left:163px">Run started</span></div><div class="ln" style="top:273px">Saturation: 24.70714285714286</div><div class="ln" style="top:286px">Saturation: 30.317857142857143</div><div class="ln" style="top:299px">Saturation: 33.52142857142857</div><div class="ln" style="top:312px">Saturation: 33.43214285714286</div><div class="ln" style="top:325px">Saturation: 33.65714285714286</div><div class="ln" style="top:338px">Saturation: 33.35357142857143</div><div class="ln" style="top:351px">Saturation: 33.41785714285714</div><div class="ln d" style="top:364px">------------------------------------------------------------</div><div class="ln" style="top:377px">Debug: 27.3.2026 14:31:55<span style="position:absolute;left:163px">Run finished</span></div></div>
  <div class="abs" style="left:1016px;top:0;width:17px;height:392px;background:#f0f0f0"></div>
  <div class="abs" style="left:1016px;top:357px;width:15px;height:18px;background:#cdcdcd"></div>
  <svg class="abs" style="left:1016px;top:0" width="17" height="392" viewBox="0 0 17 392" fill="none" stroke="#555" stroke-width="1.7"><path d="M4.5 11l3.5-3.5l3.5 3.5"/><path d="M4.5 381l3.5 3.5l3.5-3.5"/></svg>
 </div>
</div>
<div id="tbar">
 <!-- start -->
 <svg class="abs" style="left:16px;top:11px" width="17" height="17" viewBox="0 0 17 17" fill="#fff"><path d="M0 2.3L6.9 1.35V7.9H0Z"/><path d="M7.7 1.25L16.4 0V7.9H7.7Z"/><path d="M0 8.7H6.9V15.25L0 14.3Z"/><path d="M7.7 8.7H16.4V16.6L7.7 15.35Z"/></svg>
 <!-- search -->
 <svg class="abs" style="left:62px;top:10px" width="22" height="22" viewBox="0 0 22 22" fill="none" stroke="#fff" stroke-width="1.3"><circle cx="12.5" cy="7.5" r="5.2"/><path d="M8.8 11.2L2.2 17.8"/></svg>
 <!-- task view -->
 <svg class="abs" style="left:111px;top:11px" width="18" height="17" viewBox="0 0 18 17" fill="none" stroke="#fff" stroke-width="1.2"><rect x="1.6" y="5.3" width="10" height="6.6"/><path d="M1 1.4H12.2M1.6 1.4V3.9M11.6 1.4V3.9M1 15.8H12.2M1.6 15.8V13.3M11.6 15.8V13.3M15.6 1V16.2"/><rect x="14.2" y="5.3" width="2" height="2.8" fill="#fff" stroke="none"/></svg>
 <!-- active app -->
 <div class="abs" style="left:147px;top:0;width:44px;height:40px;background:#3b3d42"></div>
 <div class="abs" style="left:191px;top:0;width:4px;height:40px;background:#2a2c31"></div>
 <svg class="abs" style="left:161px;top:8px" width="22" height="24" viewBox="0 0 22 24"><g transform="translate(0.9,0.4) scale(1.38)"><path d="M11.3 4 C9.5 2.8 6.5 3 6 5.5 C5.6 8 9.6 9.5 9 12 C8.5 14.8 5.5 15.4 3 13.6" fill="none" stroke="#0a8c0a" stroke-width="3.5" stroke-linecap="round"/><path d="M9.2 10.6 C9.3 13 7.5 14 5.4 13.7" fill="none" stroke="#2fc42f" stroke-width="1.4" stroke-linecap="round"/><path d="M10.9 3.9 C9.6 3.2 7.8 3.4 7.2 4.6" fill="none" stroke="#22b022" stroke-width="1.3" stroke-linecap="round"/></g></svg>
 <!-- chrome -->
 <svg class="abs" style="left:208px;top:8px" width="24" height="24" viewBox="-12 -12 24 24"><circle r="12" fill="#db4437"/><path d="M0 0L-10.39 -6A12 12 0 0 0 6 10.39Z" fill="#0f9d58"/><path d="M0 0L6 10.39A12 12 0 0 0 10.39 -6L12 0Z" fill="#ffcd40"/><path d="M0 0L6 10.4A12 12 0 0 0 11.3 -4.1H0Z" fill="#ffcd40"/><path d="M0 0L-10.39 -6A12 12 0 0 1 11.3 -4.1H0Z" fill="#db4437"/><circle r="5.4" fill="#fff"/><circle r="4.3" fill="#4285f4"/></svg>
 <!-- powershell -->
 <svg class="abs" style="left:256px;top:10px" width="26" height="20" viewBox="0 0 26 20"><path d="M4.6 0.8H25.2L20.6 18.8H0.6Z" fill="#2f63c9"/><path d="M7.4 4.6L14 9.6L6 14.8" fill="none" stroke="#fff" stroke-width="2" stroke-linecap="round" stroke-linejoin="round"/><path d="M12.6 15H17.6" stroke="#fff" stroke-width="1.8" stroke-linecap="round"/></svg>
 <!-- explorer -->
 <svg class="abs" style="left:306px;top:10px" width="24" height="20" viewBox="0 0 24 20"><path d="M1.2 1H9.2L10.8 2.6H22.6V18.4H1.2Z" fill="#f5c24c"/><rect x="1.2" y="3.6" width="21.4" height="14.8" fill="#ffe69a"/><path d="M2.4 2H8.4" stroke="#fff3c8" stroke-width="1"/><path d="M5.4 18.8V11.2H18.4V18.8H14.6V14.6H9.2V18.8Z" fill="#2aa6ec"/><rect x="5.4" y="11.2" width="13" height="1.6" fill="#1e8fd6"/></svg>
 <div class="ul" style="left:147px;width:48px"></div><div class="ul" style="left:200px;width:40px"></div><div class="ul" style="left:249px;width:40px"></div><div class="ul" style="left:298px;width:40px"></div>
 <!-- tray -->
 <svg class="abs" style="left:1454px;top:15px" width="14" height="9" viewBox="0 0 14 9" fill="none" stroke="#fff" stroke-width="1.2"><path d="M1.2 7.8L7 2L12.8 7.8"/></svg>
 <svg class="abs" style="left:1476px;top:13px" width="18" height="15" viewBox="0 0 18 15" fill="none" stroke="#fff" stroke-width="1.1"><path d="M4.6 1.6H16.4V10.6H4.6"/><rect x="1.6" y="1.6" width="4.6" height="3.4"/><path d="M3.9 5V12.9H12.4M9.4 10.6V12.9"/><path d="M2.6 3l1 1l1.6-1.6" stroke-width="0.8"/></svg>
 <svg class="abs" style="left:1500px;top:13px" width="17" height="14" viewBox="0 0 17 14" fill="none" stroke="#fff" stroke-width="1.1"><path d="M1.6 4.8H3.6L6.6 1.6V12.4L3.6 9.2H1.6Z"/><path d="M10.4 4.8l4.4 4.4M14.8 4.8l-4.4 4.4"/></svg>
 <span class="w" style="left:1527.5px;top:14px;font-size:11px;letter-spacing:-0.25px">ENG</span>
 <span class="w" style="left:1578.5px;top:5.5px;font-size:11.5px;letter-spacing:-0.6px">14:32</span>
 <span class="w" style="left:1563px;top:23.3px;font-size:11.5px;letter-spacing:-0.03px">27/03/2026</span>
 <svg class="abs" style="left:1637px;top:10px" width="30" height="28" viewBox="0 0 30 28"><path d="M2 2.2H18V14.6H6.4V18.4L2.8 14.6H2Z" fill="#fff"/><path d="M4.6 5.4H15.4M4.6 8H15.4M4.6 10.6H15.4" stroke="#0b0d12" stroke-width="0.9"/><circle cx="17.4" cy="17" r="9.6" fill="#0b0d12"/><circle cx="17.4" cy="17" r="8.6" fill="#3d3f43" stroke="#55575b" stroke-width="0.8"/><text x="17.4" y="21" text-anchor="middle" font-family="Liberation Sans, sans-serif" font-size="11.5" fill="#fff" letter-spacing="-0.3" stroke="#fff" stroke-width="0.3">20</text></svg>
 <div class="abs" style="left:1675px;top:0;width:1px;height:40px;background:#4a4c50"></div>
</div>
</body></html>
